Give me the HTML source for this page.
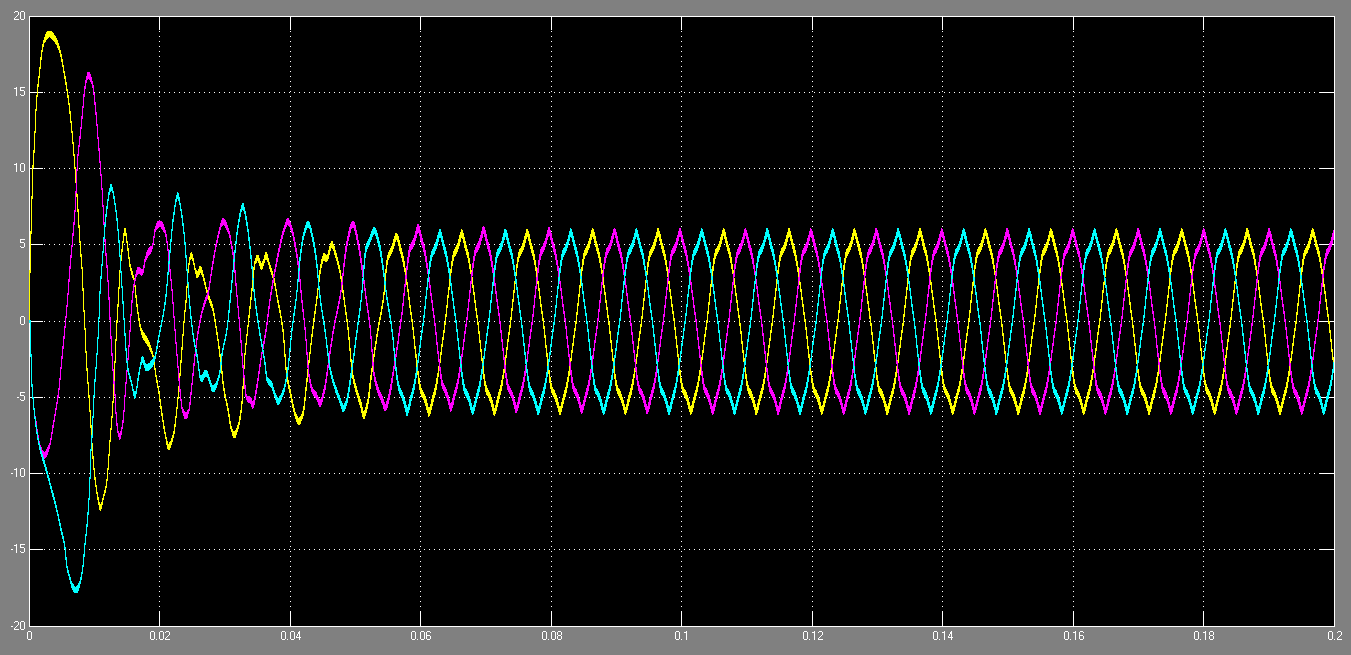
<!DOCTYPE html>
<html><head><meta charset="utf-8"><style>
html,body{margin:0;padding:0;background:#808080;width:1351px;height:655px;overflow:hidden;position:relative}
svg{position:absolute;left:0;top:0}
</style></head><body>
<svg width="1351" height="655" viewBox="0 0 1351 655">
<rect x="29" y="16" width="1306" height="611" fill="#000"/>
<g shape-rendering="crispEdges"><rect x="159" y="16" width="1" height="14" fill="#fff"/><rect x="159" y="612" width="1" height="14" fill="#fff"/><rect x="290" y="16" width="1" height="14" fill="#fff"/><rect x="290" y="612" width="1" height="14" fill="#fff"/><rect x="420" y="16" width="1" height="14" fill="#fff"/><rect x="420" y="612" width="1" height="14" fill="#fff"/><rect x="551" y="16" width="1" height="14" fill="#fff"/><rect x="551" y="612" width="1" height="14" fill="#fff"/><rect x="681" y="16" width="1" height="14" fill="#fff"/><rect x="681" y="612" width="1" height="14" fill="#fff"/><rect x="812" y="16" width="1" height="14" fill="#fff"/><rect x="812" y="612" width="1" height="14" fill="#fff"/><rect x="942" y="16" width="1" height="14" fill="#fff"/><rect x="942" y="612" width="1" height="14" fill="#fff"/><rect x="1073" y="16" width="1" height="14" fill="#fff"/><rect x="1073" y="612" width="1" height="14" fill="#fff"/><rect x="1203" y="16" width="1" height="14" fill="#fff"/><rect x="1203" y="612" width="1" height="14" fill="#fff"/><rect x="29" y="92" width="14" height="1" fill="#fff"/><rect x="1319" y="92" width="15" height="1" fill="#fff"/><rect x="29" y="168" width="14" height="1" fill="#fff"/><rect x="1319" y="168" width="15" height="1" fill="#fff"/><rect x="29" y="244" width="14" height="1" fill="#fff"/><rect x="1319" y="244" width="15" height="1" fill="#fff"/><rect x="29" y="321" width="14" height="1" fill="#fff"/><rect x="1319" y="321" width="15" height="1" fill="#fff"/><rect x="29" y="397" width="14" height="1" fill="#fff"/><rect x="1319" y="397" width="15" height="1" fill="#fff"/><rect x="29" y="473" width="14" height="1" fill="#fff"/><rect x="1319" y="473" width="15" height="1" fill="#fff"/><rect x="29" y="549" width="14" height="1" fill="#fff"/><rect x="1319" y="549" width="15" height="1" fill="#fff"/><path fill="#fff" d="M159 31h1v1h-1zM159 36h1v1h-1zM159 41h1v1h-1zM159 46h1v1h-1zM159 51h1v1h-1zM159 56h1v1h-1zM159 61h1v1h-1zM159 66h1v1h-1zM159 71h1v1h-1zM159 76h1v1h-1zM159 81h1v1h-1zM159 86h1v1h-1zM159 91h1v1h-1zM159 96h1v1h-1zM159 101h1v1h-1zM159 106h1v1h-1zM159 111h1v1h-1zM159 116h1v1h-1zM159 121h1v1h-1zM159 126h1v1h-1zM159 131h1v1h-1zM159 136h1v1h-1zM159 141h1v1h-1zM159 146h1v1h-1zM159 151h1v1h-1zM159 156h1v1h-1zM159 161h1v1h-1zM159 166h1v1h-1zM159 171h1v1h-1zM159 176h1v1h-1zM159 181h1v1h-1zM159 186h1v1h-1zM159 191h1v1h-1zM159 196h1v1h-1zM159 201h1v1h-1zM159 206h1v1h-1zM159 211h1v1h-1zM159 216h1v1h-1zM159 221h1v1h-1zM159 226h1v1h-1zM159 231h1v1h-1zM159 236h1v1h-1zM159 241h1v1h-1zM159 246h1v1h-1zM159 251h1v1h-1zM159 256h1v1h-1zM159 261h1v1h-1zM159 266h1v1h-1zM159 271h1v1h-1zM159 276h1v1h-1zM159 281h1v1h-1zM159 286h1v1h-1zM159 291h1v1h-1zM159 296h1v1h-1zM159 301h1v1h-1zM159 306h1v1h-1zM159 311h1v1h-1zM159 316h1v1h-1zM159 321h1v1h-1zM159 326h1v1h-1zM159 331h1v1h-1zM159 336h1v1h-1zM159 341h1v1h-1zM159 346h1v1h-1zM159 351h1v1h-1zM159 356h1v1h-1zM159 361h1v1h-1zM159 366h1v1h-1zM159 371h1v1h-1zM159 376h1v1h-1zM159 381h1v1h-1zM159 386h1v1h-1zM159 391h1v1h-1zM159 396h1v1h-1zM159 401h1v1h-1zM159 406h1v1h-1zM159 411h1v1h-1zM159 416h1v1h-1zM159 421h1v1h-1zM159 426h1v1h-1zM159 431h1v1h-1zM159 436h1v1h-1zM159 441h1v1h-1zM159 446h1v1h-1zM159 451h1v1h-1zM159 456h1v1h-1zM159 461h1v1h-1zM159 466h1v1h-1zM159 471h1v1h-1zM159 476h1v1h-1zM159 481h1v1h-1zM159 486h1v1h-1zM159 491h1v1h-1zM159 496h1v1h-1zM159 501h1v1h-1zM159 506h1v1h-1zM159 511h1v1h-1zM159 516h1v1h-1zM159 521h1v1h-1zM159 526h1v1h-1zM159 531h1v1h-1zM159 536h1v1h-1zM159 541h1v1h-1zM159 546h1v1h-1zM159 551h1v1h-1zM159 556h1v1h-1zM159 561h1v1h-1zM159 566h1v1h-1zM159 571h1v1h-1zM159 576h1v1h-1zM159 581h1v1h-1zM159 586h1v1h-1zM159 591h1v1h-1zM159 596h1v1h-1zM159 601h1v1h-1zM159 606h1v1h-1zM159 611h1v1h-1zM290 31h1v1h-1zM290 36h1v1h-1zM290 41h1v1h-1zM290 46h1v1h-1zM290 51h1v1h-1zM290 56h1v1h-1zM290 61h1v1h-1zM290 66h1v1h-1zM290 71h1v1h-1zM290 76h1v1h-1zM290 81h1v1h-1zM290 86h1v1h-1zM290 91h1v1h-1zM290 96h1v1h-1zM290 101h1v1h-1zM290 106h1v1h-1zM290 111h1v1h-1zM290 116h1v1h-1zM290 121h1v1h-1zM290 126h1v1h-1zM290 131h1v1h-1zM290 136h1v1h-1zM290 141h1v1h-1zM290 146h1v1h-1zM290 151h1v1h-1zM290 156h1v1h-1zM290 161h1v1h-1zM290 166h1v1h-1zM290 171h1v1h-1zM290 176h1v1h-1zM290 181h1v1h-1zM290 186h1v1h-1zM290 191h1v1h-1zM290 196h1v1h-1zM290 201h1v1h-1zM290 206h1v1h-1zM290 211h1v1h-1zM290 216h1v1h-1zM290 221h1v1h-1zM290 226h1v1h-1zM290 231h1v1h-1zM290 236h1v1h-1zM290 241h1v1h-1zM290 246h1v1h-1zM290 251h1v1h-1zM290 256h1v1h-1zM290 261h1v1h-1zM290 266h1v1h-1zM290 271h1v1h-1zM290 276h1v1h-1zM290 281h1v1h-1zM290 286h1v1h-1zM290 291h1v1h-1zM290 296h1v1h-1zM290 301h1v1h-1zM290 306h1v1h-1zM290 311h1v1h-1zM290 316h1v1h-1zM290 321h1v1h-1zM290 326h1v1h-1zM290 331h1v1h-1zM290 336h1v1h-1zM290 341h1v1h-1zM290 346h1v1h-1zM290 351h1v1h-1zM290 356h1v1h-1zM290 361h1v1h-1zM290 366h1v1h-1zM290 371h1v1h-1zM290 376h1v1h-1zM290 381h1v1h-1zM290 386h1v1h-1zM290 391h1v1h-1zM290 396h1v1h-1zM290 401h1v1h-1zM290 406h1v1h-1zM290 411h1v1h-1zM290 416h1v1h-1zM290 421h1v1h-1zM290 426h1v1h-1zM290 431h1v1h-1zM290 436h1v1h-1zM290 441h1v1h-1zM290 446h1v1h-1zM290 451h1v1h-1zM290 456h1v1h-1zM290 461h1v1h-1zM290 466h1v1h-1zM290 471h1v1h-1zM290 476h1v1h-1zM290 481h1v1h-1zM290 486h1v1h-1zM290 491h1v1h-1zM290 496h1v1h-1zM290 501h1v1h-1zM290 506h1v1h-1zM290 511h1v1h-1zM290 516h1v1h-1zM290 521h1v1h-1zM290 526h1v1h-1zM290 531h1v1h-1zM290 536h1v1h-1zM290 541h1v1h-1zM290 546h1v1h-1zM290 551h1v1h-1zM290 556h1v1h-1zM290 561h1v1h-1zM290 566h1v1h-1zM290 571h1v1h-1zM290 576h1v1h-1zM290 581h1v1h-1zM290 586h1v1h-1zM290 591h1v1h-1zM290 596h1v1h-1zM290 601h1v1h-1zM290 606h1v1h-1zM290 611h1v1h-1zM420 31h1v1h-1zM420 36h1v1h-1zM420 41h1v1h-1zM420 46h1v1h-1zM420 51h1v1h-1zM420 56h1v1h-1zM420 61h1v1h-1zM420 66h1v1h-1zM420 71h1v1h-1zM420 76h1v1h-1zM420 81h1v1h-1zM420 86h1v1h-1zM420 91h1v1h-1zM420 96h1v1h-1zM420 101h1v1h-1zM420 106h1v1h-1zM420 111h1v1h-1zM420 116h1v1h-1zM420 121h1v1h-1zM420 126h1v1h-1zM420 131h1v1h-1zM420 136h1v1h-1zM420 141h1v1h-1zM420 146h1v1h-1zM420 151h1v1h-1zM420 156h1v1h-1zM420 161h1v1h-1zM420 166h1v1h-1zM420 171h1v1h-1zM420 176h1v1h-1zM420 181h1v1h-1zM420 186h1v1h-1zM420 191h1v1h-1zM420 196h1v1h-1zM420 201h1v1h-1zM420 206h1v1h-1zM420 211h1v1h-1zM420 216h1v1h-1zM420 221h1v1h-1zM420 226h1v1h-1zM420 231h1v1h-1zM420 236h1v1h-1zM420 241h1v1h-1zM420 246h1v1h-1zM420 251h1v1h-1zM420 256h1v1h-1zM420 261h1v1h-1zM420 266h1v1h-1zM420 271h1v1h-1zM420 276h1v1h-1zM420 281h1v1h-1zM420 286h1v1h-1zM420 291h1v1h-1zM420 296h1v1h-1zM420 301h1v1h-1zM420 306h1v1h-1zM420 311h1v1h-1zM420 316h1v1h-1zM420 321h1v1h-1zM420 326h1v1h-1zM420 331h1v1h-1zM420 336h1v1h-1zM420 341h1v1h-1zM420 346h1v1h-1zM420 351h1v1h-1zM420 356h1v1h-1zM420 361h1v1h-1zM420 366h1v1h-1zM420 371h1v1h-1zM420 376h1v1h-1zM420 381h1v1h-1zM420 386h1v1h-1zM420 391h1v1h-1zM420 396h1v1h-1zM420 401h1v1h-1zM420 406h1v1h-1zM420 411h1v1h-1zM420 416h1v1h-1zM420 421h1v1h-1zM420 426h1v1h-1zM420 431h1v1h-1zM420 436h1v1h-1zM420 441h1v1h-1zM420 446h1v1h-1zM420 451h1v1h-1zM420 456h1v1h-1zM420 461h1v1h-1zM420 466h1v1h-1zM420 471h1v1h-1zM420 476h1v1h-1zM420 481h1v1h-1zM420 486h1v1h-1zM420 491h1v1h-1zM420 496h1v1h-1zM420 501h1v1h-1zM420 506h1v1h-1zM420 511h1v1h-1zM420 516h1v1h-1zM420 521h1v1h-1zM420 526h1v1h-1zM420 531h1v1h-1zM420 536h1v1h-1zM420 541h1v1h-1zM420 546h1v1h-1zM420 551h1v1h-1zM420 556h1v1h-1zM420 561h1v1h-1zM420 566h1v1h-1zM420 571h1v1h-1zM420 576h1v1h-1zM420 581h1v1h-1zM420 586h1v1h-1zM420 591h1v1h-1zM420 596h1v1h-1zM420 601h1v1h-1zM420 606h1v1h-1zM420 611h1v1h-1zM551 31h1v1h-1zM551 36h1v1h-1zM551 41h1v1h-1zM551 46h1v1h-1zM551 51h1v1h-1zM551 56h1v1h-1zM551 61h1v1h-1zM551 66h1v1h-1zM551 71h1v1h-1zM551 76h1v1h-1zM551 81h1v1h-1zM551 86h1v1h-1zM551 91h1v1h-1zM551 96h1v1h-1zM551 101h1v1h-1zM551 106h1v1h-1zM551 111h1v1h-1zM551 116h1v1h-1zM551 121h1v1h-1zM551 126h1v1h-1zM551 131h1v1h-1zM551 136h1v1h-1zM551 141h1v1h-1zM551 146h1v1h-1zM551 151h1v1h-1zM551 156h1v1h-1zM551 161h1v1h-1zM551 166h1v1h-1zM551 171h1v1h-1zM551 176h1v1h-1zM551 181h1v1h-1zM551 186h1v1h-1zM551 191h1v1h-1zM551 196h1v1h-1zM551 201h1v1h-1zM551 206h1v1h-1zM551 211h1v1h-1zM551 216h1v1h-1zM551 221h1v1h-1zM551 226h1v1h-1zM551 231h1v1h-1zM551 236h1v1h-1zM551 241h1v1h-1zM551 246h1v1h-1zM551 251h1v1h-1zM551 256h1v1h-1zM551 261h1v1h-1zM551 266h1v1h-1zM551 271h1v1h-1zM551 276h1v1h-1zM551 281h1v1h-1zM551 286h1v1h-1zM551 291h1v1h-1zM551 296h1v1h-1zM551 301h1v1h-1zM551 306h1v1h-1zM551 311h1v1h-1zM551 316h1v1h-1zM551 321h1v1h-1zM551 326h1v1h-1zM551 331h1v1h-1zM551 336h1v1h-1zM551 341h1v1h-1zM551 346h1v1h-1zM551 351h1v1h-1zM551 356h1v1h-1zM551 361h1v1h-1zM551 366h1v1h-1zM551 371h1v1h-1zM551 376h1v1h-1zM551 381h1v1h-1zM551 386h1v1h-1zM551 391h1v1h-1zM551 396h1v1h-1zM551 401h1v1h-1zM551 406h1v1h-1zM551 411h1v1h-1zM551 416h1v1h-1zM551 421h1v1h-1zM551 426h1v1h-1zM551 431h1v1h-1zM551 436h1v1h-1zM551 441h1v1h-1zM551 446h1v1h-1zM551 451h1v1h-1zM551 456h1v1h-1zM551 461h1v1h-1zM551 466h1v1h-1zM551 471h1v1h-1zM551 476h1v1h-1zM551 481h1v1h-1zM551 486h1v1h-1zM551 491h1v1h-1zM551 496h1v1h-1zM551 501h1v1h-1zM551 506h1v1h-1zM551 511h1v1h-1zM551 516h1v1h-1zM551 521h1v1h-1zM551 526h1v1h-1zM551 531h1v1h-1zM551 536h1v1h-1zM551 541h1v1h-1zM551 546h1v1h-1zM551 551h1v1h-1zM551 556h1v1h-1zM551 561h1v1h-1zM551 566h1v1h-1zM551 571h1v1h-1zM551 576h1v1h-1zM551 581h1v1h-1zM551 586h1v1h-1zM551 591h1v1h-1zM551 596h1v1h-1zM551 601h1v1h-1zM551 606h1v1h-1zM551 611h1v1h-1zM681 31h1v1h-1zM681 36h1v1h-1zM681 41h1v1h-1zM681 46h1v1h-1zM681 51h1v1h-1zM681 56h1v1h-1zM681 61h1v1h-1zM681 66h1v1h-1zM681 71h1v1h-1zM681 76h1v1h-1zM681 81h1v1h-1zM681 86h1v1h-1zM681 91h1v1h-1zM681 96h1v1h-1zM681 101h1v1h-1zM681 106h1v1h-1zM681 111h1v1h-1zM681 116h1v1h-1zM681 121h1v1h-1zM681 126h1v1h-1zM681 131h1v1h-1zM681 136h1v1h-1zM681 141h1v1h-1zM681 146h1v1h-1zM681 151h1v1h-1zM681 156h1v1h-1zM681 161h1v1h-1zM681 166h1v1h-1zM681 171h1v1h-1zM681 176h1v1h-1zM681 181h1v1h-1zM681 186h1v1h-1zM681 191h1v1h-1zM681 196h1v1h-1zM681 201h1v1h-1zM681 206h1v1h-1zM681 211h1v1h-1zM681 216h1v1h-1zM681 221h1v1h-1zM681 226h1v1h-1zM681 231h1v1h-1zM681 236h1v1h-1zM681 241h1v1h-1zM681 246h1v1h-1zM681 251h1v1h-1zM681 256h1v1h-1zM681 261h1v1h-1zM681 266h1v1h-1zM681 271h1v1h-1zM681 276h1v1h-1zM681 281h1v1h-1zM681 286h1v1h-1zM681 291h1v1h-1zM681 296h1v1h-1zM681 301h1v1h-1zM681 306h1v1h-1zM681 311h1v1h-1zM681 316h1v1h-1zM681 321h1v1h-1zM681 326h1v1h-1zM681 331h1v1h-1zM681 336h1v1h-1zM681 341h1v1h-1zM681 346h1v1h-1zM681 351h1v1h-1zM681 356h1v1h-1zM681 361h1v1h-1zM681 366h1v1h-1zM681 371h1v1h-1zM681 376h1v1h-1zM681 381h1v1h-1zM681 386h1v1h-1zM681 391h1v1h-1zM681 396h1v1h-1zM681 401h1v1h-1zM681 406h1v1h-1zM681 411h1v1h-1zM681 416h1v1h-1zM681 421h1v1h-1zM681 426h1v1h-1zM681 431h1v1h-1zM681 436h1v1h-1zM681 441h1v1h-1zM681 446h1v1h-1zM681 451h1v1h-1zM681 456h1v1h-1zM681 461h1v1h-1zM681 466h1v1h-1zM681 471h1v1h-1zM681 476h1v1h-1zM681 481h1v1h-1zM681 486h1v1h-1zM681 491h1v1h-1zM681 496h1v1h-1zM681 501h1v1h-1zM681 506h1v1h-1zM681 511h1v1h-1zM681 516h1v1h-1zM681 521h1v1h-1zM681 526h1v1h-1zM681 531h1v1h-1zM681 536h1v1h-1zM681 541h1v1h-1zM681 546h1v1h-1zM681 551h1v1h-1zM681 556h1v1h-1zM681 561h1v1h-1zM681 566h1v1h-1zM681 571h1v1h-1zM681 576h1v1h-1zM681 581h1v1h-1zM681 586h1v1h-1zM681 591h1v1h-1zM681 596h1v1h-1zM681 601h1v1h-1zM681 606h1v1h-1zM681 611h1v1h-1zM812 31h1v1h-1zM812 36h1v1h-1zM812 41h1v1h-1zM812 46h1v1h-1zM812 51h1v1h-1zM812 56h1v1h-1zM812 61h1v1h-1zM812 66h1v1h-1zM812 71h1v1h-1zM812 76h1v1h-1zM812 81h1v1h-1zM812 86h1v1h-1zM812 91h1v1h-1zM812 96h1v1h-1zM812 101h1v1h-1zM812 106h1v1h-1zM812 111h1v1h-1zM812 116h1v1h-1zM812 121h1v1h-1zM812 126h1v1h-1zM812 131h1v1h-1zM812 136h1v1h-1zM812 141h1v1h-1zM812 146h1v1h-1zM812 151h1v1h-1zM812 156h1v1h-1zM812 161h1v1h-1zM812 166h1v1h-1zM812 171h1v1h-1zM812 176h1v1h-1zM812 181h1v1h-1zM812 186h1v1h-1zM812 191h1v1h-1zM812 196h1v1h-1zM812 201h1v1h-1zM812 206h1v1h-1zM812 211h1v1h-1zM812 216h1v1h-1zM812 221h1v1h-1zM812 226h1v1h-1zM812 231h1v1h-1zM812 236h1v1h-1zM812 241h1v1h-1zM812 246h1v1h-1zM812 251h1v1h-1zM812 256h1v1h-1zM812 261h1v1h-1zM812 266h1v1h-1zM812 271h1v1h-1zM812 276h1v1h-1zM812 281h1v1h-1zM812 286h1v1h-1zM812 291h1v1h-1zM812 296h1v1h-1zM812 301h1v1h-1zM812 306h1v1h-1zM812 311h1v1h-1zM812 316h1v1h-1zM812 321h1v1h-1zM812 326h1v1h-1zM812 331h1v1h-1zM812 336h1v1h-1zM812 341h1v1h-1zM812 346h1v1h-1zM812 351h1v1h-1zM812 356h1v1h-1zM812 361h1v1h-1zM812 366h1v1h-1zM812 371h1v1h-1zM812 376h1v1h-1zM812 381h1v1h-1zM812 386h1v1h-1zM812 391h1v1h-1zM812 396h1v1h-1zM812 401h1v1h-1zM812 406h1v1h-1zM812 411h1v1h-1zM812 416h1v1h-1zM812 421h1v1h-1zM812 426h1v1h-1zM812 431h1v1h-1zM812 436h1v1h-1zM812 441h1v1h-1zM812 446h1v1h-1zM812 451h1v1h-1zM812 456h1v1h-1zM812 461h1v1h-1zM812 466h1v1h-1zM812 471h1v1h-1zM812 476h1v1h-1zM812 481h1v1h-1zM812 486h1v1h-1zM812 491h1v1h-1zM812 496h1v1h-1zM812 501h1v1h-1zM812 506h1v1h-1zM812 511h1v1h-1zM812 516h1v1h-1zM812 521h1v1h-1zM812 526h1v1h-1zM812 531h1v1h-1zM812 536h1v1h-1zM812 541h1v1h-1zM812 546h1v1h-1zM812 551h1v1h-1zM812 556h1v1h-1zM812 561h1v1h-1zM812 566h1v1h-1zM812 571h1v1h-1zM812 576h1v1h-1zM812 581h1v1h-1zM812 586h1v1h-1zM812 591h1v1h-1zM812 596h1v1h-1zM812 601h1v1h-1zM812 606h1v1h-1zM812 611h1v1h-1zM942 31h1v1h-1zM942 36h1v1h-1zM942 41h1v1h-1zM942 46h1v1h-1zM942 51h1v1h-1zM942 56h1v1h-1zM942 61h1v1h-1zM942 66h1v1h-1zM942 71h1v1h-1zM942 76h1v1h-1zM942 81h1v1h-1zM942 86h1v1h-1zM942 91h1v1h-1zM942 96h1v1h-1zM942 101h1v1h-1zM942 106h1v1h-1zM942 111h1v1h-1zM942 116h1v1h-1zM942 121h1v1h-1zM942 126h1v1h-1zM942 131h1v1h-1zM942 136h1v1h-1zM942 141h1v1h-1zM942 146h1v1h-1zM942 151h1v1h-1zM942 156h1v1h-1zM942 161h1v1h-1zM942 166h1v1h-1zM942 171h1v1h-1zM942 176h1v1h-1zM942 181h1v1h-1zM942 186h1v1h-1zM942 191h1v1h-1zM942 196h1v1h-1zM942 201h1v1h-1zM942 206h1v1h-1zM942 211h1v1h-1zM942 216h1v1h-1zM942 221h1v1h-1zM942 226h1v1h-1zM942 231h1v1h-1zM942 236h1v1h-1zM942 241h1v1h-1zM942 246h1v1h-1zM942 251h1v1h-1zM942 256h1v1h-1zM942 261h1v1h-1zM942 266h1v1h-1zM942 271h1v1h-1zM942 276h1v1h-1zM942 281h1v1h-1zM942 286h1v1h-1zM942 291h1v1h-1zM942 296h1v1h-1zM942 301h1v1h-1zM942 306h1v1h-1zM942 311h1v1h-1zM942 316h1v1h-1zM942 321h1v1h-1zM942 326h1v1h-1zM942 331h1v1h-1zM942 336h1v1h-1zM942 341h1v1h-1zM942 346h1v1h-1zM942 351h1v1h-1zM942 356h1v1h-1zM942 361h1v1h-1zM942 366h1v1h-1zM942 371h1v1h-1zM942 376h1v1h-1zM942 381h1v1h-1zM942 386h1v1h-1zM942 391h1v1h-1zM942 396h1v1h-1zM942 401h1v1h-1zM942 406h1v1h-1zM942 411h1v1h-1zM942 416h1v1h-1zM942 421h1v1h-1zM942 426h1v1h-1zM942 431h1v1h-1zM942 436h1v1h-1zM942 441h1v1h-1zM942 446h1v1h-1zM942 451h1v1h-1zM942 456h1v1h-1zM942 461h1v1h-1zM942 466h1v1h-1zM942 471h1v1h-1zM942 476h1v1h-1zM942 481h1v1h-1zM942 486h1v1h-1zM942 491h1v1h-1zM942 496h1v1h-1zM942 501h1v1h-1zM942 506h1v1h-1zM942 511h1v1h-1zM942 516h1v1h-1zM942 521h1v1h-1zM942 526h1v1h-1zM942 531h1v1h-1zM942 536h1v1h-1zM942 541h1v1h-1zM942 546h1v1h-1zM942 551h1v1h-1zM942 556h1v1h-1zM942 561h1v1h-1zM942 566h1v1h-1zM942 571h1v1h-1zM942 576h1v1h-1zM942 581h1v1h-1zM942 586h1v1h-1zM942 591h1v1h-1zM942 596h1v1h-1zM942 601h1v1h-1zM942 606h1v1h-1zM942 611h1v1h-1zM1073 31h1v1h-1zM1073 36h1v1h-1zM1073 41h1v1h-1zM1073 46h1v1h-1zM1073 51h1v1h-1zM1073 56h1v1h-1zM1073 61h1v1h-1zM1073 66h1v1h-1zM1073 71h1v1h-1zM1073 76h1v1h-1zM1073 81h1v1h-1zM1073 86h1v1h-1zM1073 91h1v1h-1zM1073 96h1v1h-1zM1073 101h1v1h-1zM1073 106h1v1h-1zM1073 111h1v1h-1zM1073 116h1v1h-1zM1073 121h1v1h-1zM1073 126h1v1h-1zM1073 131h1v1h-1zM1073 136h1v1h-1zM1073 141h1v1h-1zM1073 146h1v1h-1zM1073 151h1v1h-1zM1073 156h1v1h-1zM1073 161h1v1h-1zM1073 166h1v1h-1zM1073 171h1v1h-1zM1073 176h1v1h-1zM1073 181h1v1h-1zM1073 186h1v1h-1zM1073 191h1v1h-1zM1073 196h1v1h-1zM1073 201h1v1h-1zM1073 206h1v1h-1zM1073 211h1v1h-1zM1073 216h1v1h-1zM1073 221h1v1h-1zM1073 226h1v1h-1zM1073 231h1v1h-1zM1073 236h1v1h-1zM1073 241h1v1h-1zM1073 246h1v1h-1zM1073 251h1v1h-1zM1073 256h1v1h-1zM1073 261h1v1h-1zM1073 266h1v1h-1zM1073 271h1v1h-1zM1073 276h1v1h-1zM1073 281h1v1h-1zM1073 286h1v1h-1zM1073 291h1v1h-1zM1073 296h1v1h-1zM1073 301h1v1h-1zM1073 306h1v1h-1zM1073 311h1v1h-1zM1073 316h1v1h-1zM1073 321h1v1h-1zM1073 326h1v1h-1zM1073 331h1v1h-1zM1073 336h1v1h-1zM1073 341h1v1h-1zM1073 346h1v1h-1zM1073 351h1v1h-1zM1073 356h1v1h-1zM1073 361h1v1h-1zM1073 366h1v1h-1zM1073 371h1v1h-1zM1073 376h1v1h-1zM1073 381h1v1h-1zM1073 386h1v1h-1zM1073 391h1v1h-1zM1073 396h1v1h-1zM1073 401h1v1h-1zM1073 406h1v1h-1zM1073 411h1v1h-1zM1073 416h1v1h-1zM1073 421h1v1h-1zM1073 426h1v1h-1zM1073 431h1v1h-1zM1073 436h1v1h-1zM1073 441h1v1h-1zM1073 446h1v1h-1zM1073 451h1v1h-1zM1073 456h1v1h-1zM1073 461h1v1h-1zM1073 466h1v1h-1zM1073 471h1v1h-1zM1073 476h1v1h-1zM1073 481h1v1h-1zM1073 486h1v1h-1zM1073 491h1v1h-1zM1073 496h1v1h-1zM1073 501h1v1h-1zM1073 506h1v1h-1zM1073 511h1v1h-1zM1073 516h1v1h-1zM1073 521h1v1h-1zM1073 526h1v1h-1zM1073 531h1v1h-1zM1073 536h1v1h-1zM1073 541h1v1h-1zM1073 546h1v1h-1zM1073 551h1v1h-1zM1073 556h1v1h-1zM1073 561h1v1h-1zM1073 566h1v1h-1zM1073 571h1v1h-1zM1073 576h1v1h-1zM1073 581h1v1h-1zM1073 586h1v1h-1zM1073 591h1v1h-1zM1073 596h1v1h-1zM1073 601h1v1h-1zM1073 606h1v1h-1zM1073 611h1v1h-1zM1203 31h1v1h-1zM1203 36h1v1h-1zM1203 41h1v1h-1zM1203 46h1v1h-1zM1203 51h1v1h-1zM1203 56h1v1h-1zM1203 61h1v1h-1zM1203 66h1v1h-1zM1203 71h1v1h-1zM1203 76h1v1h-1zM1203 81h1v1h-1zM1203 86h1v1h-1zM1203 91h1v1h-1zM1203 96h1v1h-1zM1203 101h1v1h-1zM1203 106h1v1h-1zM1203 111h1v1h-1zM1203 116h1v1h-1zM1203 121h1v1h-1zM1203 126h1v1h-1zM1203 131h1v1h-1zM1203 136h1v1h-1zM1203 141h1v1h-1zM1203 146h1v1h-1zM1203 151h1v1h-1zM1203 156h1v1h-1zM1203 161h1v1h-1zM1203 166h1v1h-1zM1203 171h1v1h-1zM1203 176h1v1h-1zM1203 181h1v1h-1zM1203 186h1v1h-1zM1203 191h1v1h-1zM1203 196h1v1h-1zM1203 201h1v1h-1zM1203 206h1v1h-1zM1203 211h1v1h-1zM1203 216h1v1h-1zM1203 221h1v1h-1zM1203 226h1v1h-1zM1203 231h1v1h-1zM1203 236h1v1h-1zM1203 241h1v1h-1zM1203 246h1v1h-1zM1203 251h1v1h-1zM1203 256h1v1h-1zM1203 261h1v1h-1zM1203 266h1v1h-1zM1203 271h1v1h-1zM1203 276h1v1h-1zM1203 281h1v1h-1zM1203 286h1v1h-1zM1203 291h1v1h-1zM1203 296h1v1h-1zM1203 301h1v1h-1zM1203 306h1v1h-1zM1203 311h1v1h-1zM1203 316h1v1h-1zM1203 321h1v1h-1zM1203 326h1v1h-1zM1203 331h1v1h-1zM1203 336h1v1h-1zM1203 341h1v1h-1zM1203 346h1v1h-1zM1203 351h1v1h-1zM1203 356h1v1h-1zM1203 361h1v1h-1zM1203 366h1v1h-1zM1203 371h1v1h-1zM1203 376h1v1h-1zM1203 381h1v1h-1zM1203 386h1v1h-1zM1203 391h1v1h-1zM1203 396h1v1h-1zM1203 401h1v1h-1zM1203 406h1v1h-1zM1203 411h1v1h-1zM1203 416h1v1h-1zM1203 421h1v1h-1zM1203 426h1v1h-1zM1203 431h1v1h-1zM1203 436h1v1h-1zM1203 441h1v1h-1zM1203 446h1v1h-1zM1203 451h1v1h-1zM1203 456h1v1h-1zM1203 461h1v1h-1zM1203 466h1v1h-1zM1203 471h1v1h-1zM1203 476h1v1h-1zM1203 481h1v1h-1zM1203 486h1v1h-1zM1203 491h1v1h-1zM1203 496h1v1h-1zM1203 501h1v1h-1zM1203 506h1v1h-1zM1203 511h1v1h-1zM1203 516h1v1h-1zM1203 521h1v1h-1zM1203 526h1v1h-1zM1203 531h1v1h-1zM1203 536h1v1h-1zM1203 541h1v1h-1zM1203 546h1v1h-1zM1203 551h1v1h-1zM1203 556h1v1h-1zM1203 561h1v1h-1zM1203 566h1v1h-1zM1203 571h1v1h-1zM1203 576h1v1h-1zM1203 581h1v1h-1zM1203 586h1v1h-1zM1203 591h1v1h-1zM1203 596h1v1h-1zM1203 601h1v1h-1zM1203 606h1v1h-1zM1203 611h1v1h-1zM44 92h1v1h-1zM49 92h1v1h-1zM54 92h1v1h-1zM59 92h1v1h-1zM64 92h1v1h-1zM69 92h1v1h-1zM74 92h1v1h-1zM79 92h1v1h-1zM84 92h1v1h-1zM89 92h1v1h-1zM94 92h1v1h-1zM99 92h1v1h-1zM104 92h1v1h-1zM109 92h1v1h-1zM114 92h1v1h-1zM119 92h1v1h-1zM124 92h1v1h-1zM129 92h1v1h-1zM134 92h1v1h-1zM139 92h1v1h-1zM144 92h1v1h-1zM149 92h1v1h-1zM154 92h1v1h-1zM159 92h1v1h-1zM164 92h1v1h-1zM169 92h1v1h-1zM174 92h1v1h-1zM179 92h1v1h-1zM184 92h1v1h-1zM189 92h1v1h-1zM194 92h1v1h-1zM199 92h1v1h-1zM204 92h1v1h-1zM209 92h1v1h-1zM214 92h1v1h-1zM219 92h1v1h-1zM224 92h1v1h-1zM229 92h1v1h-1zM234 92h1v1h-1zM239 92h1v1h-1zM244 92h1v1h-1zM249 92h1v1h-1zM254 92h1v1h-1zM259 92h1v1h-1zM264 92h1v1h-1zM269 92h1v1h-1zM274 92h1v1h-1zM279 92h1v1h-1zM284 92h1v1h-1zM289 92h1v1h-1zM294 92h1v1h-1zM299 92h1v1h-1zM304 92h1v1h-1zM309 92h1v1h-1zM314 92h1v1h-1zM319 92h1v1h-1zM324 92h1v1h-1zM329 92h1v1h-1zM334 92h1v1h-1zM339 92h1v1h-1zM344 92h1v1h-1zM349 92h1v1h-1zM354 92h1v1h-1zM359 92h1v1h-1zM364 92h1v1h-1zM369 92h1v1h-1zM374 92h1v1h-1zM379 92h1v1h-1zM384 92h1v1h-1zM389 92h1v1h-1zM394 92h1v1h-1zM399 92h1v1h-1zM404 92h1v1h-1zM409 92h1v1h-1zM414 92h1v1h-1zM419 92h1v1h-1zM424 92h1v1h-1zM429 92h1v1h-1zM434 92h1v1h-1zM439 92h1v1h-1zM444 92h1v1h-1zM449 92h1v1h-1zM454 92h1v1h-1zM459 92h1v1h-1zM464 92h1v1h-1zM469 92h1v1h-1zM474 92h1v1h-1zM479 92h1v1h-1zM484 92h1v1h-1zM489 92h1v1h-1zM494 92h1v1h-1zM499 92h1v1h-1zM504 92h1v1h-1zM509 92h1v1h-1zM514 92h1v1h-1zM519 92h1v1h-1zM524 92h1v1h-1zM529 92h1v1h-1zM534 92h1v1h-1zM539 92h1v1h-1zM544 92h1v1h-1zM549 92h1v1h-1zM554 92h1v1h-1zM559 92h1v1h-1zM564 92h1v1h-1zM569 92h1v1h-1zM574 92h1v1h-1zM579 92h1v1h-1zM584 92h1v1h-1zM589 92h1v1h-1zM594 92h1v1h-1zM599 92h1v1h-1zM604 92h1v1h-1zM609 92h1v1h-1zM614 92h1v1h-1zM619 92h1v1h-1zM624 92h1v1h-1zM629 92h1v1h-1zM634 92h1v1h-1zM639 92h1v1h-1zM644 92h1v1h-1zM649 92h1v1h-1zM654 92h1v1h-1zM659 92h1v1h-1zM664 92h1v1h-1zM669 92h1v1h-1zM674 92h1v1h-1zM679 92h1v1h-1zM684 92h1v1h-1zM689 92h1v1h-1zM694 92h1v1h-1zM699 92h1v1h-1zM704 92h1v1h-1zM709 92h1v1h-1zM714 92h1v1h-1zM719 92h1v1h-1zM724 92h1v1h-1zM729 92h1v1h-1zM734 92h1v1h-1zM739 92h1v1h-1zM744 92h1v1h-1zM749 92h1v1h-1zM754 92h1v1h-1zM759 92h1v1h-1zM764 92h1v1h-1zM769 92h1v1h-1zM774 92h1v1h-1zM779 92h1v1h-1zM784 92h1v1h-1zM789 92h1v1h-1zM794 92h1v1h-1zM799 92h1v1h-1zM804 92h1v1h-1zM809 92h1v1h-1zM814 92h1v1h-1zM819 92h1v1h-1zM824 92h1v1h-1zM829 92h1v1h-1zM834 92h1v1h-1zM839 92h1v1h-1zM844 92h1v1h-1zM849 92h1v1h-1zM854 92h1v1h-1zM859 92h1v1h-1zM864 92h1v1h-1zM869 92h1v1h-1zM874 92h1v1h-1zM879 92h1v1h-1zM884 92h1v1h-1zM889 92h1v1h-1zM894 92h1v1h-1zM899 92h1v1h-1zM904 92h1v1h-1zM909 92h1v1h-1zM914 92h1v1h-1zM919 92h1v1h-1zM924 92h1v1h-1zM929 92h1v1h-1zM934 92h1v1h-1zM939 92h1v1h-1zM944 92h1v1h-1zM949 92h1v1h-1zM954 92h1v1h-1zM959 92h1v1h-1zM964 92h1v1h-1zM969 92h1v1h-1zM974 92h1v1h-1zM979 92h1v1h-1zM984 92h1v1h-1zM989 92h1v1h-1zM994 92h1v1h-1zM999 92h1v1h-1zM1004 92h1v1h-1zM1009 92h1v1h-1zM1014 92h1v1h-1zM1019 92h1v1h-1zM1024 92h1v1h-1zM1029 92h1v1h-1zM1034 92h1v1h-1zM1039 92h1v1h-1zM1044 92h1v1h-1zM1049 92h1v1h-1zM1054 92h1v1h-1zM1059 92h1v1h-1zM1064 92h1v1h-1zM1069 92h1v1h-1zM1074 92h1v1h-1zM1079 92h1v1h-1zM1084 92h1v1h-1zM1089 92h1v1h-1zM1094 92h1v1h-1zM1099 92h1v1h-1zM1104 92h1v1h-1zM1109 92h1v1h-1zM1114 92h1v1h-1zM1119 92h1v1h-1zM1124 92h1v1h-1zM1129 92h1v1h-1zM1134 92h1v1h-1zM1139 92h1v1h-1zM1144 92h1v1h-1zM1149 92h1v1h-1zM1154 92h1v1h-1zM1159 92h1v1h-1zM1164 92h1v1h-1zM1169 92h1v1h-1zM1174 92h1v1h-1zM1179 92h1v1h-1zM1184 92h1v1h-1zM1189 92h1v1h-1zM1194 92h1v1h-1zM1199 92h1v1h-1zM1204 92h1v1h-1zM1209 92h1v1h-1zM1214 92h1v1h-1zM1219 92h1v1h-1zM1224 92h1v1h-1zM1229 92h1v1h-1zM1234 92h1v1h-1zM1239 92h1v1h-1zM1244 92h1v1h-1zM1249 92h1v1h-1zM1254 92h1v1h-1zM1259 92h1v1h-1zM1264 92h1v1h-1zM1269 92h1v1h-1zM1274 92h1v1h-1zM1279 92h1v1h-1zM1284 92h1v1h-1zM1289 92h1v1h-1zM1294 92h1v1h-1zM1299 92h1v1h-1zM1304 92h1v1h-1zM1309 92h1v1h-1zM1314 92h1v1h-1zM1319 92h1v1h-1zM44 168h1v1h-1zM49 168h1v1h-1zM54 168h1v1h-1zM59 168h1v1h-1zM64 168h1v1h-1zM69 168h1v1h-1zM74 168h1v1h-1zM79 168h1v1h-1zM84 168h1v1h-1zM89 168h1v1h-1zM94 168h1v1h-1zM99 168h1v1h-1zM104 168h1v1h-1zM109 168h1v1h-1zM114 168h1v1h-1zM119 168h1v1h-1zM124 168h1v1h-1zM129 168h1v1h-1zM134 168h1v1h-1zM139 168h1v1h-1zM144 168h1v1h-1zM149 168h1v1h-1zM154 168h1v1h-1zM159 168h1v1h-1zM164 168h1v1h-1zM169 168h1v1h-1zM174 168h1v1h-1zM179 168h1v1h-1zM184 168h1v1h-1zM189 168h1v1h-1zM194 168h1v1h-1zM199 168h1v1h-1zM204 168h1v1h-1zM209 168h1v1h-1zM214 168h1v1h-1zM219 168h1v1h-1zM224 168h1v1h-1zM229 168h1v1h-1zM234 168h1v1h-1zM239 168h1v1h-1zM244 168h1v1h-1zM249 168h1v1h-1zM254 168h1v1h-1zM259 168h1v1h-1zM264 168h1v1h-1zM269 168h1v1h-1zM274 168h1v1h-1zM279 168h1v1h-1zM284 168h1v1h-1zM289 168h1v1h-1zM294 168h1v1h-1zM299 168h1v1h-1zM304 168h1v1h-1zM309 168h1v1h-1zM314 168h1v1h-1zM319 168h1v1h-1zM324 168h1v1h-1zM329 168h1v1h-1zM334 168h1v1h-1zM339 168h1v1h-1zM344 168h1v1h-1zM349 168h1v1h-1zM354 168h1v1h-1zM359 168h1v1h-1zM364 168h1v1h-1zM369 168h1v1h-1zM374 168h1v1h-1zM379 168h1v1h-1zM384 168h1v1h-1zM389 168h1v1h-1zM394 168h1v1h-1zM399 168h1v1h-1zM404 168h1v1h-1zM409 168h1v1h-1zM414 168h1v1h-1zM419 168h1v1h-1zM424 168h1v1h-1zM429 168h1v1h-1zM434 168h1v1h-1zM439 168h1v1h-1zM444 168h1v1h-1zM449 168h1v1h-1zM454 168h1v1h-1zM459 168h1v1h-1zM464 168h1v1h-1zM469 168h1v1h-1zM474 168h1v1h-1zM479 168h1v1h-1zM484 168h1v1h-1zM489 168h1v1h-1zM494 168h1v1h-1zM499 168h1v1h-1zM504 168h1v1h-1zM509 168h1v1h-1zM514 168h1v1h-1zM519 168h1v1h-1zM524 168h1v1h-1zM529 168h1v1h-1zM534 168h1v1h-1zM539 168h1v1h-1zM544 168h1v1h-1zM549 168h1v1h-1zM554 168h1v1h-1zM559 168h1v1h-1zM564 168h1v1h-1zM569 168h1v1h-1zM574 168h1v1h-1zM579 168h1v1h-1zM584 168h1v1h-1zM589 168h1v1h-1zM594 168h1v1h-1zM599 168h1v1h-1zM604 168h1v1h-1zM609 168h1v1h-1zM614 168h1v1h-1zM619 168h1v1h-1zM624 168h1v1h-1zM629 168h1v1h-1zM634 168h1v1h-1zM639 168h1v1h-1zM644 168h1v1h-1zM649 168h1v1h-1zM654 168h1v1h-1zM659 168h1v1h-1zM664 168h1v1h-1zM669 168h1v1h-1zM674 168h1v1h-1zM679 168h1v1h-1zM684 168h1v1h-1zM689 168h1v1h-1zM694 168h1v1h-1zM699 168h1v1h-1zM704 168h1v1h-1zM709 168h1v1h-1zM714 168h1v1h-1zM719 168h1v1h-1zM724 168h1v1h-1zM729 168h1v1h-1zM734 168h1v1h-1zM739 168h1v1h-1zM744 168h1v1h-1zM749 168h1v1h-1zM754 168h1v1h-1zM759 168h1v1h-1zM764 168h1v1h-1zM769 168h1v1h-1zM774 168h1v1h-1zM779 168h1v1h-1zM784 168h1v1h-1zM789 168h1v1h-1zM794 168h1v1h-1zM799 168h1v1h-1zM804 168h1v1h-1zM809 168h1v1h-1zM814 168h1v1h-1zM819 168h1v1h-1zM824 168h1v1h-1zM829 168h1v1h-1zM834 168h1v1h-1zM839 168h1v1h-1zM844 168h1v1h-1zM849 168h1v1h-1zM854 168h1v1h-1zM859 168h1v1h-1zM864 168h1v1h-1zM869 168h1v1h-1zM874 168h1v1h-1zM879 168h1v1h-1zM884 168h1v1h-1zM889 168h1v1h-1zM894 168h1v1h-1zM899 168h1v1h-1zM904 168h1v1h-1zM909 168h1v1h-1zM914 168h1v1h-1zM919 168h1v1h-1zM924 168h1v1h-1zM929 168h1v1h-1zM934 168h1v1h-1zM939 168h1v1h-1zM944 168h1v1h-1zM949 168h1v1h-1zM954 168h1v1h-1zM959 168h1v1h-1zM964 168h1v1h-1zM969 168h1v1h-1zM974 168h1v1h-1zM979 168h1v1h-1zM984 168h1v1h-1zM989 168h1v1h-1zM994 168h1v1h-1zM999 168h1v1h-1zM1004 168h1v1h-1zM1009 168h1v1h-1zM1014 168h1v1h-1zM1019 168h1v1h-1zM1024 168h1v1h-1zM1029 168h1v1h-1zM1034 168h1v1h-1zM1039 168h1v1h-1zM1044 168h1v1h-1zM1049 168h1v1h-1zM1054 168h1v1h-1zM1059 168h1v1h-1zM1064 168h1v1h-1zM1069 168h1v1h-1zM1074 168h1v1h-1zM1079 168h1v1h-1zM1084 168h1v1h-1zM1089 168h1v1h-1zM1094 168h1v1h-1zM1099 168h1v1h-1zM1104 168h1v1h-1zM1109 168h1v1h-1zM1114 168h1v1h-1zM1119 168h1v1h-1zM1124 168h1v1h-1zM1129 168h1v1h-1zM1134 168h1v1h-1zM1139 168h1v1h-1zM1144 168h1v1h-1zM1149 168h1v1h-1zM1154 168h1v1h-1zM1159 168h1v1h-1zM1164 168h1v1h-1zM1169 168h1v1h-1zM1174 168h1v1h-1zM1179 168h1v1h-1zM1184 168h1v1h-1zM1189 168h1v1h-1zM1194 168h1v1h-1zM1199 168h1v1h-1zM1204 168h1v1h-1zM1209 168h1v1h-1zM1214 168h1v1h-1zM1219 168h1v1h-1zM1224 168h1v1h-1zM1229 168h1v1h-1zM1234 168h1v1h-1zM1239 168h1v1h-1zM1244 168h1v1h-1zM1249 168h1v1h-1zM1254 168h1v1h-1zM1259 168h1v1h-1zM1264 168h1v1h-1zM1269 168h1v1h-1zM1274 168h1v1h-1zM1279 168h1v1h-1zM1284 168h1v1h-1zM1289 168h1v1h-1zM1294 168h1v1h-1zM1299 168h1v1h-1zM1304 168h1v1h-1zM1309 168h1v1h-1zM1314 168h1v1h-1zM1319 168h1v1h-1zM44 244h1v1h-1zM49 244h1v1h-1zM54 244h1v1h-1zM59 244h1v1h-1zM64 244h1v1h-1zM69 244h1v1h-1zM74 244h1v1h-1zM79 244h1v1h-1zM84 244h1v1h-1zM89 244h1v1h-1zM94 244h1v1h-1zM99 244h1v1h-1zM104 244h1v1h-1zM109 244h1v1h-1zM114 244h1v1h-1zM119 244h1v1h-1zM124 244h1v1h-1zM129 244h1v1h-1zM134 244h1v1h-1zM139 244h1v1h-1zM144 244h1v1h-1zM149 244h1v1h-1zM154 244h1v1h-1zM159 244h1v1h-1zM164 244h1v1h-1zM169 244h1v1h-1zM174 244h1v1h-1zM179 244h1v1h-1zM184 244h1v1h-1zM189 244h1v1h-1zM194 244h1v1h-1zM199 244h1v1h-1zM204 244h1v1h-1zM209 244h1v1h-1zM214 244h1v1h-1zM219 244h1v1h-1zM224 244h1v1h-1zM229 244h1v1h-1zM234 244h1v1h-1zM239 244h1v1h-1zM244 244h1v1h-1zM249 244h1v1h-1zM254 244h1v1h-1zM259 244h1v1h-1zM264 244h1v1h-1zM269 244h1v1h-1zM274 244h1v1h-1zM279 244h1v1h-1zM284 244h1v1h-1zM289 244h1v1h-1zM294 244h1v1h-1zM299 244h1v1h-1zM304 244h1v1h-1zM309 244h1v1h-1zM314 244h1v1h-1zM319 244h1v1h-1zM324 244h1v1h-1zM329 244h1v1h-1zM334 244h1v1h-1zM339 244h1v1h-1zM344 244h1v1h-1zM349 244h1v1h-1zM354 244h1v1h-1zM359 244h1v1h-1zM364 244h1v1h-1zM369 244h1v1h-1zM374 244h1v1h-1zM379 244h1v1h-1zM384 244h1v1h-1zM389 244h1v1h-1zM394 244h1v1h-1zM399 244h1v1h-1zM404 244h1v1h-1zM409 244h1v1h-1zM414 244h1v1h-1zM419 244h1v1h-1zM424 244h1v1h-1zM429 244h1v1h-1zM434 244h1v1h-1zM439 244h1v1h-1zM444 244h1v1h-1zM449 244h1v1h-1zM454 244h1v1h-1zM459 244h1v1h-1zM464 244h1v1h-1zM469 244h1v1h-1zM474 244h1v1h-1zM479 244h1v1h-1zM484 244h1v1h-1zM489 244h1v1h-1zM494 244h1v1h-1zM499 244h1v1h-1zM504 244h1v1h-1zM509 244h1v1h-1zM514 244h1v1h-1zM519 244h1v1h-1zM524 244h1v1h-1zM529 244h1v1h-1zM534 244h1v1h-1zM539 244h1v1h-1zM544 244h1v1h-1zM549 244h1v1h-1zM554 244h1v1h-1zM559 244h1v1h-1zM564 244h1v1h-1zM569 244h1v1h-1zM574 244h1v1h-1zM579 244h1v1h-1zM584 244h1v1h-1zM589 244h1v1h-1zM594 244h1v1h-1zM599 244h1v1h-1zM604 244h1v1h-1zM609 244h1v1h-1zM614 244h1v1h-1zM619 244h1v1h-1zM624 244h1v1h-1zM629 244h1v1h-1zM634 244h1v1h-1zM639 244h1v1h-1zM644 244h1v1h-1zM649 244h1v1h-1zM654 244h1v1h-1zM659 244h1v1h-1zM664 244h1v1h-1zM669 244h1v1h-1zM674 244h1v1h-1zM679 244h1v1h-1zM684 244h1v1h-1zM689 244h1v1h-1zM694 244h1v1h-1zM699 244h1v1h-1zM704 244h1v1h-1zM709 244h1v1h-1zM714 244h1v1h-1zM719 244h1v1h-1zM724 244h1v1h-1zM729 244h1v1h-1zM734 244h1v1h-1zM739 244h1v1h-1zM744 244h1v1h-1zM749 244h1v1h-1zM754 244h1v1h-1zM759 244h1v1h-1zM764 244h1v1h-1zM769 244h1v1h-1zM774 244h1v1h-1zM779 244h1v1h-1zM784 244h1v1h-1zM789 244h1v1h-1zM794 244h1v1h-1zM799 244h1v1h-1zM804 244h1v1h-1zM809 244h1v1h-1zM814 244h1v1h-1zM819 244h1v1h-1zM824 244h1v1h-1zM829 244h1v1h-1zM834 244h1v1h-1zM839 244h1v1h-1zM844 244h1v1h-1zM849 244h1v1h-1zM854 244h1v1h-1zM859 244h1v1h-1zM864 244h1v1h-1zM869 244h1v1h-1zM874 244h1v1h-1zM879 244h1v1h-1zM884 244h1v1h-1zM889 244h1v1h-1zM894 244h1v1h-1zM899 244h1v1h-1zM904 244h1v1h-1zM909 244h1v1h-1zM914 244h1v1h-1zM919 244h1v1h-1zM924 244h1v1h-1zM929 244h1v1h-1zM934 244h1v1h-1zM939 244h1v1h-1zM944 244h1v1h-1zM949 244h1v1h-1zM954 244h1v1h-1zM959 244h1v1h-1zM964 244h1v1h-1zM969 244h1v1h-1zM974 244h1v1h-1zM979 244h1v1h-1zM984 244h1v1h-1zM989 244h1v1h-1zM994 244h1v1h-1zM999 244h1v1h-1zM1004 244h1v1h-1zM1009 244h1v1h-1zM1014 244h1v1h-1zM1019 244h1v1h-1zM1024 244h1v1h-1zM1029 244h1v1h-1zM1034 244h1v1h-1zM1039 244h1v1h-1zM1044 244h1v1h-1zM1049 244h1v1h-1zM1054 244h1v1h-1zM1059 244h1v1h-1zM1064 244h1v1h-1zM1069 244h1v1h-1zM1074 244h1v1h-1zM1079 244h1v1h-1zM1084 244h1v1h-1zM1089 244h1v1h-1zM1094 244h1v1h-1zM1099 244h1v1h-1zM1104 244h1v1h-1zM1109 244h1v1h-1zM1114 244h1v1h-1zM1119 244h1v1h-1zM1124 244h1v1h-1zM1129 244h1v1h-1zM1134 244h1v1h-1zM1139 244h1v1h-1zM1144 244h1v1h-1zM1149 244h1v1h-1zM1154 244h1v1h-1zM1159 244h1v1h-1zM1164 244h1v1h-1zM1169 244h1v1h-1zM1174 244h1v1h-1zM1179 244h1v1h-1zM1184 244h1v1h-1zM1189 244h1v1h-1zM1194 244h1v1h-1zM1199 244h1v1h-1zM1204 244h1v1h-1zM1209 244h1v1h-1zM1214 244h1v1h-1zM1219 244h1v1h-1zM1224 244h1v1h-1zM1229 244h1v1h-1zM1234 244h1v1h-1zM1239 244h1v1h-1zM1244 244h1v1h-1zM1249 244h1v1h-1zM1254 244h1v1h-1zM1259 244h1v1h-1zM1264 244h1v1h-1zM1269 244h1v1h-1zM1274 244h1v1h-1zM1279 244h1v1h-1zM1284 244h1v1h-1zM1289 244h1v1h-1zM1294 244h1v1h-1zM1299 244h1v1h-1zM1304 244h1v1h-1zM1309 244h1v1h-1zM1314 244h1v1h-1zM1319 244h1v1h-1zM44 321h1v1h-1zM49 321h1v1h-1zM54 321h1v1h-1zM59 321h1v1h-1zM64 321h1v1h-1zM69 321h1v1h-1zM74 321h1v1h-1zM79 321h1v1h-1zM84 321h1v1h-1zM89 321h1v1h-1zM94 321h1v1h-1zM99 321h1v1h-1zM104 321h1v1h-1zM109 321h1v1h-1zM114 321h1v1h-1zM119 321h1v1h-1zM124 321h1v1h-1zM129 321h1v1h-1zM134 321h1v1h-1zM139 321h1v1h-1zM144 321h1v1h-1zM149 321h1v1h-1zM154 321h1v1h-1zM159 321h1v1h-1zM164 321h1v1h-1zM169 321h1v1h-1zM174 321h1v1h-1zM179 321h1v1h-1zM184 321h1v1h-1zM189 321h1v1h-1zM194 321h1v1h-1zM199 321h1v1h-1zM204 321h1v1h-1zM209 321h1v1h-1zM214 321h1v1h-1zM219 321h1v1h-1zM224 321h1v1h-1zM229 321h1v1h-1zM234 321h1v1h-1zM239 321h1v1h-1zM244 321h1v1h-1zM249 321h1v1h-1zM254 321h1v1h-1zM259 321h1v1h-1zM264 321h1v1h-1zM269 321h1v1h-1zM274 321h1v1h-1zM279 321h1v1h-1zM284 321h1v1h-1zM289 321h1v1h-1zM294 321h1v1h-1zM299 321h1v1h-1zM304 321h1v1h-1zM309 321h1v1h-1zM314 321h1v1h-1zM319 321h1v1h-1zM324 321h1v1h-1zM329 321h1v1h-1zM334 321h1v1h-1zM339 321h1v1h-1zM344 321h1v1h-1zM349 321h1v1h-1zM354 321h1v1h-1zM359 321h1v1h-1zM364 321h1v1h-1zM369 321h1v1h-1zM374 321h1v1h-1zM379 321h1v1h-1zM384 321h1v1h-1zM389 321h1v1h-1zM394 321h1v1h-1zM399 321h1v1h-1zM404 321h1v1h-1zM409 321h1v1h-1zM414 321h1v1h-1zM419 321h1v1h-1zM424 321h1v1h-1zM429 321h1v1h-1zM434 321h1v1h-1zM439 321h1v1h-1zM444 321h1v1h-1zM449 321h1v1h-1zM454 321h1v1h-1zM459 321h1v1h-1zM464 321h1v1h-1zM469 321h1v1h-1zM474 321h1v1h-1zM479 321h1v1h-1zM484 321h1v1h-1zM489 321h1v1h-1zM494 321h1v1h-1zM499 321h1v1h-1zM504 321h1v1h-1zM509 321h1v1h-1zM514 321h1v1h-1zM519 321h1v1h-1zM524 321h1v1h-1zM529 321h1v1h-1zM534 321h1v1h-1zM539 321h1v1h-1zM544 321h1v1h-1zM549 321h1v1h-1zM554 321h1v1h-1zM559 321h1v1h-1zM564 321h1v1h-1zM569 321h1v1h-1zM574 321h1v1h-1zM579 321h1v1h-1zM584 321h1v1h-1zM589 321h1v1h-1zM594 321h1v1h-1zM599 321h1v1h-1zM604 321h1v1h-1zM609 321h1v1h-1zM614 321h1v1h-1zM619 321h1v1h-1zM624 321h1v1h-1zM629 321h1v1h-1zM634 321h1v1h-1zM639 321h1v1h-1zM644 321h1v1h-1zM649 321h1v1h-1zM654 321h1v1h-1zM659 321h1v1h-1zM664 321h1v1h-1zM669 321h1v1h-1zM674 321h1v1h-1zM679 321h1v1h-1zM684 321h1v1h-1zM689 321h1v1h-1zM694 321h1v1h-1zM699 321h1v1h-1zM704 321h1v1h-1zM709 321h1v1h-1zM714 321h1v1h-1zM719 321h1v1h-1zM724 321h1v1h-1zM729 321h1v1h-1zM734 321h1v1h-1zM739 321h1v1h-1zM744 321h1v1h-1zM749 321h1v1h-1zM754 321h1v1h-1zM759 321h1v1h-1zM764 321h1v1h-1zM769 321h1v1h-1zM774 321h1v1h-1zM779 321h1v1h-1zM784 321h1v1h-1zM789 321h1v1h-1zM794 321h1v1h-1zM799 321h1v1h-1zM804 321h1v1h-1zM809 321h1v1h-1zM814 321h1v1h-1zM819 321h1v1h-1zM824 321h1v1h-1zM829 321h1v1h-1zM834 321h1v1h-1zM839 321h1v1h-1zM844 321h1v1h-1zM849 321h1v1h-1zM854 321h1v1h-1zM859 321h1v1h-1zM864 321h1v1h-1zM869 321h1v1h-1zM874 321h1v1h-1zM879 321h1v1h-1zM884 321h1v1h-1zM889 321h1v1h-1zM894 321h1v1h-1zM899 321h1v1h-1zM904 321h1v1h-1zM909 321h1v1h-1zM914 321h1v1h-1zM919 321h1v1h-1zM924 321h1v1h-1zM929 321h1v1h-1zM934 321h1v1h-1zM939 321h1v1h-1zM944 321h1v1h-1zM949 321h1v1h-1zM954 321h1v1h-1zM959 321h1v1h-1zM964 321h1v1h-1zM969 321h1v1h-1zM974 321h1v1h-1zM979 321h1v1h-1zM984 321h1v1h-1zM989 321h1v1h-1zM994 321h1v1h-1zM999 321h1v1h-1zM1004 321h1v1h-1zM1009 321h1v1h-1zM1014 321h1v1h-1zM1019 321h1v1h-1zM1024 321h1v1h-1zM1029 321h1v1h-1zM1034 321h1v1h-1zM1039 321h1v1h-1zM1044 321h1v1h-1zM1049 321h1v1h-1zM1054 321h1v1h-1zM1059 321h1v1h-1zM1064 321h1v1h-1zM1069 321h1v1h-1zM1074 321h1v1h-1zM1079 321h1v1h-1zM1084 321h1v1h-1zM1089 321h1v1h-1zM1094 321h1v1h-1zM1099 321h1v1h-1zM1104 321h1v1h-1zM1109 321h1v1h-1zM1114 321h1v1h-1zM1119 321h1v1h-1zM1124 321h1v1h-1zM1129 321h1v1h-1zM1134 321h1v1h-1zM1139 321h1v1h-1zM1144 321h1v1h-1zM1149 321h1v1h-1zM1154 321h1v1h-1zM1159 321h1v1h-1zM1164 321h1v1h-1zM1169 321h1v1h-1zM1174 321h1v1h-1zM1179 321h1v1h-1zM1184 321h1v1h-1zM1189 321h1v1h-1zM1194 321h1v1h-1zM1199 321h1v1h-1zM1204 321h1v1h-1zM1209 321h1v1h-1zM1214 321h1v1h-1zM1219 321h1v1h-1zM1224 321h1v1h-1zM1229 321h1v1h-1zM1234 321h1v1h-1zM1239 321h1v1h-1zM1244 321h1v1h-1zM1249 321h1v1h-1zM1254 321h1v1h-1zM1259 321h1v1h-1zM1264 321h1v1h-1zM1269 321h1v1h-1zM1274 321h1v1h-1zM1279 321h1v1h-1zM1284 321h1v1h-1zM1289 321h1v1h-1zM1294 321h1v1h-1zM1299 321h1v1h-1zM1304 321h1v1h-1zM1309 321h1v1h-1zM1314 321h1v1h-1zM1319 321h1v1h-1zM44 397h1v1h-1zM49 397h1v1h-1zM54 397h1v1h-1zM59 397h1v1h-1zM64 397h1v1h-1zM69 397h1v1h-1zM74 397h1v1h-1zM79 397h1v1h-1zM84 397h1v1h-1zM89 397h1v1h-1zM94 397h1v1h-1zM99 397h1v1h-1zM104 397h1v1h-1zM109 397h1v1h-1zM114 397h1v1h-1zM119 397h1v1h-1zM124 397h1v1h-1zM129 397h1v1h-1zM134 397h1v1h-1zM139 397h1v1h-1zM144 397h1v1h-1zM149 397h1v1h-1zM154 397h1v1h-1zM159 397h1v1h-1zM164 397h1v1h-1zM169 397h1v1h-1zM174 397h1v1h-1zM179 397h1v1h-1zM184 397h1v1h-1zM189 397h1v1h-1zM194 397h1v1h-1zM199 397h1v1h-1zM204 397h1v1h-1zM209 397h1v1h-1zM214 397h1v1h-1zM219 397h1v1h-1zM224 397h1v1h-1zM229 397h1v1h-1zM234 397h1v1h-1zM239 397h1v1h-1zM244 397h1v1h-1zM249 397h1v1h-1zM254 397h1v1h-1zM259 397h1v1h-1zM264 397h1v1h-1zM269 397h1v1h-1zM274 397h1v1h-1zM279 397h1v1h-1zM284 397h1v1h-1zM289 397h1v1h-1zM294 397h1v1h-1zM299 397h1v1h-1zM304 397h1v1h-1zM309 397h1v1h-1zM314 397h1v1h-1zM319 397h1v1h-1zM324 397h1v1h-1zM329 397h1v1h-1zM334 397h1v1h-1zM339 397h1v1h-1zM344 397h1v1h-1zM349 397h1v1h-1zM354 397h1v1h-1zM359 397h1v1h-1zM364 397h1v1h-1zM369 397h1v1h-1zM374 397h1v1h-1zM379 397h1v1h-1zM384 397h1v1h-1zM389 397h1v1h-1zM394 397h1v1h-1zM399 397h1v1h-1zM404 397h1v1h-1zM409 397h1v1h-1zM414 397h1v1h-1zM419 397h1v1h-1zM424 397h1v1h-1zM429 397h1v1h-1zM434 397h1v1h-1zM439 397h1v1h-1zM444 397h1v1h-1zM449 397h1v1h-1zM454 397h1v1h-1zM459 397h1v1h-1zM464 397h1v1h-1zM469 397h1v1h-1zM474 397h1v1h-1zM479 397h1v1h-1zM484 397h1v1h-1zM489 397h1v1h-1zM494 397h1v1h-1zM499 397h1v1h-1zM504 397h1v1h-1zM509 397h1v1h-1zM514 397h1v1h-1zM519 397h1v1h-1zM524 397h1v1h-1zM529 397h1v1h-1zM534 397h1v1h-1zM539 397h1v1h-1zM544 397h1v1h-1zM549 397h1v1h-1zM554 397h1v1h-1zM559 397h1v1h-1zM564 397h1v1h-1zM569 397h1v1h-1zM574 397h1v1h-1zM579 397h1v1h-1zM584 397h1v1h-1zM589 397h1v1h-1zM594 397h1v1h-1zM599 397h1v1h-1zM604 397h1v1h-1zM609 397h1v1h-1zM614 397h1v1h-1zM619 397h1v1h-1zM624 397h1v1h-1zM629 397h1v1h-1zM634 397h1v1h-1zM639 397h1v1h-1zM644 397h1v1h-1zM649 397h1v1h-1zM654 397h1v1h-1zM659 397h1v1h-1zM664 397h1v1h-1zM669 397h1v1h-1zM674 397h1v1h-1zM679 397h1v1h-1zM684 397h1v1h-1zM689 397h1v1h-1zM694 397h1v1h-1zM699 397h1v1h-1zM704 397h1v1h-1zM709 397h1v1h-1zM714 397h1v1h-1zM719 397h1v1h-1zM724 397h1v1h-1zM729 397h1v1h-1zM734 397h1v1h-1zM739 397h1v1h-1zM744 397h1v1h-1zM749 397h1v1h-1zM754 397h1v1h-1zM759 397h1v1h-1zM764 397h1v1h-1zM769 397h1v1h-1zM774 397h1v1h-1zM779 397h1v1h-1zM784 397h1v1h-1zM789 397h1v1h-1zM794 397h1v1h-1zM799 397h1v1h-1zM804 397h1v1h-1zM809 397h1v1h-1zM814 397h1v1h-1zM819 397h1v1h-1zM824 397h1v1h-1zM829 397h1v1h-1zM834 397h1v1h-1zM839 397h1v1h-1zM844 397h1v1h-1zM849 397h1v1h-1zM854 397h1v1h-1zM859 397h1v1h-1zM864 397h1v1h-1zM869 397h1v1h-1zM874 397h1v1h-1zM879 397h1v1h-1zM884 397h1v1h-1zM889 397h1v1h-1zM894 397h1v1h-1zM899 397h1v1h-1zM904 397h1v1h-1zM909 397h1v1h-1zM914 397h1v1h-1zM919 397h1v1h-1zM924 397h1v1h-1zM929 397h1v1h-1zM934 397h1v1h-1zM939 397h1v1h-1zM944 397h1v1h-1zM949 397h1v1h-1zM954 397h1v1h-1zM959 397h1v1h-1zM964 397h1v1h-1zM969 397h1v1h-1zM974 397h1v1h-1zM979 397h1v1h-1zM984 397h1v1h-1zM989 397h1v1h-1zM994 397h1v1h-1zM999 397h1v1h-1zM1004 397h1v1h-1zM1009 397h1v1h-1zM1014 397h1v1h-1zM1019 397h1v1h-1zM1024 397h1v1h-1zM1029 397h1v1h-1zM1034 397h1v1h-1zM1039 397h1v1h-1zM1044 397h1v1h-1zM1049 397h1v1h-1zM1054 397h1v1h-1zM1059 397h1v1h-1zM1064 397h1v1h-1zM1069 397h1v1h-1zM1074 397h1v1h-1zM1079 397h1v1h-1zM1084 397h1v1h-1zM1089 397h1v1h-1zM1094 397h1v1h-1zM1099 397h1v1h-1zM1104 397h1v1h-1zM1109 397h1v1h-1zM1114 397h1v1h-1zM1119 397h1v1h-1zM1124 397h1v1h-1zM1129 397h1v1h-1zM1134 397h1v1h-1zM1139 397h1v1h-1zM1144 397h1v1h-1zM1149 397h1v1h-1zM1154 397h1v1h-1zM1159 397h1v1h-1zM1164 397h1v1h-1zM1169 397h1v1h-1zM1174 397h1v1h-1zM1179 397h1v1h-1zM1184 397h1v1h-1zM1189 397h1v1h-1zM1194 397h1v1h-1zM1199 397h1v1h-1zM1204 397h1v1h-1zM1209 397h1v1h-1zM1214 397h1v1h-1zM1219 397h1v1h-1zM1224 397h1v1h-1zM1229 397h1v1h-1zM1234 397h1v1h-1zM1239 397h1v1h-1zM1244 397h1v1h-1zM1249 397h1v1h-1zM1254 397h1v1h-1zM1259 397h1v1h-1zM1264 397h1v1h-1zM1269 397h1v1h-1zM1274 397h1v1h-1zM1279 397h1v1h-1zM1284 397h1v1h-1zM1289 397h1v1h-1zM1294 397h1v1h-1zM1299 397h1v1h-1zM1304 397h1v1h-1zM1309 397h1v1h-1zM1314 397h1v1h-1zM1319 397h1v1h-1zM44 473h1v1h-1zM49 473h1v1h-1zM54 473h1v1h-1zM59 473h1v1h-1zM64 473h1v1h-1zM69 473h1v1h-1zM74 473h1v1h-1zM79 473h1v1h-1zM84 473h1v1h-1zM89 473h1v1h-1zM94 473h1v1h-1zM99 473h1v1h-1zM104 473h1v1h-1zM109 473h1v1h-1zM114 473h1v1h-1zM119 473h1v1h-1zM124 473h1v1h-1zM129 473h1v1h-1zM134 473h1v1h-1zM139 473h1v1h-1zM144 473h1v1h-1zM149 473h1v1h-1zM154 473h1v1h-1zM159 473h1v1h-1zM164 473h1v1h-1zM169 473h1v1h-1zM174 473h1v1h-1zM179 473h1v1h-1zM184 473h1v1h-1zM189 473h1v1h-1zM194 473h1v1h-1zM199 473h1v1h-1zM204 473h1v1h-1zM209 473h1v1h-1zM214 473h1v1h-1zM219 473h1v1h-1zM224 473h1v1h-1zM229 473h1v1h-1zM234 473h1v1h-1zM239 473h1v1h-1zM244 473h1v1h-1zM249 473h1v1h-1zM254 473h1v1h-1zM259 473h1v1h-1zM264 473h1v1h-1zM269 473h1v1h-1zM274 473h1v1h-1zM279 473h1v1h-1zM284 473h1v1h-1zM289 473h1v1h-1zM294 473h1v1h-1zM299 473h1v1h-1zM304 473h1v1h-1zM309 473h1v1h-1zM314 473h1v1h-1zM319 473h1v1h-1zM324 473h1v1h-1zM329 473h1v1h-1zM334 473h1v1h-1zM339 473h1v1h-1zM344 473h1v1h-1zM349 473h1v1h-1zM354 473h1v1h-1zM359 473h1v1h-1zM364 473h1v1h-1zM369 473h1v1h-1zM374 473h1v1h-1zM379 473h1v1h-1zM384 473h1v1h-1zM389 473h1v1h-1zM394 473h1v1h-1zM399 473h1v1h-1zM404 473h1v1h-1zM409 473h1v1h-1zM414 473h1v1h-1zM419 473h1v1h-1zM424 473h1v1h-1zM429 473h1v1h-1zM434 473h1v1h-1zM439 473h1v1h-1zM444 473h1v1h-1zM449 473h1v1h-1zM454 473h1v1h-1zM459 473h1v1h-1zM464 473h1v1h-1zM469 473h1v1h-1zM474 473h1v1h-1zM479 473h1v1h-1zM484 473h1v1h-1zM489 473h1v1h-1zM494 473h1v1h-1zM499 473h1v1h-1zM504 473h1v1h-1zM509 473h1v1h-1zM514 473h1v1h-1zM519 473h1v1h-1zM524 473h1v1h-1zM529 473h1v1h-1zM534 473h1v1h-1zM539 473h1v1h-1zM544 473h1v1h-1zM549 473h1v1h-1zM554 473h1v1h-1zM559 473h1v1h-1zM564 473h1v1h-1zM569 473h1v1h-1zM574 473h1v1h-1zM579 473h1v1h-1zM584 473h1v1h-1zM589 473h1v1h-1zM594 473h1v1h-1zM599 473h1v1h-1zM604 473h1v1h-1zM609 473h1v1h-1zM614 473h1v1h-1zM619 473h1v1h-1zM624 473h1v1h-1zM629 473h1v1h-1zM634 473h1v1h-1zM639 473h1v1h-1zM644 473h1v1h-1zM649 473h1v1h-1zM654 473h1v1h-1zM659 473h1v1h-1zM664 473h1v1h-1zM669 473h1v1h-1zM674 473h1v1h-1zM679 473h1v1h-1zM684 473h1v1h-1zM689 473h1v1h-1zM694 473h1v1h-1zM699 473h1v1h-1zM704 473h1v1h-1zM709 473h1v1h-1zM714 473h1v1h-1zM719 473h1v1h-1zM724 473h1v1h-1zM729 473h1v1h-1zM734 473h1v1h-1zM739 473h1v1h-1zM744 473h1v1h-1zM749 473h1v1h-1zM754 473h1v1h-1zM759 473h1v1h-1zM764 473h1v1h-1zM769 473h1v1h-1zM774 473h1v1h-1zM779 473h1v1h-1zM784 473h1v1h-1zM789 473h1v1h-1zM794 473h1v1h-1zM799 473h1v1h-1zM804 473h1v1h-1zM809 473h1v1h-1zM814 473h1v1h-1zM819 473h1v1h-1zM824 473h1v1h-1zM829 473h1v1h-1zM834 473h1v1h-1zM839 473h1v1h-1zM844 473h1v1h-1zM849 473h1v1h-1zM854 473h1v1h-1zM859 473h1v1h-1zM864 473h1v1h-1zM869 473h1v1h-1zM874 473h1v1h-1zM879 473h1v1h-1zM884 473h1v1h-1zM889 473h1v1h-1zM894 473h1v1h-1zM899 473h1v1h-1zM904 473h1v1h-1zM909 473h1v1h-1zM914 473h1v1h-1zM919 473h1v1h-1zM924 473h1v1h-1zM929 473h1v1h-1zM934 473h1v1h-1zM939 473h1v1h-1zM944 473h1v1h-1zM949 473h1v1h-1zM954 473h1v1h-1zM959 473h1v1h-1zM964 473h1v1h-1zM969 473h1v1h-1zM974 473h1v1h-1zM979 473h1v1h-1zM984 473h1v1h-1zM989 473h1v1h-1zM994 473h1v1h-1zM999 473h1v1h-1zM1004 473h1v1h-1zM1009 473h1v1h-1zM1014 473h1v1h-1zM1019 473h1v1h-1zM1024 473h1v1h-1zM1029 473h1v1h-1zM1034 473h1v1h-1zM1039 473h1v1h-1zM1044 473h1v1h-1zM1049 473h1v1h-1zM1054 473h1v1h-1zM1059 473h1v1h-1zM1064 473h1v1h-1zM1069 473h1v1h-1zM1074 473h1v1h-1zM1079 473h1v1h-1zM1084 473h1v1h-1zM1089 473h1v1h-1zM1094 473h1v1h-1zM1099 473h1v1h-1zM1104 473h1v1h-1zM1109 473h1v1h-1zM1114 473h1v1h-1zM1119 473h1v1h-1zM1124 473h1v1h-1zM1129 473h1v1h-1zM1134 473h1v1h-1zM1139 473h1v1h-1zM1144 473h1v1h-1zM1149 473h1v1h-1zM1154 473h1v1h-1zM1159 473h1v1h-1zM1164 473h1v1h-1zM1169 473h1v1h-1zM1174 473h1v1h-1zM1179 473h1v1h-1zM1184 473h1v1h-1zM1189 473h1v1h-1zM1194 473h1v1h-1zM1199 473h1v1h-1zM1204 473h1v1h-1zM1209 473h1v1h-1zM1214 473h1v1h-1zM1219 473h1v1h-1zM1224 473h1v1h-1zM1229 473h1v1h-1zM1234 473h1v1h-1zM1239 473h1v1h-1zM1244 473h1v1h-1zM1249 473h1v1h-1zM1254 473h1v1h-1zM1259 473h1v1h-1zM1264 473h1v1h-1zM1269 473h1v1h-1zM1274 473h1v1h-1zM1279 473h1v1h-1zM1284 473h1v1h-1zM1289 473h1v1h-1zM1294 473h1v1h-1zM1299 473h1v1h-1zM1304 473h1v1h-1zM1309 473h1v1h-1zM1314 473h1v1h-1zM1319 473h1v1h-1zM44 549h1v1h-1zM49 549h1v1h-1zM54 549h1v1h-1zM59 549h1v1h-1zM64 549h1v1h-1zM69 549h1v1h-1zM74 549h1v1h-1zM79 549h1v1h-1zM84 549h1v1h-1zM89 549h1v1h-1zM94 549h1v1h-1zM99 549h1v1h-1zM104 549h1v1h-1zM109 549h1v1h-1zM114 549h1v1h-1zM119 549h1v1h-1zM124 549h1v1h-1zM129 549h1v1h-1zM134 549h1v1h-1zM139 549h1v1h-1zM144 549h1v1h-1zM149 549h1v1h-1zM154 549h1v1h-1zM159 549h1v1h-1zM164 549h1v1h-1zM169 549h1v1h-1zM174 549h1v1h-1zM179 549h1v1h-1zM184 549h1v1h-1zM189 549h1v1h-1zM194 549h1v1h-1zM199 549h1v1h-1zM204 549h1v1h-1zM209 549h1v1h-1zM214 549h1v1h-1zM219 549h1v1h-1zM224 549h1v1h-1zM229 549h1v1h-1zM234 549h1v1h-1zM239 549h1v1h-1zM244 549h1v1h-1zM249 549h1v1h-1zM254 549h1v1h-1zM259 549h1v1h-1zM264 549h1v1h-1zM269 549h1v1h-1zM274 549h1v1h-1zM279 549h1v1h-1zM284 549h1v1h-1zM289 549h1v1h-1zM294 549h1v1h-1zM299 549h1v1h-1zM304 549h1v1h-1zM309 549h1v1h-1zM314 549h1v1h-1zM319 549h1v1h-1zM324 549h1v1h-1zM329 549h1v1h-1zM334 549h1v1h-1zM339 549h1v1h-1zM344 549h1v1h-1zM349 549h1v1h-1zM354 549h1v1h-1zM359 549h1v1h-1zM364 549h1v1h-1zM369 549h1v1h-1zM374 549h1v1h-1zM379 549h1v1h-1zM384 549h1v1h-1zM389 549h1v1h-1zM394 549h1v1h-1zM399 549h1v1h-1zM404 549h1v1h-1zM409 549h1v1h-1zM414 549h1v1h-1zM419 549h1v1h-1zM424 549h1v1h-1zM429 549h1v1h-1zM434 549h1v1h-1zM439 549h1v1h-1zM444 549h1v1h-1zM449 549h1v1h-1zM454 549h1v1h-1zM459 549h1v1h-1zM464 549h1v1h-1zM469 549h1v1h-1zM474 549h1v1h-1zM479 549h1v1h-1zM484 549h1v1h-1zM489 549h1v1h-1zM494 549h1v1h-1zM499 549h1v1h-1zM504 549h1v1h-1zM509 549h1v1h-1zM514 549h1v1h-1zM519 549h1v1h-1zM524 549h1v1h-1zM529 549h1v1h-1zM534 549h1v1h-1zM539 549h1v1h-1zM544 549h1v1h-1zM549 549h1v1h-1zM554 549h1v1h-1zM559 549h1v1h-1zM564 549h1v1h-1zM569 549h1v1h-1zM574 549h1v1h-1zM579 549h1v1h-1zM584 549h1v1h-1zM589 549h1v1h-1zM594 549h1v1h-1zM599 549h1v1h-1zM604 549h1v1h-1zM609 549h1v1h-1zM614 549h1v1h-1zM619 549h1v1h-1zM624 549h1v1h-1zM629 549h1v1h-1zM634 549h1v1h-1zM639 549h1v1h-1zM644 549h1v1h-1zM649 549h1v1h-1zM654 549h1v1h-1zM659 549h1v1h-1zM664 549h1v1h-1zM669 549h1v1h-1zM674 549h1v1h-1zM679 549h1v1h-1zM684 549h1v1h-1zM689 549h1v1h-1zM694 549h1v1h-1zM699 549h1v1h-1zM704 549h1v1h-1zM709 549h1v1h-1zM714 549h1v1h-1zM719 549h1v1h-1zM724 549h1v1h-1zM729 549h1v1h-1zM734 549h1v1h-1zM739 549h1v1h-1zM744 549h1v1h-1zM749 549h1v1h-1zM754 549h1v1h-1zM759 549h1v1h-1zM764 549h1v1h-1zM769 549h1v1h-1zM774 549h1v1h-1zM779 549h1v1h-1zM784 549h1v1h-1zM789 549h1v1h-1zM794 549h1v1h-1zM799 549h1v1h-1zM804 549h1v1h-1zM809 549h1v1h-1zM814 549h1v1h-1zM819 549h1v1h-1zM824 549h1v1h-1zM829 549h1v1h-1zM834 549h1v1h-1zM839 549h1v1h-1zM844 549h1v1h-1zM849 549h1v1h-1zM854 549h1v1h-1zM859 549h1v1h-1zM864 549h1v1h-1zM869 549h1v1h-1zM874 549h1v1h-1zM879 549h1v1h-1zM884 549h1v1h-1zM889 549h1v1h-1zM894 549h1v1h-1zM899 549h1v1h-1zM904 549h1v1h-1zM909 549h1v1h-1zM914 549h1v1h-1zM919 549h1v1h-1zM924 549h1v1h-1zM929 549h1v1h-1zM934 549h1v1h-1zM939 549h1v1h-1zM944 549h1v1h-1zM949 549h1v1h-1zM954 549h1v1h-1zM959 549h1v1h-1zM964 549h1v1h-1zM969 549h1v1h-1zM974 549h1v1h-1zM979 549h1v1h-1zM984 549h1v1h-1zM989 549h1v1h-1zM994 549h1v1h-1zM999 549h1v1h-1zM1004 549h1v1h-1zM1009 549h1v1h-1zM1014 549h1v1h-1zM1019 549h1v1h-1zM1024 549h1v1h-1zM1029 549h1v1h-1zM1034 549h1v1h-1zM1039 549h1v1h-1zM1044 549h1v1h-1zM1049 549h1v1h-1zM1054 549h1v1h-1zM1059 549h1v1h-1zM1064 549h1v1h-1zM1069 549h1v1h-1zM1074 549h1v1h-1zM1079 549h1v1h-1zM1084 549h1v1h-1zM1089 549h1v1h-1zM1094 549h1v1h-1zM1099 549h1v1h-1zM1104 549h1v1h-1zM1109 549h1v1h-1zM1114 549h1v1h-1zM1119 549h1v1h-1zM1124 549h1v1h-1zM1129 549h1v1h-1zM1134 549h1v1h-1zM1139 549h1v1h-1zM1144 549h1v1h-1zM1149 549h1v1h-1zM1154 549h1v1h-1zM1159 549h1v1h-1zM1164 549h1v1h-1zM1169 549h1v1h-1zM1174 549h1v1h-1zM1179 549h1v1h-1zM1184 549h1v1h-1zM1189 549h1v1h-1zM1194 549h1v1h-1zM1199 549h1v1h-1zM1204 549h1v1h-1zM1209 549h1v1h-1zM1214 549h1v1h-1zM1219 549h1v1h-1zM1224 549h1v1h-1zM1229 549h1v1h-1zM1234 549h1v1h-1zM1239 549h1v1h-1zM1244 549h1v1h-1zM1249 549h1v1h-1zM1254 549h1v1h-1zM1259 549h1v1h-1zM1264 549h1v1h-1zM1269 549h1v1h-1zM1274 549h1v1h-1zM1279 549h1v1h-1zM1284 549h1v1h-1zM1289 549h1v1h-1zM1294 549h1v1h-1zM1299 549h1v1h-1zM1304 549h1v1h-1zM1309 549h1v1h-1zM1314 549h1v1h-1zM1319 549h1v1h-1z"/>
<rect x="29.5" y="16.5" width="1305" height="610" fill="none" stroke="#fff" stroke-width="1"/></g>
<defs><clipPath id="c"><rect x="29" y="16" width="1306" height="611"/></clipPath></defs>
<g clip-path="url(#c)" shape-rendering="crispEdges"><path fill="#ffff00" d="M29 270h1v53h-1zM30 231h1v42h-1zM31 196h1v38h-1zM32 165h1v34h-1zM33 150h1v18h-1zM34 131h1v22h-1zM35 109h1v24h-1zM36 95h1v16h-1zM37 84h1v13h-1zM38 76h1v11h-1zM39 67h1v11h-1zM40 57h1v12h-1zM41 50h1v10h-1zM42 44h1v8h-1zM43 40h1v7h-1zM44 37h1v6h-1zM45 34h1v8h-1zM46 32h1v8h-1zM47 31h1v8h-1zM48 31h1v7h-1zM49 31h1v6h-1zM50 31h1v7h-1zM51 31h1v8h-1zM52 32h1v8h-1zM53 33h1v8h-1zM54 35h1v7h-1zM55 36h1v8h-1zM56 38h1v7h-1zM57 40h1v8h-1zM58 43h1v7h-1zM59 46h1v7h-1zM60 50h1v7h-1zM61 54h1v8h-1zM62 59h1v8h-1zM63 65h1v8h-1zM64 71h1v8h-1zM65 76h1v9h-1zM66 82h1v9h-1zM67 89h1v9h-1zM68 95h1v10h-1zM69 103h1v11h-1zM70 111h1v12h-1zM71 121h1v12h-1zM72 131h1v13h-1zM73 142h1v14h-1zM74 154h1v15h-1zM75 167h1v16h-1zM76 180h1v17h-1zM77 194h1v18h-1zM78 209h1v19h-1zM79 225h1v18h-1zM80 241h1v16h-1zM81 254h1v15h-1zM82 267h1v24h-1zM83 288h1v24h-1zM84 310h1v20h-1zM85 328h1v25h-1zM86 351h1v20h-1zM87 368h1v16h-1zM88 382h1v16h-1zM89 395h1v17h-1zM90 410h1v18h-1zM91 425h1v20h-1zM92 443h1v16h-1zM93 456h1v14h-1zM94 468h1v12h-1zM95 477h1v10h-1zM96 485h1v9h-1zM97 492h1v8h-1zM98 497h1v8h-1zM99 502h1v8h-1zM100 504h1v7h-1zM101 502h1v7h-1zM102 498h1v7h-1zM103 494h1v6h-1zM104 490h1v6h-1zM105 486h1v7h-1zM106 479h1v9h-1zM107 468h1v13h-1zM108 454h1v16h-1zM109 440h1v16h-1zM110 428h1v14h-1zM111 416h1v14h-1zM112 401h1v17h-1zM113 382h1v21h-1zM114 361h1v23h-1zM115 339h1v24h-1zM116 320h1v21h-1zM117 304h1v19h-1zM118 287h1v20h-1zM119 270h1v19h-1zM120 259h1v14h-1zM121 249h1v12h-1zM122 241h1v11h-1zM123 233h1v10h-1zM124 228h1v8h-1zM125 228h1v8h-1zM126 233h1v10h-1zM127 241h1v10h-1zM128 248h1v11h-1zM129 257h1v10h-1zM130 264h1v7h-1zM131 268h1v7h-1zM132 271h1v7h-1zM133 275h1v5h-1zM134 278h1v9h-1zM135 285h1v13h-1zM136 295h1v12h-1zM137 304h1v10h-1zM138 312h1v9h-1zM139 318h1v9h-1zM140 324h1v7h-1zM141 328h1v7h-1zM142 330h1v8h-1zM143 332h1v8h-1zM144 333h1v8h-1zM145 335h1v8h-1zM146 336h1v8h-1zM147 338h1v8h-1zM148 340h1v7h-1zM149 342h1v8h-1zM150 345h1v7h-1zM151 348h1v6h-1zM152 351h1v6h-1zM153 355h1v8h-1zM154 361h1v9h-1zM155 368h1v9h-1zM156 375h1v8h-1zM157 380h1v8h-1zM158 386h1v8h-1zM159 392h1v9h-1zM160 399h1v10h-1zM161 406h1v10h-1zM162 413h1v9h-1zM163 420h1v9h-1zM164 426h1v8h-1zM165 432h1v7h-1zM166 437h1v8h-1zM167 441h1v8h-1zM168 444h1v6h-1zM169 442h1v8h-1zM170 441h1v7h-1zM171 438h1v7h-1zM172 435h1v7h-1zM173 431h1v7h-1zM174 424h1v10h-1zM175 416h1v11h-1zM176 407h1v11h-1zM177 397h1v12h-1zM178 386h1v13h-1zM179 373h1v15h-1zM180 360h1v16h-1zM181 347h1v16h-1zM182 334h1v16h-1zM183 321h1v15h-1zM184 310h1v13h-1zM185 300h1v12h-1zM186 286h1v17h-1zM187 270h1v18h-1zM188 263h1v10h-1zM189 257h1v8h-1zM190 253h1v7h-1zM191 252h1v7h-1zM192 254h1v7h-1zM193 258h1v7h-1zM194 263h1v7h-1zM195 268h1v6h-1zM196 270h1v8h-1zM197 271h1v7h-1zM198 269h1v8h-1zM199 266h1v9h-1zM200 266h1v7h-1zM201 267h1v8h-1zM202 270h1v7h-1zM203 274h1v7h-1zM204 278h1v7h-1zM205 282h1v7h-1zM206 287h1v6h-1zM207 290h1v7h-1zM208 293h1v7h-1zM209 296h1v7h-1zM210 299h1v7h-1zM211 301h1v7h-1zM212 304h1v7h-1zM213 308h1v8h-1zM214 313h1v9h-1zM215 319h1v9h-1zM216 326h1v9h-1zM217 332h1v9h-1zM218 339h1v10h-1zM219 346h1v11h-1zM220 354h1v11h-1zM221 362h1v12h-1zM222 371h1v13h-1zM223 381h1v10h-1zM224 388h1v9h-1zM225 394h1v7h-1zM226 399h1v7h-1zM227 403h1v8h-1zM228 408h1v9h-1zM229 414h1v10h-1zM230 421h1v8h-1zM231 426h1v6h-1zM232 429h1v7h-1zM233 431h1v7h-1zM234 431h1v7h-1zM235 430h1v8h-1zM236 428h1v7h-1zM237 425h1v7h-1zM238 422h1v7h-1zM239 416h1v9h-1zM240 410h1v10h-1zM241 401h1v12h-1zM242 386h1v18h-1zM243 366h1v23h-1zM244 353h1v16h-1zM245 343h1v12h-1zM246 334h1v11h-1zM247 325h1v11h-1zM248 315h1v12h-1zM249 306h1v12h-1zM250 297h1v12h-1zM251 288h1v12h-1zM252 277h1v14h-1zM253 267h1v13h-1zM254 261h1v9h-1zM255 258h1v6h-1zM256 255h1v8h-1zM257 255h1v6h-1zM258 255h1v8h-1zM259 258h1v8h-1zM260 261h1v8h-1zM261 263h1v7h-1zM262 261h1v8h-1zM263 259h1v7h-1zM264 255h1v8h-1zM265 252h1v8h-1zM266 252h1v8h-1zM267 254h1v8h-1zM268 258h1v7h-1zM269 262h1v7h-1zM270 265h1v7h-1zM271 268h1v7h-1zM272 271h1v7h-1zM273 275h1v6h-1zM274 278h1v8h-1zM275 283h1v8h-1zM276 289h1v8h-1zM277 295h1v8h-1zM278 300h1v8h-1zM279 305h1v8h-1zM280 310h1v8h-1zM281 316h1v9h-1zM282 322h1v10h-1zM283 329h1v14h-1zM284 340h1v17h-1zM285 354h1v16h-1zM286 367h1v12h-1zM287 375h1v9h-1zM288 380h1v9h-1zM289 385h1v8h-1zM290 389h1v9h-1zM291 394h1v9h-1zM292 399h1v9h-1zM293 404h1v8h-1zM294 408h1v8h-1zM295 412h1v7h-1zM296 414h1v8h-1zM297 416h1v8h-1zM298 418h1v7h-1zM299 417h1v8h-1zM300 416h1v8h-1zM301 414h1v7h-1zM302 411h1v8h-1zM303 406h1v10h-1zM304 397h1v13h-1zM305 387h1v14h-1zM306 378h1v13h-1zM307 369h1v13h-1zM308 360h1v12h-1zM309 352h1v11h-1zM310 343h1v11h-1zM311 334h1v11h-1zM312 326h1v11h-1zM313 318h1v11h-1zM314 311h1v10h-1zM315 304h1v10h-1zM316 296h1v10h-1zM317 288h1v11h-1zM318 279h1v11h-1zM319 270h1v12h-1zM320 264h1v10h-1zM321 259h1v9h-1zM322 256h1v8h-1zM323 253h1v8h-1zM324 253h1v8h-1zM325 254h1v8h-1zM326 255h1v7h-1zM327 254h1v7h-1zM328 250h1v9h-1zM329 246h1v9h-1zM330 243h1v8h-1zM331 241h1v7h-1zM332 241h1v8h-1zM333 244h1v7h-1zM334 246h1v9h-1zM335 250h1v8h-1zM336 253h1v8h-1zM337 257h1v8h-1zM338 261h1v8h-1zM339 265h1v8h-1zM340 270h1v9h-1zM341 276h1v10h-1zM342 283h1v10h-1zM343 290h1v10h-1zM344 297h1v10h-1zM345 305h1v10h-1zM346 312h1v10h-1zM347 319h1v11h-1zM348 327h1v13h-1zM349 337h1v14h-1zM350 348h1v14h-1zM351 359h1v13h-1zM352 369h1v10h-1zM353 375h1v9h-1zM354 379h1v9h-1zM355 383h1v9h-1zM356 386h1v9h-1zM357 390h1v8h-1zM358 393h1v9h-1zM359 396h1v9h-1zM360 399h1v9h-1zM361 402h1v11h-1zM362 407h1v10h-1zM363 411h1v8h-1zM364 410h1v9h-1zM365 407h1v9h-1zM366 403h1v10h-1zM367 399h1v10h-1zM368 392h1v12h-1zM369 383h1v14h-1zM370 375h1v14h-1zM371 368h1v12h-1zM372 361h1v11h-1zM373 354h1v10h-1zM374 347h1v10h-1zM375 341h1v9h-1zM376 334h1v10h-1zM377 328h1v9h-1zM378 322h1v9h-1zM379 317h1v8h-1zM380 312h1v8h-1zM381 306h1v9h-1zM382 300h1v9h-1zM383 292h1v11h-1zM384 281h1v14h-1zM385 269h1v16h-1zM386 260h1v13h-1zM387 255h1v10h-1zM388 252h1v8h-1zM389 250h1v8h-1zM390 248h1v8h-1zM391 246h1v8h-1zM392 243h1v9h-1zM393 239h1v10h-1zM394 236h1v10h-1zM395 233h1v9h-1zM396 233h1v7h-1zM397 234h1v8h-1zM398 236h1v10h-1zM399 240h1v11h-1zM400 244h1v10h-1zM401 248h1v10h-1zM402 252h1v10h-1zM403 256h1v11h-1zM404 261h1v11h-1zM405 268h1v10h-1zM406 275h1v10h-1zM407 282h1v10h-1zM408 289h1v11h-1zM409 297h1v11h-1zM410 305h1v10h-1zM411 312h1v10h-1zM412 319h1v11h-1zM413 327h1v12h-1zM414 336h1v13h-1zM415 346h1v12h-1zM416 354h1v13h-1zM417 363h1v12h-1zM418 371h1v13h-1zM419 378h1v12h-1zM420 384h1v10h-1zM421 388h1v9h-1zM422 390h1v8h-1zM423 392h1v8h-1zM424 394h1v9h-1zM425 396h1v10h-1zM426 399h1v11h-1zM427 403h1v10h-1zM428 407h1v10h-1zM429 407h1v9h-1zM430 404h1v10h-1zM431 399h1v11h-1zM432 395h1v11h-1zM433 392h1v10h-1zM434 388h1v10h-1zM435 384h1v11h-1zM436 378h1v12h-1zM437 373h1v11h-1zM438 366h1v11h-1zM439 359h1v11h-1zM440 352h1v11h-1zM441 344h1v11h-1zM442 337h1v10h-1zM443 330h1v10h-1zM444 322h1v11h-1zM445 314h1v11h-1zM446 305h1v12h-1zM447 295h1v13h-1zM448 287h1v11h-1zM449 278h1v12h-1zM450 269h1v12h-1zM451 261h1v12h-1zM452 255h1v11h-1zM453 251h1v10h-1zM454 249h1v8h-1zM455 247h1v9h-1zM456 245h1v9h-1zM457 243h1v9h-1zM458 239h1v10h-1zM459 235h1v11h-1zM460 232h1v10h-1zM461 229h1v9h-1zM462 230h1v9h-1zM463 233h1v10h-1zM464 237h1v11h-1zM465 241h1v10h-1zM466 245h1v10h-1zM467 249h1v9h-1zM468 252h1v11h-1zM469 258h1v11h-1zM470 264h1v10h-1zM471 270h1v11h-1zM472 277h1v11h-1zM473 285h1v10h-1zM474 292h1v11h-1zM475 300h1v11h-1zM476 308h1v10h-1zM477 315h1v10h-1zM478 322h1v12h-1zM479 331h1v12h-1zM480 340h1v12h-1zM481 349h1v12h-1zM482 358h1v12h-1zM483 366h1v13h-1zM484 374h1v12h-1zM485 381h1v11h-1zM486 385h1v10h-1zM487 388h1v8h-1zM488 390h1v8h-1zM489 392h1v9h-1zM490 394h1v9h-1zM491 397h1v10h-1zM492 400h1v11h-1zM493 404h1v11h-1zM494 408h1v8h-1zM495 405h1v9h-1zM496 400h1v11h-1zM497 396h1v11h-1zM498 392h1v11h-1zM499 389h1v10h-1zM500 385h1v10h-1zM501 380h1v11h-1zM502 375h1v11h-1zM503 369h1v10h-1zM504 362h1v11h-1zM505 355h1v10h-1zM506 347h1v11h-1zM507 339h1v11h-1zM508 332h1v10h-1zM509 325h1v10h-1zM510 317h1v11h-1zM511 308h1v12h-1zM512 299h1v12h-1zM513 290h1v12h-1zM514 281h1v12h-1zM515 272h1v12h-1zM516 264h1v12h-1zM517 257h1v11h-1zM518 252h1v10h-1zM519 249h1v9h-1zM520 248h1v8h-1zM521 246h1v8h-1zM522 243h1v9h-1zM523 240h1v10h-1zM524 236h1v11h-1zM525 233h1v10h-1zM526 229h1v10h-1zM527 229h1v8h-1zM528 231h1v10h-1zM529 234h1v11h-1zM530 239h1v10h-1zM531 243h1v10h-1zM532 246h1v10h-1zM533 250h1v10h-1zM534 254h1v11h-1zM535 260h1v11h-1zM536 267h1v10h-1zM537 273h1v11h-1zM538 281h1v10h-1zM539 288h1v11h-1zM540 296h1v11h-1zM541 304h1v10h-1zM542 311h1v10h-1zM543 318h1v11h-1zM544 326h1v12h-1zM545 335h1v13h-1zM546 345h1v12h-1zM547 353h1v13h-1zM548 362h1v12h-1zM549 370h1v13h-1zM550 377h1v12h-1zM551 383h1v10h-1zM552 387h1v8h-1zM553 389h1v8h-1zM554 390h1v9h-1zM555 393h1v9h-1zM556 395h1v10h-1zM557 398h1v10h-1zM558 402h1v10h-1zM559 406h1v9h-1zM560 406h1v9h-1zM561 402h1v10h-1zM562 398h1v10h-1zM563 394h1v10h-1zM564 390h1v10h-1zM565 387h1v10h-1zM566 382h1v11h-1zM567 377h1v11h-1zM568 371h1v11h-1zM569 365h1v11h-1zM570 358h1v10h-1zM571 350h1v11h-1zM572 343h1v10h-1zM573 335h1v11h-1zM574 328h1v10h-1zM575 321h1v10h-1zM576 312h1v12h-1zM577 303h1v12h-1zM578 294h1v12h-1zM579 285h1v12h-1zM580 276h1v12h-1zM581 267h1v12h-1zM582 259h1v12h-1zM583 253h1v12h-1zM584 250h1v9h-1zM585 248h1v8h-1zM586 246h1v9h-1zM587 244h1v9h-1zM588 241h1v9h-1zM589 238h1v10h-1zM590 234h1v10h-1zM591 230h1v10h-1zM592 228h1v9h-1zM593 229h1v10h-1zM594 232h1v11h-1zM595 236h1v11h-1zM596 241h1v10h-1zM597 244h1v10h-1zM598 248h1v10h-1zM599 252h1v11h-1zM600 257h1v11h-1zM601 263h1v11h-1zM602 270h1v11h-1zM603 277h1v11h-1zM604 285h1v10h-1zM605 292h1v11h-1zM606 300h1v10h-1zM607 307h1v11h-1zM608 315h1v10h-1zM609 322h1v12h-1zM610 331h1v12h-1zM611 340h1v12h-1zM612 349h1v12h-1zM613 358h1v12h-1zM614 366h1v13h-1zM615 374h1v12h-1zM616 380h1v11h-1zM617 385h1v9h-1zM618 388h1v8h-1zM619 389h1v9h-1zM620 391h1v9h-1zM621 394h1v9h-1zM622 397h1v9h-1zM623 400h1v10h-1zM624 404h1v10h-1zM625 407h1v8h-1zM626 404h1v9h-1zM627 399h1v11h-1zM628 395h1v11h-1zM629 392h1v10h-1zM630 388h1v10h-1zM631 384h1v11h-1zM632 379h1v11h-1zM633 374h1v11h-1zM634 368h1v10h-1zM635 361h1v11h-1zM636 354h1v10h-1zM637 346h1v11h-1zM638 338h1v11h-1zM639 331h1v10h-1zM640 324h1v10h-1zM641 316h1v11h-1zM642 307h1v12h-1zM643 298h1v12h-1zM644 289h1v12h-1zM645 280h1v12h-1zM646 271h1v12h-1zM647 262h1v13h-1zM648 256h1v11h-1zM649 251h1v10h-1zM650 249h1v8h-1zM651 247h1v8h-1zM652 245h1v8h-1zM653 242h1v9h-1zM654 239h1v10h-1zM655 236h1v10h-1zM656 232h1v10h-1zM657 228h1v10h-1zM658 228h1v9h-1zM659 231h1v10h-1zM660 234h1v11h-1zM661 239h1v10h-1zM662 243h1v10h-1zM663 246h1v10h-1zM664 250h1v10h-1zM665 254h1v11h-1zM666 260h1v11h-1zM667 267h1v10h-1zM668 274h1v10h-1zM669 281h1v11h-1zM670 289h1v10h-1zM671 296h1v11h-1zM672 304h1v10h-1zM673 311h1v10h-1zM674 318h1v12h-1zM675 327h1v12h-1zM676 336h1v12h-1zM677 345h1v12h-1zM678 354h1v12h-1zM679 362h1v13h-1zM680 370h1v13h-1zM681 378h1v11h-1zM682 383h1v10h-1zM683 387h1v8h-1zM684 389h1v8h-1zM685 390h1v9h-1zM686 392h1v9h-1zM687 395h1v10h-1zM688 398h1v11h-1zM689 402h1v10h-1zM690 406h1v9h-1zM691 405h1v9h-1zM692 401h1v11h-1zM693 397h1v11h-1zM694 393h1v10h-1zM695 390h1v10h-1zM696 386h1v10h-1zM697 382h1v10h-1zM698 376h1v11h-1zM699 370h1v11h-1zM700 364h1v11h-1zM701 357h1v11h-1zM702 350h1v10h-1zM703 342h1v11h-1zM704 334h1v11h-1zM705 327h1v10h-1zM706 320h1v10h-1zM707 311h1v12h-1zM708 302h1v12h-1zM709 293h1v12h-1zM710 284h1v12h-1zM711 275h1v12h-1zM712 266h1v13h-1zM713 258h1v13h-1zM714 253h1v11h-1zM715 249h1v10h-1zM716 248h1v8h-1zM717 246h1v8h-1zM718 244h1v8h-1zM719 241h1v9h-1zM720 237h1v10h-1zM721 234h1v10h-1zM722 230h1v10h-1zM723 228h1v8h-1zM724 229h1v10h-1zM725 232h1v11h-1zM726 237h1v10h-1zM727 241h1v10h-1zM728 245h1v9h-1zM729 248h1v10h-1zM730 252h1v11h-1zM731 257h1v12h-1zM732 264h1v10h-1zM733 270h1v11h-1zM734 278h1v10h-1zM735 285h1v11h-1zM736 293h1v10h-1zM737 300h1v11h-1zM738 308h1v10h-1zM739 315h1v11h-1zM740 323h1v11h-1zM741 331h1v13h-1zM742 341h1v12h-1zM743 350h1v12h-1zM744 358h1v13h-1zM745 367h1v12h-1zM746 374h1v12h-1zM747 381h1v10h-1zM748 385h1v9h-1zM749 388h1v8h-1zM750 389h1v9h-1zM751 391h1v9h-1zM752 394h1v9h-1zM753 397h1v10h-1zM754 400h1v10h-1zM755 404h1v11h-1zM756 407h1v8h-1zM757 403h1v10h-1zM758 399h1v11h-1zM759 395h1v10h-1zM760 391h1v10h-1zM761 388h1v10h-1zM762 384h1v10h-1zM763 379h1v11h-1zM764 373h1v11h-1zM765 367h1v11h-1zM766 360h1v11h-1zM767 353h1v10h-1zM768 345h1v11h-1zM769 338h1v10h-1zM770 330h1v11h-1zM771 323h1v10h-1zM772 315h1v11h-1zM773 306h1v12h-1zM774 297h1v12h-1zM775 288h1v12h-1zM776 279h1v12h-1zM777 270h1v12h-1zM778 262h1v12h-1zM779 255h1v12h-1zM780 251h1v10h-1zM781 248h1v9h-1zM782 247h1v8h-1zM783 245h1v8h-1zM784 242h1v9h-1zM785 239h1v10h-1zM786 235h1v11h-1zM787 232h1v10h-1zM788 228h1v10h-1zM789 228h1v9h-1zM790 231h1v10h-1zM791 235h1v10h-1zM792 239h1v10h-1zM793 243h1v10h-1zM794 246h1v10h-1zM795 250h1v11h-1zM796 255h1v11h-1zM797 261h1v11h-1zM798 267h1v11h-1zM799 274h1v11h-1zM800 282h1v10h-1zM801 289h1v11h-1zM802 297h1v10h-1zM803 304h1v11h-1zM804 312h1v10h-1zM805 319h1v11h-1zM806 327h1v12h-1zM807 336h1v13h-1zM808 346h1v12h-1zM809 354h1v13h-1zM810 363h1v12h-1zM811 371h1v12h-1zM812 378h1v11h-1zM813 383h1v10h-1zM814 387h1v8h-1zM815 389h1v8h-1zM816 390h1v9h-1zM817 393h1v9h-1zM818 395h1v10h-1zM819 398h1v11h-1zM820 402h1v10h-1zM821 406h1v9h-1zM822 405h1v9h-1zM823 401h1v10h-1zM824 397h1v10h-1zM825 393h1v10h-1zM826 389h1v10h-1zM827 386h1v10h-1zM828 381h1v11h-1zM829 376h1v11h-1zM830 370h1v11h-1zM831 363h1v11h-1zM832 356h1v11h-1zM833 349h1v10h-1zM834 341h1v11h-1zM835 334h1v10h-1zM836 326h1v11h-1zM837 319h1v10h-1zM838 310h1v12h-1zM839 301h1v12h-1zM840 292h1v12h-1zM841 283h1v12h-1zM842 274h1v12h-1zM843 265h1v13h-1zM844 258h1v12h-1zM845 252h1v11h-1zM846 249h1v9h-1zM847 248h1v8h-1zM848 246h1v8h-1zM849 243h1v9h-1zM850 241h1v9h-1zM851 237h1v10h-1zM852 233h1v11h-1zM853 229h1v11h-1zM854 228h1v8h-1zM855 230h1v9h-1zM856 233h1v10h-1zM857 237h1v10h-1zM858 241h1v10h-1zM859 245h1v10h-1zM860 248h1v10h-1zM861 252h1v11h-1zM862 258h1v11h-1zM863 264h1v11h-1zM864 271h1v11h-1zM865 278h1v11h-1zM866 286h1v10h-1zM867 293h1v11h-1zM868 301h1v10h-1zM869 308h1v11h-1zM870 316h1v10h-1zM871 323h1v12h-1zM872 332h1v12h-1zM873 341h1v13h-1zM874 350h1v12h-1zM875 359h1v12h-1zM876 367h1v13h-1zM877 375h1v12h-1zM878 381h1v11h-1zM879 386h1v8h-1zM880 388h1v8h-1zM881 389h1v9h-1zM882 391h1v9h-1zM883 394h1v9h-1zM884 397h1v10h-1zM885 401h1v10h-1zM886 404h1v11h-1zM887 406h1v9h-1zM888 403h1v10h-1zM889 399h1v10h-1zM890 395h1v10h-1zM891 391h1v10h-1zM892 388h1v9h-1zM893 383h1v11h-1zM894 378h1v11h-1zM895 372h1v12h-1zM896 366h1v11h-1zM897 360h1v10h-1zM898 352h1v11h-1zM899 345h1v10h-1zM900 337h1v11h-1zM901 330h1v10h-1zM902 323h1v10h-1zM903 314h1v12h-1zM904 305h1v12h-1zM905 296h1v12h-1zM906 287h1v12h-1zM907 278h1v12h-1zM908 269h1v13h-1zM909 261h1v13h-1zM910 255h1v11h-1zM911 250h1v10h-1zM912 248h1v9h-1zM913 247h1v8h-1zM914 245h1v8h-1zM915 242h1v9h-1zM916 239h1v9h-1zM917 235h1v10h-1zM918 231h1v10h-1zM919 228h1v10h-1zM920 228h1v9h-1zM921 231h1v10h-1zM922 235h1v11h-1zM923 239h1v11h-1zM924 243h1v10h-1zM925 247h1v9h-1zM926 250h1v11h-1zM927 255h1v11h-1zM928 261h1v11h-1zM929 268h1v10h-1zM930 275h1v10h-1zM931 282h1v11h-1zM932 290h1v10h-1zM933 297h1v11h-1zM934 305h1v10h-1zM935 312h1v10h-1zM936 319h1v12h-1zM937 328h1v12h-1zM938 337h1v12h-1zM939 346h1v12h-1zM940 355h1v12h-1zM941 364h1v12h-1zM942 372h1v12h-1zM943 379h1v11h-1zM944 384h1v9h-1zM945 387h1v8h-1zM946 389h1v8h-1zM947 391h1v8h-1zM948 393h1v9h-1zM949 395h1v10h-1zM950 399h1v10h-1zM951 403h1v10h-1zM952 406h1v9h-1zM953 405h1v9h-1zM954 401h1v10h-1zM955 396h1v11h-1zM956 393h1v10h-1zM957 389h1v10h-1zM958 386h1v9h-1zM959 381h1v11h-1zM960 375h1v11h-1zM961 369h1v11h-1zM962 363h1v11h-1zM963 356h1v10h-1zM964 348h1v11h-1zM965 340h1v11h-1zM966 333h1v10h-1zM967 326h1v10h-1zM968 318h1v11h-1zM969 310h1v11h-1zM970 300h1v13h-1zM971 291h1v12h-1zM972 282h1v12h-1zM973 273h1v13h-1zM974 265h1v12h-1zM975 257h1v12h-1zM976 252h1v11h-1zM977 249h1v9h-1zM978 247h1v8h-1zM979 246h1v8h-1zM980 243h1v9h-1zM981 240h1v10h-1zM982 237h1v10h-1zM983 233h1v10h-1zM984 229h1v10h-1zM985 228h1v8h-1zM986 230h1v9h-1zM987 233h1v11h-1zM988 237h1v11h-1zM989 241h1v10h-1zM990 245h1v10h-1zM991 249h1v10h-1zM992 253h1v11h-1zM993 258h1v11h-1zM994 265h1v10h-1zM995 271h1v11h-1zM996 279h1v10h-1zM997 286h1v11h-1zM998 294h1v11h-1zM999 302h1v10h-1zM1000 309h1v10h-1zM1001 316h1v11h-1zM1002 324h1v12h-1zM1003 333h1v12h-1zM1004 342h1v12h-1zM1005 351h1v12h-1zM1006 360h1v12h-1zM1007 368h1v12h-1zM1008 375h1v12h-1zM1009 382h1v10h-1zM1010 386h1v8h-1zM1011 388h1v8h-1zM1012 390h1v8h-1zM1013 392h1v9h-1zM1014 394h1v10h-1zM1015 397h1v10h-1zM1016 401h1v10h-1zM1017 405h1v10h-1zM1018 406h1v9h-1zM1019 403h1v10h-1zM1020 398h1v11h-1zM1021 394h1v11h-1zM1022 391h1v10h-1zM1023 387h1v10h-1zM1024 383h1v11h-1zM1025 378h1v11h-1zM1026 372h1v11h-1zM1027 366h1v11h-1zM1028 359h1v11h-1zM1029 352h1v10h-1zM1030 344h1v11h-1zM1031 336h1v11h-1zM1032 329h1v10h-1zM1033 322h1v10h-1zM1034 314h1v11h-1zM1035 305h1v12h-1zM1036 295h1v13h-1zM1037 286h1v12h-1zM1038 277h1v12h-1zM1039 269h1v12h-1zM1040 260h1v13h-1zM1041 254h1v12h-1zM1042 250h1v10h-1zM1043 248h1v8h-1zM1044 246h1v9h-1zM1045 244h1v9h-1zM1046 242h1v9h-1zM1047 239h1v9h-1zM1048 235h1v10h-1zM1049 231h1v10h-1zM1050 228h1v9h-1zM1051 229h1v9h-1zM1052 231h1v11h-1zM1053 235h1v11h-1zM1054 239h1v11h-1zM1055 243h1v10h-1zM1056 247h1v10h-1zM1057 251h1v10h-1zM1058 256h1v11h-1zM1059 262h1v11h-1zM1060 268h1v11h-1zM1061 275h1v11h-1zM1062 283h1v10h-1zM1063 290h1v11h-1zM1064 298h1v11h-1zM1065 306h1v10h-1zM1066 313h1v10h-1zM1067 320h1v12h-1zM1068 329h1v12h-1zM1069 338h1v12h-1zM1070 347h1v12h-1zM1071 356h1v12h-1zM1072 364h1v13h-1zM1073 372h1v12h-1zM1074 379h1v11h-1zM1075 384h1v10h-1zM1076 387h1v8h-1zM1077 389h1v8h-1zM1078 391h1v8h-1zM1079 393h1v9h-1zM1080 396h1v9h-1zM1081 399h1v10h-1zM1082 403h1v10h-1zM1083 407h1v8h-1zM1084 404h1v10h-1zM1085 400h1v11h-1zM1086 396h1v11h-1zM1087 392h1v10h-1zM1088 389h1v10h-1zM1089 385h1v10h-1zM1090 380h1v11h-1zM1091 375h1v11h-1zM1092 369h1v11h-1zM1093 362h1v11h-1zM1094 355h1v11h-1zM1095 348h1v10h-1zM1096 340h1v11h-1zM1097 332h1v11h-1zM1098 325h1v10h-1zM1099 318h1v10h-1zM1100 309h1v12h-1zM1101 300h1v12h-1zM1102 290h1v13h-1zM1103 282h1v11h-1zM1104 273h1v12h-1zM1105 264h1v13h-1zM1106 257h1v12h-1zM1107 252h1v10h-1zM1108 249h1v9h-1zM1109 247h1v8h-1zM1110 245h1v9h-1zM1111 243h1v9h-1zM1112 240h1v9h-1zM1113 236h1v10h-1zM1114 233h1v10h-1zM1115 229h1v10h-1zM1116 228h1v8h-1zM1117 230h1v10h-1zM1118 233h1v11h-1zM1119 238h1v10h-1zM1120 242h1v10h-1zM1121 245h1v10h-1zM1122 249h1v10h-1zM1123 253h1v11h-1zM1124 259h1v11h-1zM1125 265h1v11h-1zM1126 272h1v11h-1zM1127 279h1v11h-1zM1128 287h1v10h-1zM1129 294h1v11h-1zM1130 302h1v11h-1zM1131 310h1v10h-1zM1132 317h1v11h-1zM1133 325h1v12h-1zM1134 334h1v12h-1zM1135 343h1v12h-1zM1136 352h1v12h-1zM1137 360h1v13h-1zM1138 369h1v12h-1zM1139 376h1v12h-1zM1140 382h1v10h-1zM1141 386h1v9h-1zM1142 388h1v8h-1zM1143 390h1v8h-1zM1144 392h1v9h-1zM1145 394h1v10h-1zM1146 397h1v11h-1zM1147 401h1v10h-1zM1148 405h1v10h-1zM1149 406h1v9h-1zM1150 402h1v10h-1zM1151 398h1v11h-1zM1152 394h1v10h-1zM1153 390h1v10h-1zM1154 387h1v10h-1zM1155 383h1v10h-1zM1156 377h1v11h-1zM1157 372h1v11h-1zM1158 365h1v11h-1zM1159 358h1v11h-1zM1160 351h1v11h-1zM1161 343h1v11h-1zM1162 336h1v10h-1zM1163 328h1v11h-1zM1164 321h1v10h-1zM1165 313h1v11h-1zM1166 304h1v12h-1zM1167 295h1v12h-1zM1168 286h1v12h-1zM1169 277h1v12h-1zM1170 268h1v12h-1zM1171 260h1v12h-1zM1172 254h1v11h-1zM1173 250h1v10h-1zM1174 248h1v8h-1zM1175 246h1v8h-1zM1176 244h1v9h-1zM1177 241h1v10h-1zM1178 238h1v10h-1zM1179 234h1v11h-1zM1180 231h1v10h-1zM1181 228h1v9h-1zM1182 229h1v9h-1zM1183 232h1v10h-1zM1184 236h1v10h-1zM1185 240h1v10h-1zM1186 244h1v10h-1zM1187 247h1v10h-1zM1188 251h1v11h-1zM1189 256h1v11h-1zM1190 262h1v11h-1zM1191 269h1v11h-1zM1192 276h1v10h-1zM1193 283h1v11h-1zM1194 291h1v11h-1zM1195 299h1v10h-1zM1196 306h1v10h-1zM1197 313h1v11h-1zM1198 321h1v11h-1zM1199 329h1v13h-1zM1200 339h1v12h-1zM1201 348h1v12h-1zM1202 357h1v12h-1zM1203 365h1v12h-1zM1204 373h1v12h-1zM1205 380h1v11h-1zM1206 384h1v10h-1zM1207 387h1v8h-1zM1208 389h1v8h-1zM1209 391h1v9h-1zM1210 393h1v9h-1zM1211 396h1v10h-1zM1212 399h1v11h-1zM1213 403h1v10h-1zM1214 407h1v8h-1zM1215 404h1v10h-1zM1216 400h1v11h-1zM1217 396h1v10h-1zM1218 392h1v10h-1zM1219 388h1v10h-1zM1220 385h1v10h-1zM1221 380h1v11h-1zM1222 374h1v11h-1zM1223 368h1v11h-1zM1224 362h1v10h-1zM1225 355h1v10h-1zM1226 347h1v11h-1zM1227 339h1v11h-1zM1228 332h1v10h-1zM1229 325h1v10h-1zM1230 317h1v11h-1zM1231 308h1v12h-1zM1232 299h1v12h-1zM1233 290h1v12h-1zM1234 281h1v12h-1zM1235 272h1v12h-1zM1236 263h1v13h-1zM1237 256h1v12h-1zM1238 251h1v11h-1zM1239 249h1v9h-1zM1240 247h1v8h-1zM1241 245h1v9h-1zM1242 243h1v9h-1zM1243 240h1v9h-1zM1244 236h1v10h-1zM1245 232h1v11h-1zM1246 228h1v11h-1zM1247 228h1v9h-1zM1248 230h1v10h-1zM1249 234h1v10h-1zM1250 238h1v10h-1zM1251 242h1v10h-1zM1252 246h1v9h-1zM1253 249h1v10h-1zM1254 253h1v12h-1zM1255 259h1v11h-1zM1256 266h1v10h-1zM1257 272h1v11h-1zM1258 280h1v10h-1zM1259 287h1v11h-1zM1260 295h1v11h-1zM1261 303h1v10h-1zM1262 310h1v10h-1zM1263 317h1v11h-1zM1264 325h1v12h-1zM1265 334h1v13h-1zM1266 344h1v12h-1zM1267 353h1v12h-1zM1268 361h1v13h-1zM1269 369h1v13h-1zM1270 377h1v11h-1zM1271 382h1v11h-1zM1272 386h1v9h-1zM1273 388h1v8h-1zM1274 390h1v8h-1zM1275 392h1v9h-1zM1276 395h1v9h-1zM1277 398h1v10h-1zM1278 401h1v11h-1zM1279 405h1v10h-1zM1280 406h1v9h-1zM1281 402h1v10h-1zM1282 398h1v10h-1zM1283 394h1v10h-1zM1284 390h1v10h-1zM1285 387h1v9h-1zM1286 382h1v11h-1zM1287 377h1v11h-1zM1288 371h1v11h-1zM1289 365h1v11h-1zM1290 358h1v11h-1zM1291 351h1v10h-1zM1292 343h1v11h-1zM1293 335h1v11h-1zM1294 328h1v10h-1zM1295 321h1v10h-1zM1296 312h1v12h-1zM1297 303h1v12h-1zM1298 294h1v12h-1zM1299 285h1v12h-1zM1300 276h1v12h-1zM1301 267h1v13h-1zM1302 259h1v13h-1zM1303 253h1v12h-1zM1304 250h1v9h-1zM1305 248h1v8h-1zM1306 246h1v8h-1zM1307 244h1v9h-1zM1308 241h1v9h-1zM1309 238h1v10h-1zM1310 234h1v10h-1zM1311 230h1v10h-1zM1312 228h1v9h-1zM1313 229h1v9h-1zM1314 232h1v10h-1zM1315 236h1v11h-1zM1316 240h1v10h-1zM1317 244h1v10h-1zM1318 247h1v10h-1zM1319 251h1v11h-1zM1320 257h1v11h-1zM1321 263h1v11h-1zM1322 269h1v11h-1zM1323 276h1v11h-1zM1324 284h1v10h-1zM1325 291h1v11h-1zM1326 299h1v11h-1zM1327 307h1v10h-1zM1328 314h1v10h-1zM1329 321h1v12h-1zM1330 330h1v12h-1zM1331 339h1v13h-1zM1332 349h1v11h-1zM1333 357h1v12h-1z"/><path fill="#ff00ff" d="M29 320h1v3h-1zM30 320h1v37h-1zM31 354h1v33h-1zM32 384h1v15h-1zM33 397h1v13h-1zM34 408h1v10h-1zM35 416h1v8h-1zM36 421h1v10h-1zM37 429h1v9h-1zM38 435h1v8h-1zM39 441h1v6h-1zM40 445h1v6h-1zM41 447h1v8h-1zM42 450h1v7h-1zM43 451h1v8h-1zM44 452h1v7h-1zM45 451h1v7h-1zM46 449h1v8h-1zM47 447h1v8h-1zM48 445h1v7h-1zM49 443h1v6h-1zM50 438h1v7h-1zM51 432h1v8h-1zM52 425h1v9h-1zM53 420h1v8h-1zM54 414h1v8h-1zM55 408h1v8h-1zM56 402h1v8h-1zM57 395h1v9h-1zM58 388h1v10h-1zM59 378h1v12h-1zM60 367h1v13h-1zM61 356h1v13h-1zM62 346h1v13h-1zM63 336h1v13h-1zM64 326h1v13h-1zM65 316h1v12h-1zM66 305h1v13h-1zM67 293h1v14h-1zM68 279h1v16h-1zM69 266h1v16h-1zM70 255h1v14h-1zM71 245h1v13h-1zM72 233h1v14h-1zM73 222h1v14h-1zM74 210h1v15h-1zM75 191h1v21h-1zM76 169h1v24h-1zM77 154h1v17h-1zM78 145h1v11h-1zM79 136h1v11h-1zM80 127h1v12h-1zM81 116h1v13h-1zM82 106h1v13h-1zM83 94h1v14h-1zM84 86h1v11h-1zM85 80h1v9h-1zM86 76h1v7h-1zM87 72h1v8h-1zM88 72h1v7h-1zM89 72h1v8h-1zM90 74h1v8h-1zM91 77h1v7h-1zM92 81h1v7h-1zM93 85h1v10h-1zM94 93h1v12h-1zM95 102h1v13h-1zM96 112h1v14h-1zM97 124h1v15h-1zM98 137h1v14h-1zM99 148h1v15h-1zM100 161h1v15h-1zM101 174h1v16h-1zM102 188h1v19h-1zM103 205h1v20h-1zM104 222h1v20h-1zM105 239h1v17h-1zM106 253h1v15h-1zM107 265h1v17h-1zM108 280h1v20h-1zM109 297h1v23h-1zM110 317h1v22h-1zM111 336h1v20h-1zM112 353h1v18h-1zM113 369h1v15h-1zM114 381h1v15h-1zM115 394h1v20h-1zM116 412h1v14h-1zM117 423h1v10h-1zM118 431h1v6h-1zM119 433h1v7h-1zM120 431h1v8h-1zM121 427h1v8h-1zM122 420h1v9h-1zM123 410h1v13h-1zM124 395h1v17h-1zM125 382h1v15h-1zM126 370h1v14h-1zM127 358h1v14h-1zM128 345h1v15h-1zM129 330h1v17h-1zM130 314h1v18h-1zM131 300h1v16h-1zM132 291h1v12h-1zM133 284h1v9h-1zM134 279h1v7h-1zM135 274h1v7h-1zM136 270h1v7h-1zM137 267h1v8h-1zM138 267h1v7h-1zM139 267h1v7h-1zM140 268h1v7h-1zM141 269h1v7h-1zM142 269h1v6h-1zM143 265h1v8h-1zM144 259h1v9h-1zM145 256h1v6h-1zM146 252h1v8h-1zM147 250h1v8h-1zM148 248h1v8h-1zM149 247h1v8h-1zM150 246h1v8h-1zM151 246h1v6h-1zM152 243h1v6h-1zM153 236h1v9h-1zM154 229h1v9h-1zM155 226h1v6h-1zM156 223h1v7h-1zM157 221h1v8h-1zM158 221h1v7h-1zM159 220h1v7h-1zM160 221h1v6h-1zM161 221h1v8h-1zM162 222h1v8h-1zM163 224h1v8h-1zM164 227h1v6h-1zM165 230h1v7h-1zM166 234h1v9h-1zM167 241h1v10h-1zM168 249h1v12h-1zM169 259h1v13h-1zM170 269h1v12h-1zM171 279h1v12h-1zM172 289h1v15h-1zM173 302h1v16h-1zM174 316h1v15h-1zM175 329h1v15h-1zM176 342h1v14h-1zM177 354h1v14h-1zM178 366h1v15h-1zM179 378h1v14h-1zM180 389h1v12h-1zM181 399h1v10h-1zM182 407h1v6h-1zM183 409h1v7h-1zM184 411h1v8h-1zM185 412h1v7h-1zM186 412h1v7h-1zM187 410h1v8h-1zM188 409h1v5h-1zM189 402h1v9h-1zM190 392h1v13h-1zM191 383h1v12h-1zM192 373h1v12h-1zM193 363h1v13h-1zM194 354h1v12h-1zM195 345h1v11h-1zM196 338h1v10h-1zM197 331h1v9h-1zM198 326h1v8h-1zM199 320h1v8h-1zM200 315h1v8h-1zM201 311h1v7h-1zM202 307h1v6h-1zM203 303h1v7h-1zM204 300h1v7h-1zM205 297h1v7h-1zM206 295h1v6h-1zM207 292h1v7h-1zM208 287h1v8h-1zM209 281h1v9h-1zM210 274h1v9h-1zM211 267h1v9h-1zM212 261h1v9h-1zM213 255h1v9h-1zM214 250h1v8h-1zM215 244h1v8h-1zM216 240h1v7h-1zM217 235h1v8h-1zM218 231h1v7h-1zM219 227h1v7h-1zM220 223h1v7h-1zM221 220h1v7h-1zM222 218h1v8h-1zM223 218h1v7h-1zM224 219h1v7h-1zM225 220h1v8h-1zM226 222h1v8h-1zM227 225h1v7h-1zM228 228h1v6h-1zM229 231h1v7h-1zM230 235h1v9h-1zM231 241h1v8h-1zM232 246h1v9h-1zM233 252h1v11h-1zM234 260h1v13h-1zM235 270h1v16h-1zM236 283h1v14h-1zM237 295h1v13h-1zM238 306h1v13h-1zM239 317h1v14h-1zM240 328h1v15h-1zM241 340h1v16h-1zM242 353h1v15h-1zM243 365h1v13h-1zM244 375h1v14h-1zM245 385h1v12h-1zM246 394h1v6h-1zM247 396h1v6h-1zM248 396h1v7h-1zM249 396h1v7h-1zM250 397h1v7h-1zM251 398h1v9h-1zM252 401h1v8h-1zM253 400h1v8h-1zM254 396h1v9h-1zM255 390h1v10h-1zM256 384h1v10h-1zM257 378h1v10h-1zM258 371h1v10h-1zM259 364h1v10h-1zM260 358h1v9h-1zM261 352h1v8h-1zM262 346h1v8h-1zM263 341h1v8h-1zM264 335h1v9h-1zM265 329h1v9h-1zM266 322h1v10h-1zM267 314h1v11h-1zM268 306h1v11h-1zM269 299h1v10h-1zM270 292h1v9h-1zM271 286h1v9h-1zM272 280h1v9h-1zM273 274h1v9h-1zM274 269h1v8h-1zM275 264h1v8h-1zM276 258h1v9h-1zM277 253h1v9h-1zM278 248h1v9h-1zM279 244h1v8h-1zM280 239h1v9h-1zM281 235h1v8h-1zM282 231h1v8h-1zM283 228h1v7h-1zM284 225h1v7h-1zM285 222h1v7h-1zM286 219h1v8h-1zM287 218h1v7h-1zM288 218h1v8h-1zM289 220h1v7h-1zM290 222h1v8h-1zM291 225h1v8h-1zM292 228h1v8h-1zM293 232h1v9h-1zM294 237h1v10h-1zM295 242h1v10h-1zM296 248h1v10h-1zM297 254h1v11h-1zM298 261h1v11h-1zM299 269h1v13h-1zM300 279h1v14h-1zM301 290h1v13h-1zM302 300h1v12h-1zM303 309h1v11h-1zM304 318h1v12h-1zM305 327h1v14h-1zM306 339h1v16h-1zM307 352h1v16h-1zM308 365h1v12h-1zM309 374h1v9h-1zM310 379h1v9h-1zM311 384h1v8h-1zM312 387h1v7h-1zM313 389h1v7h-1zM314 390h1v7h-1zM315 391h1v7h-1zM316 392h1v8h-1zM317 395h1v7h-1zM318 397h1v8h-1zM319 399h1v8h-1zM320 399h1v8h-1zM321 397h1v8h-1zM322 393h1v9h-1zM323 389h1v9h-1zM324 385h1v9h-1zM325 379h1v11h-1zM326 372h1v11h-1zM327 365h1v11h-1zM328 358h1v10h-1zM329 351h1v10h-1zM330 344h1v10h-1zM331 338h1v9h-1zM332 331h1v10h-1zM333 326h1v8h-1zM334 320h1v9h-1zM335 316h1v7h-1zM336 311h1v7h-1zM337 306h1v8h-1zM338 301h1v8h-1zM339 296h1v8h-1zM340 290h1v9h-1zM341 282h1v10h-1zM342 273h1v12h-1zM343 263h1v13h-1zM344 254h1v13h-1zM345 246h1v13h-1zM346 241h1v11h-1zM347 236h1v10h-1zM348 231h1v10h-1zM349 227h1v10h-1zM350 224h1v9h-1zM351 222h1v7h-1zM352 221h1v7h-1zM353 221h1v7h-1zM354 222h1v9h-1zM355 225h1v10h-1zM356 230h1v10h-1zM357 234h1v11h-1zM358 240h1v10h-1zM359 245h1v11h-1zM360 251h1v12h-1zM361 258h1v12h-1zM362 265h1v12h-1zM363 273h1v11h-1zM364 280h1v11h-1zM365 288h1v11h-1zM366 296h1v10h-1zM367 303h1v10h-1zM368 310h1v10h-1zM369 317h1v11h-1zM370 325h1v14h-1zM371 336h1v16h-1zM372 349h1v17h-1zM373 362h1v14h-1zM374 372h1v10h-1zM375 377h1v9h-1zM376 381h1v9h-1zM377 384h1v9h-1zM378 387h1v9h-1zM379 390h1v8h-1zM380 392h1v8h-1zM381 394h1v9h-1zM382 396h1v9h-1zM383 399h1v10h-1zM384 402h1v9h-1zM385 404h1v7h-1zM386 401h1v9h-1zM387 398h1v10h-1zM388 394h1v10h-1zM389 389h1v11h-1zM390 384h1v11h-1zM391 378h1v12h-1zM392 372h1v11h-1zM393 366h1v10h-1zM394 360h1v9h-1zM395 354h1v9h-1zM396 347h1v10h-1zM397 341h1v9h-1zM398 333h1v11h-1zM399 326h1v10h-1zM400 319h1v10h-1zM401 312h1v10h-1zM402 303h1v12h-1zM403 293h1v13h-1zM404 284h1v12h-1zM405 275h1v12h-1zM406 266h1v13h-1zM407 257h1v13h-1zM408 250h1v13h-1zM409 246h1v11h-1zM410 244h1v8h-1zM411 242h1v8h-1zM412 240h1v9h-1zM413 238h1v9h-1zM414 235h1v9h-1zM415 231h1v10h-1zM416 227h1v11h-1zM417 224h1v10h-1zM418 224h1v9h-1zM419 226h1v10h-1zM420 230h1v11h-1zM421 234h1v11h-1zM422 238h1v10h-1zM423 242h1v10h-1zM424 245h1v11h-1zM425 250h1v12h-1zM426 256h1v12h-1zM427 263h1v11h-1zM428 269h1v12h-1zM429 277h1v11h-1zM430 285h1v11h-1zM431 293h1v10h-1zM432 300h1v11h-1zM433 308h1v10h-1zM434 315h1v11h-1zM435 323h1v12h-1zM436 332h1v13h-1zM437 342h1v12h-1zM438 351h1v11h-1zM439 359h1v12h-1zM440 367h1v12h-1zM441 374h1v12h-1zM442 380h1v9h-1zM443 383h1v8h-1zM444 385h1v8h-1zM445 387h1v9h-1zM446 389h1v9h-1zM447 392h1v9h-1zM448 395h1v10h-1zM449 399h1v10h-1zM450 403h1v9h-1zM451 402h1v9h-1zM452 398h1v10h-1zM453 394h1v11h-1zM454 390h1v10h-1zM455 387h1v9h-1zM456 383h1v10h-1zM457 379h1v10h-1zM458 373h1v11h-1zM459 367h1v11h-1zM460 361h1v11h-1zM461 354h1v10h-1zM462 347h1v10h-1zM463 339h1v11h-1zM464 331h1v11h-1zM465 324h1v10h-1zM466 317h1v10h-1zM467 308h1v12h-1zM468 299h1v12h-1zM469 290h1v12h-1zM470 281h1v12h-1zM471 272h1v12h-1zM472 263h1v13h-1zM473 256h1v12h-1zM474 250h1v11h-1zM475 247h1v9h-1zM476 245h1v8h-1zM477 243h1v9h-1zM478 241h1v9h-1zM479 238h1v10h-1zM480 235h1v10h-1zM481 231h1v10h-1zM482 227h1v11h-1zM483 226h1v8h-1zM484 227h1v10h-1zM485 230h1v11h-1zM486 234h1v11h-1zM487 239h1v10h-1zM488 242h1v10h-1zM489 246h1v10h-1zM490 250h1v11h-1zM491 255h1v12h-1zM492 261h1v12h-1zM493 268h1v11h-1zM494 276h1v10h-1zM495 283h1v11h-1zM496 291h1v11h-1zM497 299h1v10h-1zM498 306h1v10h-1zM499 313h1v11h-1zM500 321h1v12h-1zM501 330h1v12h-1zM502 339h1v12h-1zM503 348h1v12h-1zM504 357h1v12h-1zM505 365h1v13h-1zM506 373h1v12h-1zM507 379h1v11h-1zM508 384h1v8h-1zM509 386h1v8h-1zM510 388h1v8h-1zM511 390h1v8h-1zM512 392h1v9h-1zM513 395h1v10h-1zM514 399h1v10h-1zM515 402h1v11h-1zM516 405h1v8h-1zM517 402h1v9h-1zM518 397h1v11h-1zM519 393h1v11h-1zM520 390h1v10h-1zM521 386h1v10h-1zM522 382h1v10h-1zM523 377h1v11h-1zM524 371h1v11h-1zM525 365h1v11h-1zM526 359h1v10h-1zM527 351h1v11h-1zM528 344h1v10h-1zM529 336h1v11h-1zM530 329h1v10h-1zM531 322h1v10h-1zM532 314h1v11h-1zM533 305h1v12h-1zM534 295h1v13h-1zM535 286h1v12h-1zM536 277h1v12h-1zM537 268h1v13h-1zM538 260h1v13h-1zM539 254h1v11h-1zM540 249h1v11h-1zM541 247h1v9h-1zM542 246h1v8h-1zM543 243h1v9h-1zM544 241h1v9h-1zM545 238h1v9h-1zM546 234h1v10h-1zM547 230h1v10h-1zM548 227h1v10h-1zM549 227h1v9h-1zM550 230h1v10h-1zM551 233h1v11h-1zM552 238h1v10h-1zM553 242h1v10h-1zM554 245h1v10h-1zM555 249h1v11h-1zM556 254h1v11h-1zM557 260h1v11h-1zM558 266h1v11h-1zM559 273h1v11h-1zM560 281h1v10h-1zM561 288h1v11h-1zM562 296h1v11h-1zM563 304h1v10h-1zM564 311h1v10h-1zM565 318h1v11h-1zM566 326h1v13h-1zM567 336h1v12h-1zM568 345h1v12h-1zM569 354h1v12h-1zM570 362h1v13h-1zM571 370h1v13h-1zM572 377h1v12h-1zM573 383h1v9h-1zM574 386h1v8h-1zM575 388h1v8h-1zM576 389h1v9h-1zM577 392h1v9h-1zM578 394h1v10h-1zM579 398h1v10h-1zM580 402h1v10h-1zM581 405h1v9h-1zM582 404h1v9h-1zM583 400h1v10h-1zM584 396h1v10h-1zM585 392h1v10h-1zM586 388h1v10h-1zM587 385h1v10h-1zM588 380h1v11h-1zM589 375h1v11h-1zM590 369h1v11h-1zM591 362h1v11h-1zM592 355h1v11h-1zM593 348h1v11h-1zM594 340h1v11h-1zM595 333h1v10h-1zM596 326h1v10h-1zM597 318h1v11h-1zM598 309h1v12h-1zM599 300h1v12h-1zM600 291h1v12h-1zM601 282h1v12h-1zM602 273h1v12h-1zM603 264h1v13h-1zM604 257h1v12h-1zM605 252h1v11h-1zM606 248h1v10h-1zM607 247h1v8h-1zM608 245h1v8h-1zM609 243h1v8h-1zM610 240h1v9h-1zM611 236h1v10h-1zM612 233h1v10h-1zM613 229h1v10h-1zM614 228h1v7h-1zM615 229h1v9h-1zM616 232h1v11h-1zM617 236h1v11h-1zM618 241h1v10h-1zM619 244h1v10h-1zM620 248h1v10h-1zM621 252h1v11h-1zM622 257h1v12h-1zM623 264h1v11h-1zM624 270h1v11h-1zM625 278h1v10h-1zM626 285h1v11h-1zM627 293h1v11h-1zM628 301h1v10h-1zM629 308h1v10h-1zM630 315h1v11h-1zM631 323h1v12h-1zM632 332h1v12h-1zM633 341h1v12h-1zM634 350h1v12h-1zM635 359h1v12h-1zM636 367h1v13h-1zM637 375h1v11h-1zM638 381h1v10h-1zM639 385h1v9h-1zM640 388h1v7h-1zM641 389h1v8h-1zM642 391h1v9h-1zM643 394h1v9h-1zM644 396h1v11h-1zM645 400h1v10h-1zM646 404h1v10h-1zM647 406h1v8h-1zM648 402h1v10h-1zM649 398h1v11h-1zM650 394h1v11h-1zM651 390h1v10h-1zM652 387h1v10h-1zM653 383h1v10h-1zM654 378h1v11h-1zM655 372h1v11h-1zM656 366h1v11h-1zM657 359h1v11h-1zM658 352h1v10h-1zM659 344h1v11h-1zM660 336h1v11h-1zM661 329h1v10h-1zM662 322h1v10h-1zM663 314h1v11h-1zM664 305h1v12h-1zM665 296h1v12h-1zM666 287h1v12h-1zM667 278h1v12h-1zM668 269h1v12h-1zM669 261h1v12h-1zM670 254h1v12h-1zM671 250h1v10h-1zM672 248h1v8h-1zM673 246h1v8h-1zM674 244h1v9h-1zM675 242h1v9h-1zM676 238h1v10h-1zM677 235h1v10h-1zM678 231h1v10h-1zM679 228h1v9h-1zM680 228h1v9h-1zM681 231h1v10h-1zM682 235h1v10h-1zM683 239h1v10h-1zM684 243h1v10h-1zM685 246h1v10h-1zM686 250h1v11h-1zM687 255h1v11h-1zM688 261h1v11h-1zM689 267h1v11h-1zM690 274h1v11h-1zM691 282h1v11h-1zM692 290h1v10h-1zM693 297h1v11h-1zM694 305h1v10h-1zM695 312h1v10h-1zM696 319h1v12h-1zM697 328h1v12h-1zM698 337h1v12h-1zM699 346h1v12h-1zM700 355h1v12h-1zM701 364h1v12h-1zM702 371h1v13h-1zM703 378h1v12h-1zM704 384h1v9h-1zM705 387h1v8h-1zM706 388h1v9h-1zM707 390h1v9h-1zM708 393h1v9h-1zM709 395h1v10h-1zM710 399h1v10h-1zM711 403h1v10h-1zM712 406h1v9h-1zM713 404h1v10h-1zM714 400h1v11h-1zM715 396h1v11h-1zM716 392h1v10h-1zM717 389h1v10h-1zM718 385h1v10h-1zM719 380h1v11h-1zM720 375h1v11h-1zM721 369h1v11h-1zM722 362h1v11h-1zM723 355h1v11h-1zM724 348h1v11h-1zM725 340h1v11h-1zM726 333h1v10h-1zM727 325h1v11h-1zM728 318h1v10h-1zM729 309h1v12h-1zM730 300h1v12h-1zM731 291h1v12h-1zM732 282h1v12h-1zM733 273h1v12h-1zM734 264h1v13h-1zM735 257h1v12h-1zM736 252h1v11h-1zM737 249h1v9h-1zM738 247h1v8h-1zM739 245h1v9h-1zM740 243h1v9h-1zM741 240h1v9h-1zM742 237h1v9h-1zM743 233h1v10h-1zM744 229h1v10h-1zM745 228h1v8h-1zM746 230h1v9h-1zM747 233h1v10h-1zM748 237h1v11h-1zM749 241h1v10h-1zM750 245h1v10h-1zM751 248h1v11h-1zM752 253h1v11h-1zM753 258h1v11h-1zM754 265h1v10h-1zM755 271h1v11h-1zM756 279h1v10h-1zM757 286h1v11h-1zM758 294h1v11h-1zM759 302h1v10h-1zM760 309h1v10h-1zM761 316h1v11h-1zM762 324h1v12h-1zM763 333h1v12h-1zM764 342h1v12h-1zM765 351h1v12h-1zM766 360h1v12h-1zM767 368h1v13h-1zM768 375h1v12h-1zM769 382h1v10h-1zM770 386h1v8h-1zM771 388h1v8h-1zM772 390h1v8h-1zM773 392h1v8h-1zM774 394h1v9h-1zM775 397h1v10h-1zM776 401h1v10h-1zM777 405h1v10h-1zM778 406h1v9h-1zM779 402h1v10h-1zM780 398h1v11h-1zM781 394h1v10h-1zM782 390h1v10h-1zM783 387h1v10h-1zM784 383h1v10h-1zM785 378h1v11h-1zM786 372h1v11h-1zM787 366h1v10h-1zM788 359h1v10h-1zM789 352h1v10h-1zM790 344h1v11h-1zM791 336h1v11h-1zM792 329h1v10h-1zM793 322h1v10h-1zM794 313h1v12h-1zM795 304h1v12h-1zM796 295h1v12h-1zM797 286h1v12h-1zM798 277h1v12h-1zM799 268h1v13h-1zM800 260h1v13h-1zM801 254h1v11h-1zM802 250h1v10h-1zM803 248h1v8h-1zM804 246h1v8h-1zM805 244h1v9h-1zM806 242h1v9h-1zM807 238h1v10h-1zM808 235h1v10h-1zM809 231h1v10h-1zM810 228h1v9h-1zM811 229h1v9h-1zM812 231h1v11h-1zM813 235h1v11h-1zM814 239h1v11h-1zM815 243h1v10h-1zM816 247h1v10h-1zM817 251h1v10h-1zM818 256h1v11h-1zM819 262h1v11h-1zM820 268h1v11h-1zM821 275h1v11h-1zM822 283h1v10h-1zM823 290h1v11h-1zM824 298h1v11h-1zM825 306h1v10h-1zM826 313h1v10h-1zM827 320h1v12h-1zM828 329h1v12h-1zM829 338h1v12h-1zM830 347h1v12h-1zM831 356h1v12h-1zM832 364h1v13h-1zM833 372h1v13h-1zM834 379h1v11h-1zM835 384h1v10h-1zM836 387h1v8h-1zM837 389h1v8h-1zM838 391h1v8h-1zM839 393h1v9h-1zM840 396h1v9h-1zM841 399h1v10h-1zM842 403h1v10h-1zM843 407h1v8h-1zM844 404h1v10h-1zM845 400h1v11h-1zM846 396h1v11h-1zM847 392h1v10h-1zM848 389h1v10h-1zM849 385h1v10h-1zM850 380h1v11h-1zM851 375h1v11h-1zM852 369h1v10h-1zM853 362h1v11h-1zM854 355h1v11h-1zM855 347h1v11h-1zM856 340h1v10h-1zM857 332h1v11h-1zM858 325h1v10h-1zM859 317h1v11h-1zM860 309h1v11h-1zM861 299h1v13h-1zM862 290h1v12h-1zM863 281h1v12h-1zM864 272h1v13h-1zM865 264h1v12h-1zM866 257h1v12h-1zM867 252h1v10h-1zM868 249h1v9h-1zM869 247h1v8h-1zM870 245h1v9h-1zM871 243h1v9h-1zM872 240h1v9h-1zM873 236h1v10h-1zM874 233h1v10h-1zM875 228h1v11h-1zM876 228h1v8h-1zM877 230h1v10h-1zM878 233h1v11h-1zM879 238h1v10h-1zM880 242h1v10h-1zM881 245h1v10h-1zM882 249h1v10h-1zM883 253h1v11h-1zM884 259h1v11h-1zM885 265h1v11h-1zM886 272h1v11h-1zM887 279h1v11h-1zM888 287h1v11h-1zM889 295h1v10h-1zM890 302h1v11h-1zM891 310h1v10h-1zM892 317h1v11h-1zM893 325h1v12h-1zM894 334h1v12h-1zM895 343h1v12h-1zM896 352h1v12h-1zM897 361h1v12h-1zM898 369h1v12h-1zM899 376h1v12h-1zM900 382h1v10h-1zM901 386h1v9h-1zM902 388h1v8h-1zM903 390h1v8h-1zM904 392h1v9h-1zM905 394h1v10h-1zM906 397h1v11h-1zM907 401h1v10h-1zM908 405h1v10h-1zM909 406h1v9h-1zM910 402h1v10h-1zM911 398h1v11h-1zM912 394h1v10h-1zM913 390h1v10h-1zM914 387h1v10h-1zM915 382h1v11h-1zM916 377h1v11h-1zM917 371h1v11h-1zM918 365h1v11h-1zM919 358h1v11h-1zM920 351h1v11h-1zM921 343h1v11h-1zM922 336h1v10h-1zM923 328h1v11h-1zM924 321h1v10h-1zM925 313h1v11h-1zM926 304h1v12h-1zM927 294h1v13h-1zM928 285h1v12h-1zM929 276h1v13h-1zM930 268h1v12h-1zM931 260h1v12h-1zM932 254h1v11h-1zM933 250h1v10h-1zM934 248h1v8h-1zM935 246h1v8h-1zM936 244h1v9h-1zM937 241h1v9h-1zM938 238h1v10h-1zM939 234h1v11h-1zM940 231h1v10h-1zM941 228h1v9h-1zM942 229h1v9h-1zM943 232h1v10h-1zM944 236h1v10h-1zM945 240h1v10h-1zM946 244h1v10h-1zM947 247h1v10h-1zM948 251h1v11h-1zM949 256h1v11h-1zM950 262h1v11h-1zM951 269h1v11h-1zM952 276h1v11h-1zM953 283h1v11h-1zM954 291h1v11h-1zM955 299h1v10h-1zM956 306h1v11h-1zM957 314h1v10h-1zM958 321h1v12h-1zM959 330h1v12h-1zM960 339h1v12h-1zM961 348h1v12h-1zM962 357h1v12h-1zM963 365h1v13h-1zM964 373h1v12h-1zM965 380h1v11h-1zM966 384h1v10h-1zM967 387h1v8h-1zM968 389h1v8h-1zM969 391h1v9h-1zM970 393h1v9h-1zM971 396h1v10h-1zM972 399h1v11h-1zM973 403h1v11h-1zM974 407h1v8h-1zM975 404h1v9h-1zM976 400h1v10h-1zM977 396h1v10h-1zM978 392h1v10h-1zM979 388h1v10h-1zM980 385h1v10h-1zM981 380h1v11h-1zM982 374h1v11h-1zM983 368h1v11h-1zM984 361h1v11h-1zM985 354h1v11h-1zM986 347h1v11h-1zM987 339h1v11h-1zM988 332h1v10h-1zM989 325h1v10h-1zM990 317h1v11h-1zM991 308h1v12h-1zM992 299h1v12h-1zM993 290h1v12h-1zM994 281h1v12h-1zM995 272h1v12h-1zM996 263h1v13h-1zM997 256h1v12h-1zM998 251h1v11h-1zM999 249h1v9h-1zM1000 247h1v8h-1zM1001 245h1v9h-1zM1002 243h1v9h-1zM1003 240h1v9h-1zM1004 236h1v10h-1zM1005 232h1v10h-1zM1006 228h1v11h-1zM1007 228h1v9h-1zM1008 230h1v10h-1zM1009 234h1v10h-1zM1010 238h1v10h-1zM1011 242h1v10h-1zM1012 246h1v9h-1zM1013 249h1v11h-1zM1014 254h1v11h-1zM1015 259h1v11h-1zM1016 266h1v11h-1zM1017 273h1v10h-1zM1018 280h1v11h-1zM1019 288h1v10h-1zM1020 295h1v11h-1zM1021 303h1v10h-1zM1022 310h1v10h-1zM1023 317h1v11h-1zM1024 325h1v13h-1zM1025 335h1v12h-1zM1026 344h1v12h-1zM1027 353h1v12h-1zM1028 361h1v13h-1zM1029 369h1v13h-1zM1030 377h1v11h-1zM1031 383h1v10h-1zM1032 386h1v9h-1zM1033 388h1v8h-1zM1034 390h1v8h-1zM1035 392h1v9h-1zM1036 395h1v9h-1zM1037 398h1v10h-1zM1038 402h1v10h-1zM1039 405h1v10h-1zM1040 406h1v9h-1zM1041 402h1v10h-1zM1042 398h1v10h-1zM1043 394h1v10h-1zM1044 390h1v10h-1zM1045 387h1v9h-1zM1046 382h1v11h-1zM1047 377h1v11h-1zM1048 371h1v11h-1zM1049 365h1v10h-1zM1050 358h1v10h-1zM1051 350h1v11h-1zM1052 343h1v10h-1zM1053 335h1v11h-1zM1054 328h1v10h-1zM1055 321h1v10h-1zM1056 312h1v12h-1zM1057 303h1v12h-1zM1058 294h1v12h-1zM1059 285h1v12h-1zM1060 276h1v12h-1zM1061 267h1v12h-1zM1062 259h1v13h-1zM1063 253h1v12h-1zM1064 250h1v9h-1zM1065 248h1v8h-1zM1066 246h1v8h-1zM1067 244h1v9h-1zM1068 241h1v9h-1zM1069 238h1v10h-1zM1070 234h1v10h-1zM1071 230h1v10h-1zM1072 228h1v9h-1zM1073 229h1v9h-1zM1074 232h1v10h-1zM1075 236h1v11h-1zM1076 240h1v10h-1zM1077 244h1v10h-1zM1078 248h1v9h-1zM1079 251h1v11h-1zM1080 257h1v11h-1zM1081 263h1v11h-1zM1082 269h1v11h-1zM1083 277h1v10h-1zM1084 284h1v11h-1zM1085 292h1v11h-1zM1086 300h1v10h-1zM1087 307h1v10h-1zM1088 314h1v11h-1zM1089 322h1v11h-1zM1090 330h1v13h-1zM1091 340h1v12h-1zM1092 349h1v12h-1zM1093 357h1v13h-1zM1094 366h1v12h-1zM1095 373h1v13h-1zM1096 380h1v11h-1zM1097 385h1v9h-1zM1098 388h1v8h-1zM1099 389h1v8h-1zM1100 391h1v9h-1zM1101 393h1v10h-1zM1102 396h1v10h-1zM1103 400h1v10h-1zM1104 404h1v10h-1zM1105 407h1v8h-1zM1106 404h1v9h-1zM1107 399h1v11h-1zM1108 395h1v11h-1zM1109 392h1v10h-1zM1110 388h1v10h-1zM1111 384h1v11h-1zM1112 379h1v11h-1zM1113 374h1v11h-1zM1114 368h1v10h-1zM1115 361h1v11h-1zM1116 354h1v10h-1zM1117 346h1v11h-1zM1118 338h1v11h-1zM1119 331h1v10h-1zM1120 324h1v10h-1zM1121 316h1v11h-1zM1122 307h1v12h-1zM1123 298h1v12h-1zM1124 289h1v12h-1zM1125 280h1v12h-1zM1126 271h1v12h-1zM1127 263h1v12h-1zM1128 256h1v12h-1zM1129 251h1v10h-1zM1130 249h1v8h-1zM1131 247h1v8h-1zM1132 245h1v8h-1zM1133 242h1v9h-1zM1134 239h1v10h-1zM1135 236h1v10h-1zM1136 232h1v10h-1zM1137 228h1v10h-1zM1138 228h1v9h-1zM1139 230h1v10h-1zM1140 234h1v11h-1zM1141 238h1v11h-1zM1142 242h1v10h-1zM1143 246h1v10h-1zM1144 249h1v11h-1zM1145 254h1v11h-1zM1146 260h1v11h-1zM1147 266h1v11h-1zM1148 273h1v11h-1zM1149 281h1v10h-1zM1150 288h1v11h-1zM1151 296h1v11h-1zM1152 304h1v10h-1zM1153 311h1v10h-1zM1154 318h1v11h-1zM1155 326h1v12h-1zM1156 335h1v13h-1zM1157 345h1v12h-1zM1158 353h1v12h-1zM1159 362h1v12h-1zM1160 370h1v12h-1zM1161 377h1v12h-1zM1162 383h1v10h-1zM1163 387h1v8h-1zM1164 388h1v9h-1zM1165 390h1v9h-1zM1166 392h1v9h-1zM1167 395h1v9h-1zM1168 398h1v10h-1zM1169 402h1v10h-1zM1170 406h1v9h-1zM1171 405h1v9h-1zM1172 401h1v11h-1zM1173 397h1v11h-1zM1174 393h1v11h-1zM1175 390h1v10h-1zM1176 386h1v10h-1zM1177 382h1v11h-1zM1178 376h1v11h-1zM1179 370h1v11h-1zM1180 364h1v11h-1zM1181 357h1v11h-1zM1182 350h1v10h-1zM1183 342h1v11h-1zM1184 334h1v11h-1zM1185 327h1v10h-1zM1186 320h1v10h-1zM1187 311h1v12h-1zM1188 302h1v12h-1zM1189 293h1v12h-1zM1190 284h1v12h-1zM1191 275h1v12h-1zM1192 266h1v13h-1zM1193 259h1v12h-1zM1194 253h1v11h-1zM1195 249h1v10h-1zM1196 248h1v8h-1zM1197 246h1v8h-1zM1198 244h1v8h-1zM1199 241h1v9h-1zM1200 238h1v9h-1zM1201 234h1v10h-1zM1202 230h1v10h-1zM1203 228h1v8h-1zM1204 229h1v10h-1zM1205 232h1v11h-1zM1206 236h1v11h-1zM1207 241h1v10h-1zM1208 244h1v10h-1zM1209 248h1v10h-1zM1210 252h1v11h-1zM1211 257h1v11h-1zM1212 263h1v11h-1zM1213 270h1v11h-1zM1214 277h1v11h-1zM1215 285h1v10h-1zM1216 292h1v11h-1zM1217 300h1v11h-1zM1218 308h1v10h-1zM1219 315h1v10h-1zM1220 322h1v12h-1zM1221 331h1v12h-1zM1222 340h1v12h-1zM1223 349h1v12h-1zM1224 358h1v12h-1zM1225 366h1v13h-1zM1226 374h1v12h-1zM1227 381h1v10h-1zM1228 385h1v9h-1zM1229 388h1v8h-1zM1230 389h1v9h-1zM1231 391h1v9h-1zM1232 394h1v9h-1zM1233 396h1v10h-1zM1234 400h1v10h-1zM1235 404h1v10h-1zM1236 407h1v8h-1zM1237 403h1v10h-1zM1238 399h1v11h-1zM1239 395h1v11h-1zM1240 391h1v10h-1zM1241 388h1v10h-1zM1242 384h1v10h-1zM1243 379h1v11h-1zM1244 373h1v11h-1zM1245 367h1v11h-1zM1246 360h1v11h-1zM1247 353h1v11h-1zM1248 346h1v10h-1zM1249 338h1v11h-1zM1250 331h1v10h-1zM1251 323h1v11h-1zM1252 315h1v11h-1zM1253 306h1v12h-1zM1254 297h1v12h-1zM1255 288h1v12h-1zM1256 279h1v12h-1zM1257 270h1v13h-1zM1258 262h1v12h-1zM1259 255h1v12h-1zM1260 251h1v10h-1zM1261 248h1v9h-1zM1262 247h1v8h-1zM1263 245h1v8h-1zM1264 242h1v9h-1zM1265 239h1v10h-1zM1266 235h1v11h-1zM1267 232h1v10h-1zM1268 228h1v10h-1zM1269 228h1v9h-1zM1270 231h1v10h-1zM1271 234h1v11h-1zM1272 239h1v10h-1zM1273 243h1v10h-1zM1274 246h1v10h-1zM1275 250h1v10h-1zM1276 254h1v12h-1zM1277 260h1v11h-1zM1278 267h1v11h-1zM1279 274h1v10h-1zM1280 281h1v11h-1zM1281 289h1v11h-1zM1282 297h1v10h-1zM1283 304h1v10h-1zM1284 311h1v11h-1zM1285 319h1v11h-1zM1286 327h1v12h-1zM1287 336h1v12h-1zM1288 345h1v12h-1zM1289 354h1v12h-1zM1290 363h1v12h-1zM1291 371h1v12h-1zM1292 378h1v11h-1zM1293 383h1v10h-1zM1294 387h1v8h-1zM1295 389h1v8h-1zM1296 390h1v9h-1zM1297 392h1v10h-1zM1298 395h1v10h-1zM1299 398h1v11h-1zM1300 402h1v10h-1zM1301 406h1v9h-1zM1302 405h1v9h-1zM1303 401h1v10h-1zM1304 397h1v10h-1zM1305 393h1v10h-1zM1306 389h1v10h-1zM1307 386h1v10h-1zM1308 381h1v11h-1zM1309 376h1v11h-1zM1310 370h1v11h-1zM1311 364h1v10h-1zM1312 357h1v10h-1zM1313 349h1v11h-1zM1314 341h1v11h-1zM1315 334h1v10h-1zM1316 327h1v10h-1zM1317 319h1v11h-1zM1318 311h1v11h-1zM1319 301h1v13h-1zM1320 292h1v12h-1zM1321 283h1v12h-1zM1322 274h1v13h-1zM1323 266h1v12h-1zM1324 258h1v12h-1zM1325 253h1v11h-1zM1326 249h1v10h-1zM1327 248h1v8h-1zM1328 246h1v8h-1zM1329 243h1v9h-1zM1330 241h1v9h-1zM1331 237h1v10h-1zM1332 233h1v11h-1zM1333 230h1v10h-1z"/><path fill="#00ffff" d="M29 320h1v3h-1zM30 320h1v37h-1zM31 354h1v33h-1zM32 384h1v15h-1zM33 397h1v13h-1zM34 408h1v11h-1zM35 417h1v10h-1zM36 425h1v9h-1zM37 432h1v8h-1zM38 438h1v7h-1zM39 443h1v7h-1zM40 447h1v7h-1zM41 451h1v6h-1zM42 454h1v7h-1zM43 457h1v7h-1zM44 460h1v7h-1zM45 464h1v7h-1zM46 467h1v7h-1zM47 471h1v7h-1zM48 475h1v6h-1zM49 478h1v7h-1zM50 483h1v6h-1zM51 486h1v7h-1zM52 490h1v7h-1zM53 493h1v7h-1zM54 497h1v7h-1zM55 501h1v7h-1zM56 505h1v7h-1zM57 510h1v6h-1zM58 514h1v7h-1zM59 519h1v7h-1zM60 523h1v8h-1zM61 528h1v7h-1zM62 532h1v7h-1zM63 536h1v7h-1zM64 541h1v8h-1zM65 547h1v13h-1zM66 557h1v11h-1zM67 566h1v7h-1zM68 570h1v6h-1zM69 574h1v6h-1zM70 577h1v7h-1zM71 581h1v7h-1zM72 583h1v7h-1zM73 584h1v8h-1zM74 586h1v7h-1zM75 587h1v6h-1zM76 586h1v7h-1zM77 585h1v8h-1zM78 583h1v8h-1zM79 581h1v7h-1zM80 577h1v7h-1zM81 572h1v8h-1zM82 565h1v9h-1zM83 554h1v13h-1zM84 543h1v14h-1zM85 534h1v11h-1zM86 524h1v12h-1zM87 512h1v15h-1zM88 498h1v17h-1zM89 477h1v23h-1zM90 449h1v30h-1zM91 435h1v16h-1zM92 416h1v22h-1zM93 395h1v23h-1zM94 379h1v18h-1zM95 367h1v15h-1zM96 353h1v16h-1zM97 337h1v18h-1zM98 317h1v22h-1zM99 291h1v28h-1zM100 276h1v18h-1zM101 264h1v15h-1zM102 251h1v15h-1zM103 237h1v16h-1zM104 224h1v15h-1zM105 214h1v13h-1zM106 206h1v11h-1zM107 199h1v10h-1zM108 192h1v9h-1zM109 188h1v7h-1zM110 184h1v8h-1zM111 184h1v7h-1zM112 187h1v6h-1zM113 191h1v8h-1zM114 196h1v9h-1zM115 203h1v9h-1zM116 210h1v11h-1zM117 218h1v13h-1zM118 229h1v14h-1zM119 240h1v17h-1zM120 255h1v18h-1zM121 271h1v17h-1zM122 286h1v18h-1zM123 301h1v19h-1zM124 318h1v18h-1zM125 333h1v18h-1zM126 348h1v15h-1zM127 361h1v10h-1zM128 368h1v7h-1zM129 373h1v6h-1zM130 376h1v6h-1zM131 380h1v6h-1zM132 384h1v7h-1zM133 389h1v7h-1zM134 391h1v8h-1zM135 391h1v7h-1zM136 386h1v8h-1zM137 378h1v10h-1zM138 372h1v9h-1zM139 367h1v8h-1zM140 362h1v7h-1zM141 357h1v8h-1zM142 356h1v7h-1zM143 357h1v8h-1zM144 360h1v8h-1zM145 363h1v8h-1zM146 364h1v7h-1zM147 364h1v7h-1zM148 363h1v8h-1zM149 363h1v7h-1zM150 361h1v8h-1zM151 360h1v8h-1zM152 359h1v8h-1zM153 357h1v8h-1zM154 356h1v6h-1zM155 352h1v7h-1zM156 346h1v8h-1zM157 340h1v9h-1zM158 335h1v8h-1zM159 330h1v7h-1zM160 325h1v7h-1zM161 320h1v7h-1zM162 315h1v7h-1zM163 309h1v8h-1zM164 302h1v9h-1zM165 294h1v11h-1zM166 284h1v13h-1zM167 272h1v14h-1zM168 261h1v14h-1zM169 250h1v14h-1zM170 239h1v14h-1zM171 229h1v13h-1zM172 219h1v12h-1zM173 212h1v10h-1zM174 205h1v10h-1zM175 199h1v8h-1zM176 195h1v7h-1zM177 192h1v7h-1zM178 193h1v8h-1zM179 197h1v8h-1zM180 203h1v8h-1zM181 209h1v9h-1zM182 215h1v11h-1zM183 223h1v11h-1zM184 232h1v13h-1zM185 242h1v16h-1zM186 255h1v16h-1zM187 269h1v15h-1zM188 282h1v16h-1zM189 295h1v14h-1zM190 306h1v13h-1zM191 316h1v11h-1zM192 325h1v10h-1zM193 333h1v9h-1zM194 339h1v8h-1zM195 345h1v7h-1zM196 349h1v8h-1zM197 354h1v9h-1zM198 361h1v10h-1zM199 369h1v9h-1zM200 375h1v6h-1zM201 375h1v7h-1zM202 374h1v8h-1zM203 372h1v8h-1zM204 370h1v8h-1zM205 370h1v7h-1zM206 370h1v7h-1zM207 371h1v7h-1zM208 374h1v7h-1zM209 377h1v7h-1zM210 380h1v7h-1zM211 383h1v8h-1zM212 385h1v7h-1zM213 385h1v7h-1zM214 384h1v8h-1zM215 383h1v7h-1zM216 381h1v7h-1zM217 378h1v7h-1zM218 375h1v6h-1zM219 370h1v8h-1zM220 362h1v11h-1zM221 353h1v12h-1zM222 348h1v8h-1zM223 343h1v7h-1zM224 339h1v6h-1zM225 334h1v7h-1zM226 328h1v8h-1zM227 320h1v10h-1zM228 310h1v12h-1zM229 300h1v13h-1zM230 290h1v13h-1zM231 280h1v13h-1zM232 270h1v13h-1zM233 259h1v13h-1zM234 250h1v12h-1zM235 241h1v12h-1zM236 232h1v12h-1zM237 225h1v10h-1zM238 219h1v9h-1zM239 213h1v9h-1zM240 209h1v8h-1zM241 205h1v7h-1zM242 203h1v7h-1zM243 203h1v8h-1zM244 207h1v7h-1zM245 211h1v9h-1zM246 216h1v10h-1zM247 222h1v10h-1zM248 229h1v12h-1zM249 237h1v12h-1zM250 246h1v13h-1zM251 255h1v14h-1zM252 266h1v14h-1zM253 278h1v14h-1zM254 289h1v12h-1zM255 298h1v11h-1zM256 306h1v10h-1zM257 313h1v10h-1zM258 320h1v9h-1zM259 327h1v9h-1zM260 333h1v8h-1zM261 339h1v8h-1zM262 344h1v8h-1zM263 350h1v8h-1zM264 356h1v9h-1zM265 362h1v12h-1zM266 371h1v10h-1zM267 377h1v6h-1zM268 378h1v7h-1zM269 379h1v7h-1zM270 380h1v7h-1zM271 381h1v7h-1zM272 383h1v8h-1zM273 387h1v7h-1zM274 390h1v7h-1zM275 393h1v7h-1zM276 395h1v8h-1zM277 397h1v8h-1zM278 398h1v7h-1zM279 396h1v8h-1zM280 395h1v7h-1zM281 393h1v7h-1zM282 390h1v7h-1zM283 388h1v7h-1zM284 384h1v8h-1zM285 379h1v8h-1zM286 373h1v9h-1zM287 367h1v10h-1zM288 358h1v12h-1zM289 348h1v13h-1zM290 338h1v13h-1zM291 328h1v12h-1zM292 321h1v10h-1zM293 313h1v10h-1zM294 306h1v10h-1zM295 299h1v10h-1zM296 290h1v11h-1zM297 279h1v13h-1zM298 268h1v14h-1zM299 257h1v14h-1zM300 249h1v12h-1zM301 242h1v11h-1zM302 236h1v10h-1zM303 232h1v8h-1zM304 228h1v8h-1zM305 225h1v8h-1zM306 222h1v8h-1zM307 221h1v7h-1zM308 221h1v7h-1zM309 222h1v7h-1zM310 225h1v8h-1zM311 228h1v9h-1zM312 233h1v9h-1zM313 237h1v10h-1zM314 242h1v11h-1zM315 248h1v12h-1zM316 255h1v13h-1zM317 264h1v14h-1zM318 275h1v14h-1zM319 286h1v12h-1zM320 295h1v11h-1zM321 303h1v9h-1zM322 310h1v9h-1zM323 316h1v9h-1zM324 322h1v10h-1zM325 329h1v10h-1zM326 337h1v11h-1zM327 345h1v11h-1zM328 353h1v10h-1zM329 360h1v10h-1zM330 367h1v8h-1zM331 371h1v8h-1zM332 375h1v8h-1zM333 379h1v7h-1zM334 382h1v7h-1zM335 385h1v8h-1zM336 387h1v8h-1zM337 390h1v8h-1zM338 393h1v7h-1zM339 395h1v8h-1zM340 398h1v8h-1zM341 401h1v8h-1zM342 403h1v9h-1zM343 405h1v7h-1zM344 403h1v8h-1zM345 401h1v8h-1zM346 398h1v8h-1zM347 393h1v10h-1zM348 387h1v11h-1zM349 380h1v12h-1zM350 373h1v12h-1zM351 367h1v11h-1zM352 360h1v10h-1zM353 353h1v10h-1zM354 345h1v11h-1zM355 337h1v11h-1zM356 330h1v10h-1zM357 322h1v11h-1zM358 315h1v10h-1zM359 308h1v10h-1zM360 300h1v11h-1zM361 290h1v12h-1zM362 278h1v15h-1zM363 265h1v16h-1zM364 253h1v16h-1zM365 246h1v12h-1zM366 243h1v9h-1zM367 241h1v8h-1zM368 239h1v8h-1zM369 237h1v8h-1zM370 234h1v8h-1zM371 231h1v9h-1zM372 229h1v8h-1zM373 227h1v8h-1zM374 227h1v7h-1zM375 228h1v8h-1zM376 230h1v9h-1zM377 233h1v10h-1zM378 237h1v10h-1zM379 241h1v10h-1zM380 245h1v12h-1zM381 251h1v12h-1zM382 258h1v12h-1zM383 265h1v12h-1zM384 273h1v12h-1zM385 281h1v11h-1zM386 290h1v10h-1zM387 297h1v9h-1zM388 303h1v9h-1zM389 309h1v9h-1zM390 315h1v9h-1zM391 321h1v11h-1zM392 329h1v11h-1zM393 337h1v14h-1zM394 348h1v13h-1zM395 358h1v13h-1zM396 367h1v13h-1zM397 375h1v11h-1zM398 381h1v10h-1zM399 385h1v9h-1zM400 388h1v8h-1zM401 390h1v8h-1zM402 392h1v9h-1zM403 395h1v9h-1zM404 398h1v10h-1zM405 401h1v11h-1zM406 405h1v11h-1zM407 407h1v9h-1zM408 404h1v9h-1zM409 399h1v11h-1zM410 395h1v11h-1zM411 392h1v9h-1zM412 388h1v10h-1zM413 384h1v10h-1zM414 379h1v11h-1zM415 373h1v11h-1zM416 367h1v11h-1zM417 360h1v11h-1zM418 353h1v10h-1zM419 345h1v11h-1zM420 337h1v11h-1zM421 330h1v10h-1zM422 323h1v10h-1zM423 315h1v11h-1zM424 306h1v12h-1zM425 296h1v13h-1zM426 287h1v12h-1zM427 278h1v12h-1zM428 270h1v12h-1zM429 261h1v13h-1zM430 255h1v12h-1zM431 251h1v10h-1zM432 249h1v8h-1zM433 247h1v8h-1zM434 245h1v9h-1zM435 242h1v9h-1zM436 239h1v10h-1zM437 235h1v11h-1zM438 232h1v10h-1zM439 229h1v9h-1zM440 229h1v9h-1zM441 232h1v10h-1zM442 236h1v10h-1zM443 240h1v10h-1zM444 244h1v10h-1zM445 247h1v10h-1zM446 251h1v11h-1zM447 256h1v11h-1zM448 262h1v11h-1zM449 268h1v11h-1zM450 276h1v10h-1zM451 283h1v11h-1zM452 291h1v10h-1zM453 298h1v11h-1zM454 306h1v10h-1zM455 313h1v10h-1zM456 320h1v12h-1zM457 329h1v12h-1zM458 338h1v12h-1zM459 347h1v12h-1zM460 356h1v12h-1zM461 364h1v13h-1zM462 372h1v13h-1zM463 379h1v12h-1zM464 384h1v10h-1zM465 388h1v8h-1zM466 389h1v9h-1zM467 391h1v9h-1zM468 393h1v9h-1zM469 396h1v10h-1zM470 399h1v11h-1zM471 403h1v10h-1zM472 407h1v8h-1zM473 405h1v9h-1zM474 401h1v10h-1zM475 397h1v10h-1zM476 393h1v10h-1zM477 389h1v10h-1zM478 386h1v10h-1zM479 381h1v11h-1zM480 375h1v12h-1zM481 369h1v11h-1zM482 363h1v11h-1zM483 356h1v10h-1zM484 348h1v11h-1zM485 341h1v10h-1zM486 333h1v11h-1zM487 326h1v10h-1zM488 318h1v11h-1zM489 310h1v11h-1zM490 300h1v13h-1zM491 291h1v12h-1zM492 282h1v12h-1zM493 273h1v13h-1zM494 265h1v12h-1zM495 257h1v13h-1zM496 252h1v11h-1zM497 249h1v9h-1zM498 248h1v8h-1zM499 246h1v8h-1zM500 243h1v9h-1zM501 241h1v9h-1zM502 237h1v10h-1zM503 233h1v10h-1zM504 229h1v11h-1zM505 229h1v8h-1zM506 230h1v10h-1zM507 233h1v11h-1zM508 238h1v10h-1zM509 242h1v10h-1zM510 246h1v9h-1zM511 249h1v10h-1zM512 253h1v11h-1zM513 259h1v11h-1zM514 265h1v11h-1zM515 272h1v11h-1zM516 279h1v11h-1zM517 287h1v11h-1zM518 295h1v10h-1zM519 302h1v11h-1zM520 310h1v10h-1zM521 317h1v11h-1zM522 325h1v12h-1zM523 334h1v12h-1zM524 343h1v12h-1zM525 352h1v12h-1zM526 360h1v13h-1zM527 369h1v12h-1zM528 376h1v12h-1zM529 382h1v10h-1zM530 386h1v9h-1zM531 388h1v8h-1zM532 390h1v8h-1zM533 392h1v9h-1zM534 395h1v9h-1zM535 398h1v10h-1zM536 401h1v10h-1zM537 405h1v10h-1zM538 406h1v9h-1zM539 403h1v10h-1zM540 398h1v11h-1zM541 394h1v11h-1zM542 391h1v10h-1zM543 387h1v10h-1zM544 383h1v11h-1zM545 378h1v11h-1zM546 372h1v11h-1zM547 366h1v11h-1zM548 359h1v11h-1zM549 352h1v10h-1zM550 344h1v11h-1zM551 336h1v11h-1zM552 329h1v10h-1zM553 322h1v10h-1zM554 314h1v11h-1zM555 305h1v12h-1zM556 295h1v13h-1zM557 286h1v12h-1zM558 277h1v12h-1zM559 268h1v13h-1zM560 260h1v13h-1zM561 254h1v12h-1zM562 250h1v10h-1zM563 248h1v9h-1zM564 247h1v8h-1zM565 244h1v9h-1zM566 242h1v9h-1zM567 239h1v9h-1zM568 235h1v10h-1zM569 231h1v10h-1zM570 228h1v9h-1zM571 229h1v9h-1zM572 232h1v10h-1zM573 236h1v10h-1zM574 240h1v10h-1zM575 244h1v10h-1zM576 247h1v10h-1zM577 251h1v11h-1zM578 256h1v11h-1zM579 262h1v11h-1zM580 269h1v10h-1zM581 276h1v10h-1zM582 283h1v11h-1zM583 291h1v11h-1zM584 299h1v10h-1zM585 306h1v10h-1zM586 313h1v11h-1zM587 321h1v11h-1zM588 329h1v13h-1zM589 339h1v12h-1zM590 348h1v12h-1zM591 356h1v13h-1zM592 365h1v12h-1zM593 373h1v12h-1zM594 379h1v12h-1zM595 385h1v9h-1zM596 388h1v7h-1zM597 389h1v8h-1zM598 391h1v9h-1zM599 393h1v9h-1zM600 396h1v10h-1zM601 399h1v11h-1zM602 403h1v10h-1zM603 407h1v8h-1zM604 404h1v10h-1zM605 400h1v11h-1zM606 396h1v11h-1zM607 392h1v10h-1zM608 389h1v10h-1zM609 385h1v10h-1zM610 380h1v11h-1zM611 375h1v11h-1zM612 369h1v11h-1zM613 362h1v11h-1zM614 355h1v11h-1zM615 348h1v10h-1zM616 340h1v11h-1zM617 332h1v11h-1zM618 325h1v10h-1zM619 318h1v10h-1zM620 309h1v12h-1zM621 299h1v13h-1zM622 290h1v12h-1zM623 281h1v12h-1zM624 272h1v13h-1zM625 264h1v12h-1zM626 257h1v12h-1zM627 252h1v10h-1zM628 249h1v9h-1zM629 247h1v8h-1zM630 245h1v9h-1zM631 243h1v9h-1zM632 240h1v9h-1zM633 237h1v10h-1zM634 233h1v10h-1zM635 229h1v10h-1zM636 228h1v9h-1zM637 230h1v10h-1zM638 234h1v10h-1zM639 238h1v10h-1zM640 242h1v10h-1zM641 246h1v9h-1zM642 249h1v10h-1zM643 253h1v12h-1zM644 259h1v11h-1zM645 266h1v10h-1zM646 272h1v11h-1zM647 280h1v10h-1zM648 287h1v11h-1zM649 295h1v11h-1zM650 303h1v10h-1zM651 310h1v10h-1zM652 317h1v11h-1zM653 325h1v12h-1zM654 334h1v12h-1zM655 343h1v12h-1zM656 352h1v12h-1zM657 361h1v12h-1zM658 369h1v13h-1zM659 376h1v12h-1zM660 382h1v11h-1zM661 386h1v9h-1zM662 388h1v8h-1zM663 390h1v8h-1zM664 392h1v9h-1zM665 395h1v9h-1zM666 398h1v10h-1zM667 401h1v11h-1zM668 405h1v10h-1zM669 406h1v9h-1zM670 402h1v10h-1zM671 398h1v11h-1zM672 394h1v10h-1zM673 390h1v10h-1zM674 387h1v10h-1zM675 383h1v10h-1zM676 377h1v11h-1zM677 371h1v11h-1zM678 365h1v11h-1zM679 358h1v11h-1zM680 351h1v11h-1zM681 343h1v11h-1zM682 336h1v10h-1zM683 328h1v11h-1zM684 321h1v10h-1zM685 313h1v11h-1zM686 304h1v12h-1zM687 294h1v13h-1zM688 285h1v12h-1zM689 276h1v13h-1zM690 268h1v12h-1zM691 260h1v12h-1zM692 254h1v11h-1zM693 250h1v10h-1zM694 248h1v8h-1zM695 246h1v9h-1zM696 244h1v9h-1zM697 241h1v10h-1zM698 238h1v10h-1zM699 234h1v11h-1zM700 231h1v10h-1zM701 228h1v9h-1zM702 229h1v9h-1zM703 232h1v10h-1zM704 236h1v10h-1zM705 240h1v10h-1zM706 244h1v10h-1zM707 247h1v10h-1zM708 251h1v11h-1zM709 256h1v12h-1zM710 262h1v11h-1zM711 269h1v11h-1zM712 276h1v11h-1zM713 284h1v10h-1zM714 291h1v11h-1zM715 299h1v11h-1zM716 307h1v10h-1zM717 314h1v10h-1zM718 321h1v12h-1zM719 330h1v12h-1zM720 339h1v12h-1zM721 348h1v12h-1zM722 357h1v12h-1zM723 365h1v13h-1zM724 373h1v12h-1zM725 380h1v11h-1zM726 385h1v9h-1zM727 388h1v7h-1zM728 389h1v8h-1zM729 391h1v9h-1zM730 393h1v10h-1zM731 396h1v10h-1zM732 400h1v10h-1zM733 403h1v11h-1zM734 407h1v8h-1zM735 404h1v10h-1zM736 400h1v10h-1zM737 396h1v10h-1zM738 392h1v10h-1zM739 388h1v10h-1zM740 385h1v10h-1zM741 380h1v11h-1zM742 374h1v11h-1zM743 368h1v11h-1zM744 361h1v11h-1zM745 354h1v11h-1zM746 347h1v10h-1zM747 339h1v11h-1zM748 332h1v10h-1zM749 325h1v10h-1zM750 317h1v11h-1zM751 308h1v12h-1zM752 299h1v12h-1zM753 289h1v13h-1zM754 281h1v11h-1zM755 272h1v12h-1zM756 263h1v13h-1zM757 256h1v12h-1zM758 251h1v11h-1zM759 249h1v9h-1zM760 247h1v8h-1zM761 245h1v9h-1zM762 243h1v9h-1zM763 240h1v9h-1zM764 236h1v10h-1zM765 232h1v10h-1zM766 228h1v11h-1zM767 228h1v9h-1zM768 230h1v10h-1zM769 234h1v10h-1zM770 238h1v11h-1zM771 242h1v10h-1zM772 246h1v10h-1zM773 249h1v11h-1zM774 254h1v11h-1zM775 260h1v11h-1zM776 266h1v11h-1zM777 273h1v11h-1zM778 280h1v11h-1zM779 288h1v10h-1zM780 295h1v11h-1zM781 303h1v10h-1zM782 310h1v11h-1zM783 318h1v11h-1zM784 326h1v12h-1zM785 335h1v12h-1zM786 344h1v12h-1zM787 353h1v12h-1zM788 362h1v12h-1zM789 370h1v12h-1zM790 377h1v12h-1zM791 383h1v10h-1zM792 386h1v9h-1zM793 388h1v8h-1zM794 390h1v9h-1zM795 392h1v9h-1zM796 395h1v9h-1zM797 398h1v10h-1zM798 402h1v10h-1zM799 405h1v10h-1zM800 406h1v9h-1zM801 402h1v10h-1zM802 397h1v11h-1zM803 394h1v10h-1zM804 390h1v10h-1zM805 387h1v9h-1zM806 382h1v11h-1zM807 377h1v11h-1zM808 371h1v11h-1zM809 365h1v10h-1zM810 358h1v10h-1zM811 350h1v11h-1zM812 342h1v11h-1zM813 335h1v10h-1zM814 328h1v10h-1zM815 321h1v10h-1zM816 312h1v12h-1zM817 303h1v12h-1zM818 294h1v12h-1zM819 285h1v12h-1zM820 276h1v12h-1zM821 267h1v12h-1zM822 259h1v12h-1zM823 253h1v11h-1zM824 250h1v9h-1zM825 248h1v8h-1zM826 246h1v8h-1zM827 244h1v9h-1zM828 241h1v9h-1zM829 238h1v10h-1zM830 234h1v10h-1zM831 230h1v10h-1zM832 228h1v9h-1zM833 229h1v9h-1zM834 232h1v11h-1zM835 236h1v11h-1zM836 240h1v11h-1zM837 244h1v10h-1zM838 248h1v10h-1zM839 251h1v11h-1zM840 257h1v11h-1zM841 263h1v11h-1zM842 270h1v10h-1zM843 277h1v10h-1zM844 284h1v11h-1zM845 292h1v11h-1zM846 300h1v10h-1zM847 307h1v10h-1zM848 314h1v11h-1zM849 322h1v12h-1zM850 331h1v12h-1zM851 340h1v12h-1zM852 349h1v12h-1zM853 358h1v12h-1zM854 366h1v12h-1zM855 374h1v12h-1zM856 380h1v11h-1zM857 385h1v9h-1zM858 388h1v8h-1zM859 389h1v9h-1zM860 391h1v9h-1zM861 394h1v9h-1zM862 396h1v10h-1zM863 400h1v10h-1zM864 404h1v10h-1zM865 407h1v8h-1zM866 404h1v9h-1zM867 399h1v11h-1zM868 395h1v11h-1zM869 392h1v10h-1zM870 388h1v10h-1zM871 384h1v10h-1zM872 379h1v11h-1zM873 374h1v11h-1zM874 368h1v10h-1zM875 361h1v11h-1zM876 354h1v10h-1zM877 346h1v11h-1zM878 338h1v11h-1zM879 331h1v10h-1zM880 324h1v10h-1zM881 316h1v11h-1zM882 307h1v12h-1zM883 298h1v12h-1zM884 289h1v12h-1zM885 280h1v12h-1zM886 271h1v12h-1zM887 262h1v13h-1zM888 256h1v12h-1zM889 251h1v10h-1zM890 249h1v8h-1zM891 247h1v8h-1zM892 245h1v8h-1zM893 242h1v9h-1zM894 239h1v10h-1zM895 236h1v10h-1zM896 232h1v10h-1zM897 228h1v10h-1zM898 228h1v9h-1zM899 231h1v9h-1zM900 234h1v11h-1zM901 238h1v11h-1zM902 242h1v10h-1zM903 246h1v10h-1zM904 250h1v10h-1zM905 254h1v11h-1zM906 260h1v11h-1zM907 266h1v11h-1zM908 273h1v11h-1zM909 281h1v10h-1zM910 288h1v11h-1zM911 296h1v11h-1zM912 304h1v10h-1zM913 311h1v10h-1zM914 318h1v11h-1zM915 326h1v12h-1zM916 335h1v13h-1zM917 345h1v12h-1zM918 354h1v12h-1zM919 362h1v13h-1zM920 370h1v13h-1zM921 377h1v12h-1zM922 383h1v10h-1zM923 387h1v8h-1zM924 388h1v9h-1zM925 390h1v9h-1zM926 392h1v9h-1zM927 395h1v10h-1zM928 398h1v10h-1zM929 402h1v10h-1zM930 406h1v9h-1zM931 405h1v9h-1zM932 401h1v11h-1zM933 397h1v11h-1zM934 393h1v11h-1zM935 390h1v10h-1zM936 386h1v10h-1zM937 382h1v10h-1zM938 376h1v11h-1zM939 370h1v11h-1zM940 364h1v11h-1zM941 357h1v11h-1zM942 350h1v10h-1zM943 342h1v11h-1zM944 334h1v11h-1zM945 327h1v10h-1zM946 320h1v10h-1zM947 311h1v12h-1zM948 302h1v12h-1zM949 293h1v12h-1zM950 284h1v12h-1zM951 275h1v12h-1zM952 266h1v13h-1zM953 258h1v13h-1zM954 253h1v11h-1zM955 249h1v10h-1zM956 248h1v8h-1zM957 246h1v8h-1zM958 244h1v8h-1zM959 241h1v9h-1zM960 238h1v9h-1zM961 234h1v10h-1zM962 230h1v10h-1zM963 228h1v8h-1zM964 229h1v10h-1zM965 232h1v11h-1zM966 236h1v11h-1zM967 241h1v10h-1zM968 244h1v10h-1zM969 248h1v10h-1zM970 252h1v11h-1zM971 257h1v11h-1zM972 263h1v11h-1zM973 270h1v11h-1zM974 277h1v11h-1zM975 285h1v10h-1zM976 292h1v11h-1zM977 300h1v11h-1zM978 308h1v10h-1zM979 315h1v10h-1zM980 322h1v12h-1zM981 331h1v13h-1zM982 341h1v12h-1zM983 350h1v12h-1zM984 358h1v13h-1zM985 367h1v12h-1zM986 374h1v12h-1zM987 381h1v10h-1zM988 385h1v9h-1zM989 388h1v8h-1zM990 389h1v9h-1zM991 391h1v9h-1zM992 394h1v9h-1zM993 397h1v10h-1zM994 400h1v10h-1zM995 404h1v11h-1zM996 407h1v8h-1zM997 403h1v10h-1zM998 399h1v11h-1zM999 395h1v10h-1zM1000 391h1v10h-1zM1001 388h1v10h-1zM1002 384h1v10h-1zM1003 379h1v11h-1zM1004 373h1v11h-1zM1005 367h1v11h-1zM1006 360h1v11h-1zM1007 353h1v11h-1zM1008 345h1v11h-1zM1009 338h1v10h-1zM1010 330h1v11h-1zM1011 323h1v10h-1zM1012 315h1v11h-1zM1013 306h1v12h-1zM1014 297h1v12h-1zM1015 288h1v12h-1zM1016 279h1v12h-1zM1017 270h1v12h-1zM1018 262h1v12h-1zM1019 255h1v12h-1zM1020 251h1v10h-1zM1021 248h1v9h-1zM1022 247h1v8h-1zM1023 245h1v8h-1zM1024 242h1v9h-1zM1025 239h1v10h-1zM1026 235h1v11h-1zM1027 232h1v10h-1zM1028 228h1v10h-1zM1029 228h1v9h-1zM1030 231h1v10h-1zM1031 234h1v11h-1zM1032 239h1v10h-1zM1033 243h1v10h-1zM1034 246h1v10h-1zM1035 250h1v10h-1zM1036 255h1v11h-1zM1037 260h1v12h-1zM1038 267h1v11h-1zM1039 274h1v11h-1zM1040 281h1v11h-1zM1041 289h1v11h-1zM1042 297h1v10h-1zM1043 304h1v11h-1zM1044 312h1v10h-1zM1045 319h1v11h-1zM1046 327h1v12h-1zM1047 336h1v12h-1zM1048 345h1v12h-1zM1049 354h1v12h-1zM1050 363h1v12h-1zM1051 371h1v12h-1zM1052 378h1v11h-1zM1053 383h1v10h-1zM1054 387h1v8h-1zM1055 389h1v8h-1zM1056 390h1v9h-1zM1057 393h1v9h-1zM1058 395h1v10h-1zM1059 398h1v11h-1zM1060 402h1v10h-1zM1061 406h1v9h-1zM1062 405h1v9h-1zM1063 401h1v10h-1zM1064 397h1v10h-1zM1065 393h1v10h-1zM1066 389h1v10h-1zM1067 386h1v10h-1zM1068 381h1v11h-1zM1069 376h1v11h-1zM1070 370h1v11h-1zM1071 363h1v11h-1zM1072 356h1v11h-1zM1073 349h1v11h-1zM1074 341h1v11h-1zM1075 334h1v10h-1zM1076 327h1v10h-1zM1077 319h1v11h-1zM1078 310h1v12h-1zM1079 301h1v12h-1zM1080 292h1v12h-1zM1081 283h1v12h-1zM1082 274h1v12h-1zM1083 265h1v13h-1zM1084 258h1v12h-1zM1085 252h1v11h-1zM1086 249h1v10h-1zM1087 248h1v8h-1zM1088 246h1v8h-1zM1089 243h1v9h-1zM1090 241h1v9h-1zM1091 237h1v10h-1zM1092 233h1v11h-1zM1093 230h1v10h-1zM1094 228h1v8h-1zM1095 229h1v10h-1zM1096 233h1v10h-1zM1097 237h1v10h-1zM1098 241h1v10h-1zM1099 245h1v10h-1zM1100 248h1v10h-1zM1101 252h1v11h-1zM1102 258h1v11h-1zM1103 264h1v11h-1zM1104 271h1v10h-1zM1105 278h1v10h-1zM1106 285h1v11h-1zM1107 293h1v11h-1zM1108 301h1v10h-1zM1109 308h1v10h-1zM1110 315h1v11h-1zM1111 323h1v12h-1zM1112 332h1v12h-1zM1113 341h1v12h-1zM1114 350h1v12h-1zM1115 359h1v12h-1zM1116 367h1v13h-1zM1117 375h1v12h-1zM1118 381h1v11h-1zM1119 385h1v9h-1zM1120 388h1v8h-1zM1121 389h1v9h-1zM1122 391h1v9h-1zM1123 394h1v9h-1zM1124 397h1v10h-1zM1125 400h1v11h-1zM1126 404h1v11h-1zM1127 406h1v9h-1zM1128 403h1v10h-1zM1129 399h1v10h-1zM1130 395h1v10h-1zM1131 391h1v10h-1zM1132 388h1v9h-1zM1133 384h1v10h-1zM1134 378h1v11h-1zM1135 373h1v11h-1zM1136 366h1v11h-1zM1137 360h1v10h-1zM1138 353h1v10h-1zM1139 345h1v11h-1zM1140 337h1v11h-1zM1141 330h1v10h-1zM1142 323h1v10h-1zM1143 315h1v11h-1zM1144 306h1v12h-1zM1145 296h1v13h-1zM1146 287h1v12h-1zM1147 278h1v12h-1zM1148 269h1v13h-1zM1149 261h1v13h-1zM1150 255h1v11h-1zM1151 250h1v11h-1zM1152 248h1v9h-1zM1153 247h1v8h-1zM1154 245h1v8h-1zM1155 242h1v9h-1zM1156 239h1v9h-1zM1157 235h1v10h-1zM1158 231h1v10h-1zM1159 228h1v10h-1zM1160 228h1v9h-1zM1161 231h1v10h-1zM1162 235h1v10h-1zM1163 239h1v10h-1zM1164 243h1v10h-1zM1165 247h1v9h-1zM1166 250h1v11h-1zM1167 255h1v11h-1zM1168 261h1v11h-1zM1169 267h1v11h-1zM1170 275h1v10h-1zM1171 282h1v10h-1zM1172 289h1v11h-1zM1173 297h1v11h-1zM1174 305h1v10h-1zM1175 312h1v10h-1zM1176 319h1v12h-1zM1177 328h1v12h-1zM1178 337h1v12h-1zM1179 346h1v12h-1zM1180 355h1v12h-1zM1181 363h1v13h-1zM1182 371h1v13h-1zM1183 378h1v12h-1zM1184 384h1v9h-1zM1185 387h1v8h-1zM1186 389h1v8h-1zM1187 390h1v9h-1zM1188 393h1v9h-1zM1189 395h1v10h-1zM1190 399h1v10h-1zM1191 403h1v10h-1zM1192 406h1v9h-1zM1193 405h1v9h-1zM1194 401h1v10h-1zM1195 396h1v11h-1zM1196 393h1v10h-1zM1197 389h1v10h-1zM1198 386h1v9h-1zM1199 381h1v11h-1zM1200 375h1v11h-1zM1201 369h1v11h-1zM1202 363h1v11h-1zM1203 356h1v10h-1zM1204 348h1v11h-1zM1205 341h1v10h-1zM1206 333h1v11h-1zM1207 326h1v10h-1zM1208 319h1v10h-1zM1209 310h1v12h-1zM1210 300h1v13h-1zM1211 291h1v12h-1zM1212 282h1v12h-1zM1213 273h1v13h-1zM1214 265h1v12h-1zM1215 257h1v13h-1zM1216 252h1v11h-1zM1217 249h1v9h-1zM1218 248h1v7h-1zM1219 246h1v8h-1zM1220 243h1v9h-1zM1221 240h1v10h-1zM1222 237h1v10h-1zM1223 233h1v10h-1zM1224 229h1v10h-1zM1225 228h1v8h-1zM1226 230h1v9h-1zM1227 233h1v10h-1zM1228 237h1v11h-1zM1229 241h1v10h-1zM1230 245h1v10h-1zM1231 248h1v11h-1zM1232 253h1v11h-1zM1233 258h1v11h-1zM1234 264h1v11h-1zM1235 271h1v11h-1zM1236 279h1v10h-1zM1237 286h1v11h-1zM1238 294h1v11h-1zM1239 302h1v10h-1zM1240 309h1v10h-1zM1241 316h1v11h-1zM1242 324h1v12h-1zM1243 333h1v12h-1zM1244 342h1v12h-1zM1245 351h1v12h-1zM1246 360h1v12h-1zM1247 368h1v12h-1zM1248 375h1v12h-1zM1249 382h1v10h-1zM1250 386h1v8h-1zM1251 388h1v8h-1zM1252 390h1v8h-1zM1253 392h1v9h-1zM1254 394h1v9h-1zM1255 397h1v10h-1zM1256 401h1v10h-1zM1257 405h1v10h-1zM1258 406h1v9h-1zM1259 403h1v10h-1zM1260 398h1v11h-1zM1261 394h1v11h-1zM1262 391h1v10h-1zM1263 387h1v10h-1zM1264 383h1v11h-1zM1265 378h1v11h-1zM1266 372h1v11h-1zM1267 366h1v11h-1zM1268 359h1v11h-1zM1269 352h1v10h-1zM1270 344h1v11h-1zM1271 336h1v11h-1zM1272 329h1v10h-1zM1273 322h1v10h-1zM1274 314h1v11h-1zM1275 305h1v12h-1zM1276 296h1v12h-1zM1277 287h1v12h-1zM1278 278h1v12h-1zM1279 269h1v12h-1zM1280 261h1v12h-1zM1281 254h1v12h-1zM1282 250h1v10h-1zM1283 248h1v8h-1zM1284 247h1v8h-1zM1285 244h1v9h-1zM1286 242h1v9h-1zM1287 239h1v9h-1zM1288 235h1v10h-1zM1289 231h1v10h-1zM1290 228h1v9h-1zM1291 229h1v9h-1zM1292 231h1v11h-1zM1293 235h1v11h-1zM1294 239h1v11h-1zM1295 243h1v10h-1zM1296 247h1v10h-1zM1297 250h1v11h-1zM1298 255h1v12h-1zM1299 261h1v11h-1zM1300 268h1v11h-1zM1301 275h1v11h-1zM1302 283h1v10h-1zM1303 290h1v11h-1zM1304 298h1v10h-1zM1305 305h1v11h-1zM1306 313h1v10h-1zM1307 320h1v12h-1zM1308 329h1v12h-1zM1309 338h1v12h-1zM1310 347h1v12h-1zM1311 356h1v12h-1zM1312 364h1v13h-1zM1313 372h1v12h-1zM1314 379h1v11h-1zM1315 384h1v10h-1zM1316 387h1v8h-1zM1317 389h1v8h-1zM1318 391h1v8h-1zM1319 393h1v9h-1zM1320 396h1v9h-1zM1321 399h1v10h-1zM1322 403h1v10h-1zM1323 407h1v8h-1zM1324 404h1v10h-1zM1325 400h1v11h-1zM1326 396h1v11h-1zM1327 392h1v10h-1zM1328 389h1v10h-1zM1329 385h1v10h-1zM1330 380h1v11h-1zM1331 375h1v11h-1zM1332 369h1v11h-1zM1333 362h1v11h-1z"/></g>
<path fill="#fff" shape-rendering="crispEdges" d="M15 11h1v1h-1zM16 11h1v1h-1zM17 11h1v1h-1zM14 12h1v1h-1zM18 12h1v1h-1zM18 13h1v1h-1zM18 14h1v1h-1zM17 15h1v1h-1zM16 16h1v1h-1zM15 17h1v1h-1zM14 18h1v1h-1zM14 19h1v1h-1zM15 19h1v1h-1zM16 19h1v1h-1zM17 19h1v1h-1zM18 19h1v1h-1zM21 11h1v1h-1zM22 11h1v1h-1zM23 11h1v1h-1zM20 12h1v1h-1zM24 12h1v1h-1zM20 13h1v1h-1zM24 13h1v1h-1zM20 14h1v1h-1zM24 14h1v1h-1zM20 15h1v1h-1zM24 15h1v1h-1zM20 16h1v1h-1zM24 16h1v1h-1zM20 17h1v1h-1zM24 17h1v1h-1zM20 18h1v1h-1zM24 18h1v1h-1zM21 19h1v1h-1zM22 19h1v1h-1zM23 19h1v1h-1zM16 87h1v1h-1zM14 88h1v1h-1zM15 88h1v1h-1zM16 88h1v1h-1zM16 89h1v1h-1zM16 90h1v1h-1zM16 91h1v1h-1zM16 92h1v1h-1zM16 93h1v1h-1zM16 94h1v1h-1zM16 95h1v1h-1zM20 87h1v1h-1zM21 87h1v1h-1zM22 87h1v1h-1zM23 87h1v1h-1zM24 87h1v1h-1zM20 88h1v1h-1zM20 89h1v1h-1zM20 90h1v1h-1zM21 90h1v1h-1zM22 90h1v1h-1zM23 90h1v1h-1zM24 91h1v1h-1zM24 92h1v1h-1zM24 93h1v1h-1zM20 94h1v1h-1zM24 94h1v1h-1zM21 95h1v1h-1zM22 95h1v1h-1zM23 95h1v1h-1zM16 163h1v1h-1zM14 164h1v1h-1zM15 164h1v1h-1zM16 164h1v1h-1zM16 165h1v1h-1zM16 166h1v1h-1zM16 167h1v1h-1zM16 168h1v1h-1zM16 169h1v1h-1zM16 170h1v1h-1zM16 171h1v1h-1zM21 163h1v1h-1zM22 163h1v1h-1zM23 163h1v1h-1zM20 164h1v1h-1zM24 164h1v1h-1zM20 165h1v1h-1zM24 165h1v1h-1zM20 166h1v1h-1zM24 166h1v1h-1zM20 167h1v1h-1zM24 167h1v1h-1zM20 168h1v1h-1zM24 168h1v1h-1zM20 169h1v1h-1zM24 169h1v1h-1zM20 170h1v1h-1zM24 170h1v1h-1zM21 171h1v1h-1zM22 171h1v1h-1zM23 171h1v1h-1zM20 239h1v1h-1zM21 239h1v1h-1zM22 239h1v1h-1zM23 239h1v1h-1zM24 239h1v1h-1zM20 240h1v1h-1zM20 241h1v1h-1zM20 242h1v1h-1zM21 242h1v1h-1zM22 242h1v1h-1zM23 242h1v1h-1zM24 243h1v1h-1zM24 244h1v1h-1zM24 245h1v1h-1zM20 246h1v1h-1zM24 246h1v1h-1zM21 247h1v1h-1zM22 247h1v1h-1zM23 247h1v1h-1zM21 316h1v1h-1zM22 316h1v1h-1zM23 316h1v1h-1zM20 317h1v1h-1zM24 317h1v1h-1zM20 318h1v1h-1zM24 318h1v1h-1zM20 319h1v1h-1zM24 319h1v1h-1zM20 320h1v1h-1zM24 320h1v1h-1zM20 321h1v1h-1zM24 321h1v1h-1zM20 322h1v1h-1zM24 322h1v1h-1zM20 323h1v1h-1zM24 323h1v1h-1zM21 324h1v1h-1zM22 324h1v1h-1zM23 324h1v1h-1zM17 397h1v1h-1zM18 397h1v1h-1zM20 392h1v1h-1zM21 392h1v1h-1zM22 392h1v1h-1zM23 392h1v1h-1zM24 392h1v1h-1zM20 393h1v1h-1zM20 394h1v1h-1zM20 395h1v1h-1zM21 395h1v1h-1zM22 395h1v1h-1zM23 395h1v1h-1zM24 396h1v1h-1zM24 397h1v1h-1zM24 398h1v1h-1zM20 399h1v1h-1zM24 399h1v1h-1zM21 400h1v1h-1zM22 400h1v1h-1zM23 400h1v1h-1zM11 473h1v1h-1zM12 473h1v1h-1zM16 468h1v1h-1zM14 469h1v1h-1zM15 469h1v1h-1zM16 469h1v1h-1zM16 470h1v1h-1zM16 471h1v1h-1zM16 472h1v1h-1zM16 473h1v1h-1zM16 474h1v1h-1zM16 475h1v1h-1zM16 476h1v1h-1zM21 468h1v1h-1zM22 468h1v1h-1zM23 468h1v1h-1zM20 469h1v1h-1zM24 469h1v1h-1zM20 470h1v1h-1zM24 470h1v1h-1zM20 471h1v1h-1zM24 471h1v1h-1zM20 472h1v1h-1zM24 472h1v1h-1zM20 473h1v1h-1zM24 473h1v1h-1zM20 474h1v1h-1zM24 474h1v1h-1zM20 475h1v1h-1zM24 475h1v1h-1zM21 476h1v1h-1zM22 476h1v1h-1zM23 476h1v1h-1zM11 549h1v1h-1zM12 549h1v1h-1zM16 544h1v1h-1zM14 545h1v1h-1zM15 545h1v1h-1zM16 545h1v1h-1zM16 546h1v1h-1zM16 547h1v1h-1zM16 548h1v1h-1zM16 549h1v1h-1zM16 550h1v1h-1zM16 551h1v1h-1zM16 552h1v1h-1zM20 544h1v1h-1zM21 544h1v1h-1zM22 544h1v1h-1zM23 544h1v1h-1zM24 544h1v1h-1zM20 545h1v1h-1zM20 546h1v1h-1zM20 547h1v1h-1zM21 547h1v1h-1zM22 547h1v1h-1zM23 547h1v1h-1zM24 548h1v1h-1zM24 549h1v1h-1zM24 550h1v1h-1zM20 551h1v1h-1zM24 551h1v1h-1zM21 552h1v1h-1zM22 552h1v1h-1zM23 552h1v1h-1zM11 626h1v1h-1zM12 626h1v1h-1zM15 621h1v1h-1zM16 621h1v1h-1zM17 621h1v1h-1zM14 622h1v1h-1zM18 622h1v1h-1zM18 623h1v1h-1zM18 624h1v1h-1zM17 625h1v1h-1zM16 626h1v1h-1zM15 627h1v1h-1zM14 628h1v1h-1zM14 629h1v1h-1zM15 629h1v1h-1zM16 629h1v1h-1zM17 629h1v1h-1zM18 629h1v1h-1zM21 621h1v1h-1zM22 621h1v1h-1zM23 621h1v1h-1zM20 622h1v1h-1zM24 622h1v1h-1zM20 623h1v1h-1zM24 623h1v1h-1zM20 624h1v1h-1zM24 624h1v1h-1zM20 625h1v1h-1zM24 625h1v1h-1zM20 626h1v1h-1zM24 626h1v1h-1zM20 627h1v1h-1zM24 627h1v1h-1zM20 628h1v1h-1zM24 628h1v1h-1zM21 629h1v1h-1zM22 629h1v1h-1zM23 629h1v1h-1zM28 631h1v1h-1zM29 631h1v1h-1zM30 631h1v1h-1zM27 632h1v1h-1zM31 632h1v1h-1zM27 633h1v1h-1zM31 633h1v1h-1zM27 634h1v1h-1zM31 634h1v1h-1zM27 635h1v1h-1zM31 635h1v1h-1zM27 636h1v1h-1zM31 636h1v1h-1zM27 637h1v1h-1zM31 637h1v1h-1zM27 638h1v1h-1zM31 638h1v1h-1zM28 639h1v1h-1zM29 639h1v1h-1zM30 639h1v1h-1zM151 631h1v1h-1zM152 631h1v1h-1zM153 631h1v1h-1zM150 632h1v1h-1zM154 632h1v1h-1zM150 633h1v1h-1zM154 633h1v1h-1zM150 634h1v1h-1zM154 634h1v1h-1zM150 635h1v1h-1zM154 635h1v1h-1zM150 636h1v1h-1zM154 636h1v1h-1zM150 637h1v1h-1zM154 637h1v1h-1zM150 638h1v1h-1zM154 638h1v1h-1zM151 639h1v1h-1zM152 639h1v1h-1zM153 639h1v1h-1zM156 639h1v1h-1zM160 631h1v1h-1zM161 631h1v1h-1zM162 631h1v1h-1zM159 632h1v1h-1zM163 632h1v1h-1zM159 633h1v1h-1zM163 633h1v1h-1zM159 634h1v1h-1zM163 634h1v1h-1zM159 635h1v1h-1zM163 635h1v1h-1zM159 636h1v1h-1zM163 636h1v1h-1zM159 637h1v1h-1zM163 637h1v1h-1zM159 638h1v1h-1zM163 638h1v1h-1zM160 639h1v1h-1zM161 639h1v1h-1zM162 639h1v1h-1zM166 631h1v1h-1zM167 631h1v1h-1zM168 631h1v1h-1zM165 632h1v1h-1zM169 632h1v1h-1zM169 633h1v1h-1zM169 634h1v1h-1zM168 635h1v1h-1zM167 636h1v1h-1zM166 637h1v1h-1zM165 638h1v1h-1zM165 639h1v1h-1zM166 639h1v1h-1zM167 639h1v1h-1zM168 639h1v1h-1zM169 639h1v1h-1zM282 631h1v1h-1zM283 631h1v1h-1zM284 631h1v1h-1zM281 632h1v1h-1zM285 632h1v1h-1zM281 633h1v1h-1zM285 633h1v1h-1zM281 634h1v1h-1zM285 634h1v1h-1zM281 635h1v1h-1zM285 635h1v1h-1zM281 636h1v1h-1zM285 636h1v1h-1zM281 637h1v1h-1zM285 637h1v1h-1zM281 638h1v1h-1zM285 638h1v1h-1zM282 639h1v1h-1zM283 639h1v1h-1zM284 639h1v1h-1zM287 639h1v1h-1zM291 631h1v1h-1zM292 631h1v1h-1zM293 631h1v1h-1zM290 632h1v1h-1zM294 632h1v1h-1zM290 633h1v1h-1zM294 633h1v1h-1zM290 634h1v1h-1zM294 634h1v1h-1zM290 635h1v1h-1zM294 635h1v1h-1zM290 636h1v1h-1zM294 636h1v1h-1zM290 637h1v1h-1zM294 637h1v1h-1zM290 638h1v1h-1zM294 638h1v1h-1zM291 639h1v1h-1zM292 639h1v1h-1zM293 639h1v1h-1zM299 631h1v1h-1zM298 632h1v1h-1zM299 632h1v1h-1zM298 633h1v1h-1zM299 633h1v1h-1zM297 634h1v1h-1zM299 634h1v1h-1zM297 635h1v1h-1zM299 635h1v1h-1zM296 636h1v1h-1zM299 636h1v1h-1zM296 637h1v1h-1zM297 637h1v1h-1zM298 637h1v1h-1zM299 637h1v1h-1zM300 637h1v1h-1zM299 638h1v1h-1zM299 639h1v1h-1zM412 631h1v1h-1zM413 631h1v1h-1zM414 631h1v1h-1zM411 632h1v1h-1zM415 632h1v1h-1zM411 633h1v1h-1zM415 633h1v1h-1zM411 634h1v1h-1zM415 634h1v1h-1zM411 635h1v1h-1zM415 635h1v1h-1zM411 636h1v1h-1zM415 636h1v1h-1zM411 637h1v1h-1zM415 637h1v1h-1zM411 638h1v1h-1zM415 638h1v1h-1zM412 639h1v1h-1zM413 639h1v1h-1zM414 639h1v1h-1zM417 639h1v1h-1zM421 631h1v1h-1zM422 631h1v1h-1zM423 631h1v1h-1zM420 632h1v1h-1zM424 632h1v1h-1zM420 633h1v1h-1zM424 633h1v1h-1zM420 634h1v1h-1zM424 634h1v1h-1zM420 635h1v1h-1zM424 635h1v1h-1zM420 636h1v1h-1zM424 636h1v1h-1zM420 637h1v1h-1zM424 637h1v1h-1zM420 638h1v1h-1zM424 638h1v1h-1zM421 639h1v1h-1zM422 639h1v1h-1zM423 639h1v1h-1zM427 631h1v1h-1zM428 631h1v1h-1zM429 631h1v1h-1zM426 632h1v1h-1zM430 632h1v1h-1zM426 633h1v1h-1zM426 634h1v1h-1zM426 635h1v1h-1zM427 635h1v1h-1zM428 635h1v1h-1zM429 635h1v1h-1zM426 636h1v1h-1zM430 636h1v1h-1zM426 637h1v1h-1zM430 637h1v1h-1zM426 638h1v1h-1zM430 638h1v1h-1zM427 639h1v1h-1zM428 639h1v1h-1zM429 639h1v1h-1zM543 631h1v1h-1zM544 631h1v1h-1zM545 631h1v1h-1zM542 632h1v1h-1zM546 632h1v1h-1zM542 633h1v1h-1zM546 633h1v1h-1zM542 634h1v1h-1zM546 634h1v1h-1zM542 635h1v1h-1zM546 635h1v1h-1zM542 636h1v1h-1zM546 636h1v1h-1zM542 637h1v1h-1zM546 637h1v1h-1zM542 638h1v1h-1zM546 638h1v1h-1zM543 639h1v1h-1zM544 639h1v1h-1zM545 639h1v1h-1zM548 639h1v1h-1zM552 631h1v1h-1zM553 631h1v1h-1zM554 631h1v1h-1zM551 632h1v1h-1zM555 632h1v1h-1zM551 633h1v1h-1zM555 633h1v1h-1zM551 634h1v1h-1zM555 634h1v1h-1zM551 635h1v1h-1zM555 635h1v1h-1zM551 636h1v1h-1zM555 636h1v1h-1zM551 637h1v1h-1zM555 637h1v1h-1zM551 638h1v1h-1zM555 638h1v1h-1zM552 639h1v1h-1zM553 639h1v1h-1zM554 639h1v1h-1zM558 631h1v1h-1zM559 631h1v1h-1zM560 631h1v1h-1zM557 632h1v1h-1zM561 632h1v1h-1zM557 633h1v1h-1zM561 633h1v1h-1zM557 634h1v1h-1zM561 634h1v1h-1zM558 635h1v1h-1zM559 635h1v1h-1zM560 635h1v1h-1zM557 636h1v1h-1zM561 636h1v1h-1zM557 637h1v1h-1zM561 637h1v1h-1zM557 638h1v1h-1zM561 638h1v1h-1zM558 639h1v1h-1zM559 639h1v1h-1zM560 639h1v1h-1zM676 631h1v1h-1zM677 631h1v1h-1zM678 631h1v1h-1zM675 632h1v1h-1zM679 632h1v1h-1zM675 633h1v1h-1zM679 633h1v1h-1zM675 634h1v1h-1zM679 634h1v1h-1zM675 635h1v1h-1zM679 635h1v1h-1zM675 636h1v1h-1zM679 636h1v1h-1zM675 637h1v1h-1zM679 637h1v1h-1zM675 638h1v1h-1zM679 638h1v1h-1zM676 639h1v1h-1zM677 639h1v1h-1zM678 639h1v1h-1zM681 639h1v1h-1zM686 631h1v1h-1zM684 632h1v1h-1zM685 632h1v1h-1zM686 632h1v1h-1zM686 633h1v1h-1zM686 634h1v1h-1zM686 635h1v1h-1zM686 636h1v1h-1zM686 637h1v1h-1zM686 638h1v1h-1zM686 639h1v1h-1zM804 631h1v1h-1zM805 631h1v1h-1zM806 631h1v1h-1zM803 632h1v1h-1zM807 632h1v1h-1zM803 633h1v1h-1zM807 633h1v1h-1zM803 634h1v1h-1zM807 634h1v1h-1zM803 635h1v1h-1zM807 635h1v1h-1zM803 636h1v1h-1zM807 636h1v1h-1zM803 637h1v1h-1zM807 637h1v1h-1zM803 638h1v1h-1zM807 638h1v1h-1zM804 639h1v1h-1zM805 639h1v1h-1zM806 639h1v1h-1zM809 639h1v1h-1zM814 631h1v1h-1zM812 632h1v1h-1zM813 632h1v1h-1zM814 632h1v1h-1zM814 633h1v1h-1zM814 634h1v1h-1zM814 635h1v1h-1zM814 636h1v1h-1zM814 637h1v1h-1zM814 638h1v1h-1zM814 639h1v1h-1zM819 631h1v1h-1zM820 631h1v1h-1zM821 631h1v1h-1zM818 632h1v1h-1zM822 632h1v1h-1zM822 633h1v1h-1zM822 634h1v1h-1zM821 635h1v1h-1zM820 636h1v1h-1zM819 637h1v1h-1zM818 638h1v1h-1zM818 639h1v1h-1zM819 639h1v1h-1zM820 639h1v1h-1zM821 639h1v1h-1zM822 639h1v1h-1zM934 631h1v1h-1zM935 631h1v1h-1zM936 631h1v1h-1zM933 632h1v1h-1zM937 632h1v1h-1zM933 633h1v1h-1zM937 633h1v1h-1zM933 634h1v1h-1zM937 634h1v1h-1zM933 635h1v1h-1zM937 635h1v1h-1zM933 636h1v1h-1zM937 636h1v1h-1zM933 637h1v1h-1zM937 637h1v1h-1zM933 638h1v1h-1zM937 638h1v1h-1zM934 639h1v1h-1zM935 639h1v1h-1zM936 639h1v1h-1zM939 639h1v1h-1zM944 631h1v1h-1zM942 632h1v1h-1zM943 632h1v1h-1zM944 632h1v1h-1zM944 633h1v1h-1zM944 634h1v1h-1zM944 635h1v1h-1zM944 636h1v1h-1zM944 637h1v1h-1zM944 638h1v1h-1zM944 639h1v1h-1zM951 631h1v1h-1zM950 632h1v1h-1zM951 632h1v1h-1zM950 633h1v1h-1zM951 633h1v1h-1zM949 634h1v1h-1zM951 634h1v1h-1zM949 635h1v1h-1zM951 635h1v1h-1zM948 636h1v1h-1zM951 636h1v1h-1zM948 637h1v1h-1zM949 637h1v1h-1zM950 637h1v1h-1zM951 637h1v1h-1zM952 637h1v1h-1zM951 638h1v1h-1zM951 639h1v1h-1zM1065 631h1v1h-1zM1066 631h1v1h-1zM1067 631h1v1h-1zM1064 632h1v1h-1zM1068 632h1v1h-1zM1064 633h1v1h-1zM1068 633h1v1h-1zM1064 634h1v1h-1zM1068 634h1v1h-1zM1064 635h1v1h-1zM1068 635h1v1h-1zM1064 636h1v1h-1zM1068 636h1v1h-1zM1064 637h1v1h-1zM1068 637h1v1h-1zM1064 638h1v1h-1zM1068 638h1v1h-1zM1065 639h1v1h-1zM1066 639h1v1h-1zM1067 639h1v1h-1zM1070 639h1v1h-1zM1075 631h1v1h-1zM1073 632h1v1h-1zM1074 632h1v1h-1zM1075 632h1v1h-1zM1075 633h1v1h-1zM1075 634h1v1h-1zM1075 635h1v1h-1zM1075 636h1v1h-1zM1075 637h1v1h-1zM1075 638h1v1h-1zM1075 639h1v1h-1zM1080 631h1v1h-1zM1081 631h1v1h-1zM1082 631h1v1h-1zM1079 632h1v1h-1zM1083 632h1v1h-1zM1079 633h1v1h-1zM1079 634h1v1h-1zM1079 635h1v1h-1zM1080 635h1v1h-1zM1081 635h1v1h-1zM1082 635h1v1h-1zM1079 636h1v1h-1zM1083 636h1v1h-1zM1079 637h1v1h-1zM1083 637h1v1h-1zM1079 638h1v1h-1zM1083 638h1v1h-1zM1080 639h1v1h-1zM1081 639h1v1h-1zM1082 639h1v1h-1zM1195 631h1v1h-1zM1196 631h1v1h-1zM1197 631h1v1h-1zM1194 632h1v1h-1zM1198 632h1v1h-1zM1194 633h1v1h-1zM1198 633h1v1h-1zM1194 634h1v1h-1zM1198 634h1v1h-1zM1194 635h1v1h-1zM1198 635h1v1h-1zM1194 636h1v1h-1zM1198 636h1v1h-1zM1194 637h1v1h-1zM1198 637h1v1h-1zM1194 638h1v1h-1zM1198 638h1v1h-1zM1195 639h1v1h-1zM1196 639h1v1h-1zM1197 639h1v1h-1zM1200 639h1v1h-1zM1205 631h1v1h-1zM1203 632h1v1h-1zM1204 632h1v1h-1zM1205 632h1v1h-1zM1205 633h1v1h-1zM1205 634h1v1h-1zM1205 635h1v1h-1zM1205 636h1v1h-1zM1205 637h1v1h-1zM1205 638h1v1h-1zM1205 639h1v1h-1zM1210 631h1v1h-1zM1211 631h1v1h-1zM1212 631h1v1h-1zM1209 632h1v1h-1zM1213 632h1v1h-1zM1209 633h1v1h-1zM1213 633h1v1h-1zM1209 634h1v1h-1zM1213 634h1v1h-1zM1210 635h1v1h-1zM1211 635h1v1h-1zM1212 635h1v1h-1zM1209 636h1v1h-1zM1213 636h1v1h-1zM1209 637h1v1h-1zM1213 637h1v1h-1zM1209 638h1v1h-1zM1213 638h1v1h-1zM1210 639h1v1h-1zM1211 639h1v1h-1zM1212 639h1v1h-1zM1329 631h1v1h-1zM1330 631h1v1h-1zM1331 631h1v1h-1zM1328 632h1v1h-1zM1332 632h1v1h-1zM1328 633h1v1h-1zM1332 633h1v1h-1zM1328 634h1v1h-1zM1332 634h1v1h-1zM1328 635h1v1h-1zM1332 635h1v1h-1zM1328 636h1v1h-1zM1332 636h1v1h-1zM1328 637h1v1h-1zM1332 637h1v1h-1zM1328 638h1v1h-1zM1332 638h1v1h-1zM1329 639h1v1h-1zM1330 639h1v1h-1zM1331 639h1v1h-1zM1334 639h1v1h-1zM1338 631h1v1h-1zM1339 631h1v1h-1zM1340 631h1v1h-1zM1337 632h1v1h-1zM1341 632h1v1h-1zM1341 633h1v1h-1zM1341 634h1v1h-1zM1340 635h1v1h-1zM1339 636h1v1h-1zM1338 637h1v1h-1zM1337 638h1v1h-1zM1337 639h1v1h-1zM1338 639h1v1h-1zM1339 639h1v1h-1zM1340 639h1v1h-1zM1341 639h1v1h-1z"/>
</svg>
</body></html>
